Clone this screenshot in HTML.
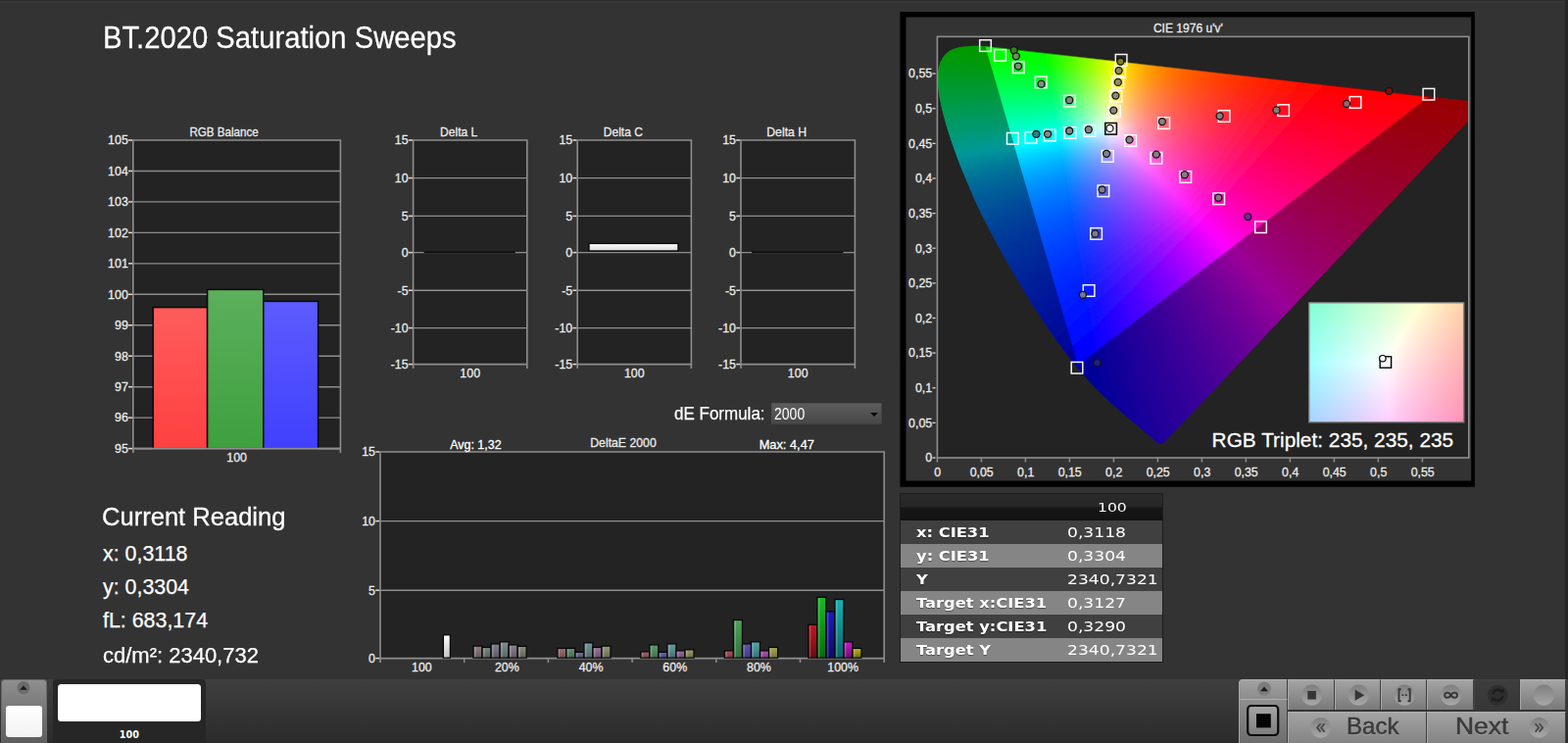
<!DOCTYPE html>
<html lang="en">
<head>
<meta charset="utf-8">
<title>BT.2020 Saturation Sweeps</title>
<style>
html,body{margin:0;padding:0}
body{width:1600px;height:758px;overflow:hidden;position:relative;background:#333333;color:#fff;
  font-family:"Liberation Sans",sans-serif;}
.abs{position:absolute;white-space:nowrap;line-height:1;transform-origin:0 0}
#topstrip{left:0;top:0;width:1600px;height:3px;background:linear-gradient(#2e2e2e 0,#2e2e2e 33%,#383838 40%,#383838 100%)}
#rightstrip{left:1597px;top:0;width:3px;height:694px;background:#262626}
#charts{position:absolute;left:0;top:0}
h1{margin:0;font-weight:normal;-webkit-text-stroke:.3px #fff;font-size:31.6px;left:104.8px;top:23px;transform:scaleX(.925);color:#fff;text-shadow:0 0 1px rgba(0,0,0,.5)}
#reading{left:105px;top:0}
#reading h2{-webkit-text-stroke:.28px #fff;margin:0;font-weight:normal;font-size:25px;position:absolute;left:-0.6px;top:514.6px;white-space:nowrap;transform:scaleX(1.022);transform-origin:0 0}
#reading p{-webkit-text-stroke:.25px #fff;margin:0;font-size:21.4px;position:absolute;left:0;white-space:nowrap}
#deform{-webkit-text-stroke:.25px #fff;left:687.6px;top:412.6px;font-size:18.4px;transform:scaleX(.924)}
#desel{left:787px;top:411.4px;width:112.6px;height:21.2px;box-sizing:border-box;
  background:linear-gradient(#5d5d5d,#474747);border:1px solid #505050;border-bottom-color:#3e3e3e;border-right-color:#444}
#desel span{position:absolute;left:1.8px;top:2.6px;font-size:15.6px;color:#fff;transform:scaleX(.9);transform-origin:0 0}
#desel i{position:absolute;left:100.2px;top:8.4px;width:0;height:0;border-left:4.2px solid transparent;border-right:4.2px solid transparent;border-top:4px solid #0a0a0a}
table#data{position:absolute;left:919.4px;top:503.8px;width:267px;border-collapse:collapse;table-layout:fixed;
  font-family:"DejaVu Sans","Liberation Sans",sans-serif;font-size:14.6px;color:#fff;box-shadow:0 0 0 1px #1c1c1c}
table#data td,table#data th{padding:0;height:24px;white-space:nowrap;overflow:visible;line-height:24px;text-align:left}
table#data tr.hd th{height:26.4px;line-height:26.4px;background:linear-gradient(#2a2a2a 0,#262626 48%,#161616 52%,#121212 100%);font-weight:normal}
table#data tr.d td{background:#404040}
table#data tr.l td{background:#858585}
table#data td.k{width:170.6px;font-weight:bold}
table#data td.k span{display:inline-block;transform-origin:0 50%;transform:scaleX(1.117);margin-left:15.2px;text-shadow:0 1px 1px rgba(0,0,0,.45)}
table#data td.v span{display:inline-block;margin-left:-1px;transform-origin:0 50%;transform:scaleX(1.175)}
table#data th span{display:inline-block;transform-origin:0 50%;transform:scaleX(1.24);font-size:12.6px}
#toolbar{left:0;top:693px;width:1600px;height:65px;background:linear-gradient(#3f3f3f,#2b2b2b)}
.tb{position:absolute;box-sizing:border-box}
#lbtn{left:1px;top:0;width:47px;height:66px;border-radius:4px 4px 0 0;background:linear-gradient(#8f8f8f,#5c5c5c);border:1px solid #6a6a6a;border-bottom:0}
#lbtn .sw{position:absolute;left:4px;top:26.4px;width:37px;height:31.4px;border-radius:3px;background:linear-gradient(#fff,#f2f2f2)}
#sel{left:54px;top:0;width:155.6px;height:66px;border-radius:4px 4px 0 0;background:#262626}
#sel .sw{position:absolute;left:5.4px;top:5.4px;width:146px;height:37.6px;border-radius:3.5px;background:#fff}
#sel b{position:absolute;left:0;width:100%;text-align:center;top:51.6px;font:bold 9.6px/1 "DejaVu Sans",sans-serif;color:#fff}
.gbtn{background:linear-gradient(#a4a4a4,#797979);border-left:1px solid #a8a8a8;border-top:1px solid #b0b0b0;border-right:1px solid #3e3e3e}
.gbtn svg{position:absolute;left:0;top:0}
#nav span{position:absolute;transform-origin:0 0;-webkit-text-stroke:.45px #3a3a3a;color:#3a3a3a;font-size:23.6px;line-height:1;white-space:nowrap;text-shadow:0 1px 0 rgba(255,255,255,.25)}
</style>
</head>
<body>
<div id="topstrip" class="abs"></div>
<div id="rightstrip" class="abs"></div>
<h1 class="abs">BT.2020 Saturation Sweeps</h1>

<svg id="charts" width="1600" height="758" viewBox="0 0 1600 758" font-family="Liberation Sans, sans-serif">
<defs>
<linearGradient id="gr" x1="0" y1="0" x2="0" y2="1"><stop offset="0" stop-color="#ff5c5c"/><stop offset="1" stop-color="#ff4040"/></linearGradient>
<linearGradient id="gg" x1="0" y1="0" x2="0" y2="1"><stop offset="0" stop-color="#5cb05c"/><stop offset="1" stop-color="#3ea03e"/></linearGradient>
<linearGradient id="gb" x1="0" y1="0" x2="0" y2="1"><stop offset="0" stop-color="#5c5cff"/><stop offset="1" stop-color="#4040ff"/></linearGradient>
<linearGradient id="gw" x1="0" y1="0" x2="0" y2="1"><stop offset="0" stop-color="#ffffff"/><stop offset="1" stop-color="#d8d8d8"/></linearGradient>
</defs>
<g id="rgb-balance">
<rect x="135.8" y="143" width="211.6" height="314.6" fill="#232323"/>
<path d="M131 143H135.2" stroke="#dcdcdc" stroke-width="1.5"/>
<text x="130.8" y="147.3" font-size="12.4" text-anchor="end" fill="#ececec" stroke="#ececec" stroke-width=".28">105</text>
<path d="M135.8 174.46H347.4" stroke="#8e8e8e" stroke-width="1.4"/>
<path d="M131 174.46H135.2" stroke="#dcdcdc" stroke-width="1.5"/>
<text x="130.8" y="178.76" font-size="12.4" text-anchor="end" fill="#ececec" stroke="#ececec" stroke-width=".28">104</text>
<path d="M135.8 205.92H347.4" stroke="#8e8e8e" stroke-width="1.4"/>
<path d="M131 205.92H135.2" stroke="#dcdcdc" stroke-width="1.5"/>
<text x="130.8" y="210.22" font-size="12.4" text-anchor="end" fill="#ececec" stroke="#ececec" stroke-width=".28">103</text>
<path d="M135.8 237.38H347.4" stroke="#8e8e8e" stroke-width="1.4"/>
<path d="M131 237.38H135.2" stroke="#dcdcdc" stroke-width="1.5"/>
<text x="130.8" y="241.68" font-size="12.4" text-anchor="end" fill="#ececec" stroke="#ececec" stroke-width=".28">102</text>
<path d="M135.8 268.84H347.4" stroke="#8e8e8e" stroke-width="1.4"/>
<path d="M131 268.84H135.2" stroke="#dcdcdc" stroke-width="1.5"/>
<text x="130.8" y="273.14" font-size="12.4" text-anchor="end" fill="#ececec" stroke="#ececec" stroke-width=".28">101</text>
<path d="M135.8 300.3H347.4" stroke="#8e8e8e" stroke-width="1.4"/>
<path d="M131 300.3H135.2" stroke="#dcdcdc" stroke-width="1.5"/>
<text x="130.8" y="304.6" font-size="12.4" text-anchor="end" fill="#ececec" stroke="#ececec" stroke-width=".28">100</text>
<path d="M135.8 331.76H347.4" stroke="#8e8e8e" stroke-width="1.4"/>
<path d="M131 331.76H135.2" stroke="#dcdcdc" stroke-width="1.5"/>
<text x="130.8" y="336.06" font-size="12.4" text-anchor="end" fill="#ececec" stroke="#ececec" stroke-width=".28">99</text>
<path d="M135.8 363.22H347.4" stroke="#8e8e8e" stroke-width="1.4"/>
<path d="M131 363.22H135.2" stroke="#dcdcdc" stroke-width="1.5"/>
<text x="130.8" y="367.52" font-size="12.4" text-anchor="end" fill="#ececec" stroke="#ececec" stroke-width=".28">98</text>
<path d="M135.8 394.68H347.4" stroke="#8e8e8e" stroke-width="1.4"/>
<path d="M131 394.68H135.2" stroke="#dcdcdc" stroke-width="1.5"/>
<text x="130.8" y="398.98" font-size="12.4" text-anchor="end" fill="#ececec" stroke="#ececec" stroke-width=".28">97</text>
<path d="M135.8 426.14H347.4" stroke="#8e8e8e" stroke-width="1.4"/>
<path d="M131 426.14H135.2" stroke="#dcdcdc" stroke-width="1.5"/>
<text x="130.8" y="430.44" font-size="12.4" text-anchor="end" fill="#ececec" stroke="#ececec" stroke-width=".28">96</text>
<path d="M131 457.6H135.2" stroke="#dcdcdc" stroke-width="1.5"/>
<text x="130.8" y="461.9" font-size="12.4" text-anchor="end" fill="#ececec" stroke="#ececec" stroke-width=".28">95</text>
<path d="M135.8 462.1V143H347.4V462.1" fill="none" stroke="#8e8e8e" stroke-width="1.6"/>
<path d="M135.8 457.6H347.4" stroke="#8e8e8e" stroke-width="1.6"/>
<text x="228.6" y="138.5" font-size="12.6" text-anchor="middle" textLength="70.4" lengthAdjust="spacingAndGlyphs" fill="#ececec" stroke="#ececec" stroke-width=".28">RGB Balance</text>
<text x="241.6" y="471.4" font-size="12.4" text-anchor="middle" fill="#ececec" stroke="#ececec" stroke-width=".28">100</text>
<rect x="156.2" y="313.6" width="55.4" height="144" fill="url(#gr)" stroke="#0a0a0a" stroke-width="1.5"/>
<rect x="211.6" y="295.4" width="57.2" height="162.2" fill="url(#gg)" stroke="#0a0a0a" stroke-width="1.5"/>
<rect x="268.8" y="307.4" width="55.8" height="150.2" fill="url(#gb)" stroke="#0a0a0a" stroke-width="1.5"/>
<path d="M135.8 457.6H347.4" stroke="#8e8e8e" stroke-width="1.6"/>
</g>
<g id="delta-l">
<rect x="421.6" y="143" width="116.2" height="228.6" fill="#232323"/>
<path d="M416.8 143H421" stroke="#dcdcdc" stroke-width="1.5"/>
<text x="416.6" y="147.3" font-size="12.4" text-anchor="end" fill="#ececec" stroke="#ececec" stroke-width=".28">15</text>
<path d="M421.6 181.6H537.8" stroke="#8e8e8e" stroke-width="1.4"/>
<path d="M416.8 181.6H421" stroke="#dcdcdc" stroke-width="1.5"/>
<text x="416.6" y="185.9" font-size="12.4" text-anchor="end" fill="#ececec" stroke="#ececec" stroke-width=".28">10</text>
<path d="M421.6 220.4H537.8" stroke="#8e8e8e" stroke-width="1.4"/>
<path d="M416.8 220.4H421" stroke="#dcdcdc" stroke-width="1.5"/>
<text x="416.6" y="224.7" font-size="12.4" text-anchor="end" fill="#ececec" stroke="#ececec" stroke-width=".28">5</text>
<path d="M421.6 257.6H537.8" stroke="#8e8e8e" stroke-width="1.4"/>
<path d="M416.8 257.6H421" stroke="#dcdcdc" stroke-width="1.5"/>
<text x="416.6" y="261.9" font-size="12.4" text-anchor="end" fill="#ececec" stroke="#ececec" stroke-width=".28">0</text>
<path d="M421.6 296.2H537.8" stroke="#8e8e8e" stroke-width="1.4"/>
<path d="M416.8 296.2H421" stroke="#dcdcdc" stroke-width="1.5"/>
<text x="416.6" y="300.5" font-size="12.4" text-anchor="end" fill="#ececec" stroke="#ececec" stroke-width=".28">-5</text>
<path d="M421.6 334.6H537.8" stroke="#8e8e8e" stroke-width="1.4"/>
<path d="M416.8 334.6H421" stroke="#dcdcdc" stroke-width="1.5"/>
<text x="416.6" y="338.9" font-size="12.4" text-anchor="end" fill="#ececec" stroke="#ececec" stroke-width=".28">-10</text>
<path d="M416.8 371.6H421" stroke="#dcdcdc" stroke-width="1.5"/>
<text x="416.6" y="375.9" font-size="12.4" text-anchor="end" fill="#ececec" stroke="#ececec" stroke-width=".28">-15</text>
<path d="M421.6 376.1V143H537.8V376.1" fill="none" stroke="#8e8e8e" stroke-width="1.6"/>
<path d="M421.6 371.6H537.8" stroke="#8e8e8e" stroke-width="1.6"/>
<text x="468.2" y="138.5" font-size="12.6" text-anchor="middle" textLength="38.2" lengthAdjust="spacingAndGlyphs" fill="#ececec" stroke="#ececec" stroke-width=".28">Delta L</text>
<text x="479.7" y="385.4" font-size="12.4" text-anchor="middle" fill="#ececec" stroke="#ececec" stroke-width=".28">100</text>
<path d="M432.6 257.4H525.8" stroke="#0c0c0c" stroke-width="1.7"/>
</g>
<g id="delta-c">
<rect x="589.2" y="143" width="116.2" height="228.6" fill="#232323"/>
<path d="M584.4 143H588.6" stroke="#dcdcdc" stroke-width="1.5"/>
<text x="584.2" y="147.3" font-size="12.4" text-anchor="end" fill="#ececec" stroke="#ececec" stroke-width=".28">15</text>
<path d="M589.2 181.6H705.4" stroke="#8e8e8e" stroke-width="1.4"/>
<path d="M584.4 181.6H588.6" stroke="#dcdcdc" stroke-width="1.5"/>
<text x="584.2" y="185.9" font-size="12.4" text-anchor="end" fill="#ececec" stroke="#ececec" stroke-width=".28">10</text>
<path d="M589.2 220.4H705.4" stroke="#8e8e8e" stroke-width="1.4"/>
<path d="M584.4 220.4H588.6" stroke="#dcdcdc" stroke-width="1.5"/>
<text x="584.2" y="224.7" font-size="12.4" text-anchor="end" fill="#ececec" stroke="#ececec" stroke-width=".28">5</text>
<path d="M589.2 257.6H705.4" stroke="#8e8e8e" stroke-width="1.4"/>
<path d="M584.4 257.6H588.6" stroke="#dcdcdc" stroke-width="1.5"/>
<text x="584.2" y="261.9" font-size="12.4" text-anchor="end" fill="#ececec" stroke="#ececec" stroke-width=".28">0</text>
<path d="M589.2 296.2H705.4" stroke="#8e8e8e" stroke-width="1.4"/>
<path d="M584.4 296.2H588.6" stroke="#dcdcdc" stroke-width="1.5"/>
<text x="584.2" y="300.5" font-size="12.4" text-anchor="end" fill="#ececec" stroke="#ececec" stroke-width=".28">-5</text>
<path d="M589.2 334.6H705.4" stroke="#8e8e8e" stroke-width="1.4"/>
<path d="M584.4 334.6H588.6" stroke="#dcdcdc" stroke-width="1.5"/>
<text x="584.2" y="338.9" font-size="12.4" text-anchor="end" fill="#ececec" stroke="#ececec" stroke-width=".28">-10</text>
<path d="M584.4 371.6H588.6" stroke="#dcdcdc" stroke-width="1.5"/>
<text x="584.2" y="375.9" font-size="12.4" text-anchor="end" fill="#ececec" stroke="#ececec" stroke-width=".28">-15</text>
<path d="M589.2 376.1V143H705.4V376.1" fill="none" stroke="#8e8e8e" stroke-width="1.6"/>
<path d="M589.2 371.6H705.4" stroke="#8e8e8e" stroke-width="1.6"/>
<text x="635.8" y="138.5" font-size="12.6" text-anchor="middle" textLength="40" lengthAdjust="spacingAndGlyphs" fill="#ececec" stroke="#ececec" stroke-width=".28">Delta C</text>
<text x="647.3" y="385.4" font-size="12.4" text-anchor="middle" fill="#ececec" stroke="#ececec" stroke-width=".28">100</text>
<rect x="601" y="248.4" width="91" height="7.6" fill="url(#gw)" stroke="#0a0a0a" stroke-width="1.4"/>
</g>
<g id="delta-h">
<rect x="756" y="143" width="116.4" height="228.6" fill="#232323"/>
<path d="M751.2 143H755.4" stroke="#dcdcdc" stroke-width="1.5"/>
<text x="751" y="147.3" font-size="12.4" text-anchor="end" fill="#ececec" stroke="#ececec" stroke-width=".28">15</text>
<path d="M756 181.6H872.4" stroke="#8e8e8e" stroke-width="1.4"/>
<path d="M751.2 181.6H755.4" stroke="#dcdcdc" stroke-width="1.5"/>
<text x="751" y="185.9" font-size="12.4" text-anchor="end" fill="#ececec" stroke="#ececec" stroke-width=".28">10</text>
<path d="M756 220.4H872.4" stroke="#8e8e8e" stroke-width="1.4"/>
<path d="M751.2 220.4H755.4" stroke="#dcdcdc" stroke-width="1.5"/>
<text x="751" y="224.7" font-size="12.4" text-anchor="end" fill="#ececec" stroke="#ececec" stroke-width=".28">5</text>
<path d="M756 257.6H872.4" stroke="#8e8e8e" stroke-width="1.4"/>
<path d="M751.2 257.6H755.4" stroke="#dcdcdc" stroke-width="1.5"/>
<text x="751" y="261.9" font-size="12.4" text-anchor="end" fill="#ececec" stroke="#ececec" stroke-width=".28">0</text>
<path d="M756 296.2H872.4" stroke="#8e8e8e" stroke-width="1.4"/>
<path d="M751.2 296.2H755.4" stroke="#dcdcdc" stroke-width="1.5"/>
<text x="751" y="300.5" font-size="12.4" text-anchor="end" fill="#ececec" stroke="#ececec" stroke-width=".28">-5</text>
<path d="M756 334.6H872.4" stroke="#8e8e8e" stroke-width="1.4"/>
<path d="M751.2 334.6H755.4" stroke="#dcdcdc" stroke-width="1.5"/>
<text x="751" y="338.9" font-size="12.4" text-anchor="end" fill="#ececec" stroke="#ececec" stroke-width=".28">-10</text>
<path d="M751.2 371.6H755.4" stroke="#dcdcdc" stroke-width="1.5"/>
<text x="751" y="375.9" font-size="12.4" text-anchor="end" fill="#ececec" stroke="#ececec" stroke-width=".28">-15</text>
<path d="M756 376.1V143H872.4V376.1" fill="none" stroke="#8e8e8e" stroke-width="1.6"/>
<path d="M756 371.6H872.4" stroke="#8e8e8e" stroke-width="1.6"/>
<text x="802.7" y="138.5" font-size="12.6" text-anchor="middle" textLength="40.9" lengthAdjust="spacingAndGlyphs" fill="#ececec" stroke="#ececec" stroke-width=".28">Delta H</text>
<text x="814.2" y="385.4" font-size="12.4" text-anchor="middle" fill="#ececec" stroke="#ececec" stroke-width=".28">100</text>
<path d="M767 257.4H860.4" stroke="#0c0c0c" stroke-width="1.7"/>
</g>
<g id="deltae">
<rect x="388" y="461" width="514.2" height="210.6" fill="#232323"/>
<path d="M383.2 461H387.4" stroke="#dcdcdc" stroke-width="1.5"/>
<text x="383" y="465.3" font-size="12.4" text-anchor="end" fill="#ececec" stroke="#ececec" stroke-width=".28">15</text>
<path d="M388 531.6H902.2" stroke="#8e8e8e" stroke-width="1.4"/>
<path d="M383.2 531.6H387.4" stroke="#dcdcdc" stroke-width="1.5"/>
<text x="383" y="535.9" font-size="12.4" text-anchor="end" fill="#ececec" stroke="#ececec" stroke-width=".28">10</text>
<path d="M388 602.2H902.2" stroke="#8e8e8e" stroke-width="1.4"/>
<path d="M383.2 602.2H387.4" stroke="#dcdcdc" stroke-width="1.5"/>
<text x="383" y="606.5" font-size="12.4" text-anchor="end" fill="#ececec" stroke="#ececec" stroke-width=".28">5</text>
<path d="M383.2 671.6H387.4" stroke="#dcdcdc" stroke-width="1.5"/>
<text x="383" y="675.9" font-size="12.4" text-anchor="end" fill="#ececec" stroke="#ececec" stroke-width=".28">0</text>
<path d="M388 676.1V461H902.2V676.1" fill="none" stroke="#8e8e8e" stroke-width="1.6"/>
<path d="M388 671.6H902.2" stroke="#8e8e8e" stroke-width="1.6"/>
<text x="645.1" y="456.5" font-size="12.6" text-anchor="middle" fill="#ececec" stroke="#ececec" stroke-width=".28"></text>
<path d="M473.7 671.6V676.1" stroke="#8e8e8e" stroke-width="1.5"/>
<path d="M559.4 671.6V676.1" stroke="#8e8e8e" stroke-width="1.5"/>
<path d="M645.1 671.6V676.1" stroke="#8e8e8e" stroke-width="1.5"/>
<path d="M730.8 671.6V676.1" stroke="#8e8e8e" stroke-width="1.5"/>
<path d="M816.5 671.6V676.1" stroke="#8e8e8e" stroke-width="1.5"/>
<text x="430.35" y="685" font-size="12.4" text-anchor="middle" fill="#ececec" stroke="#ececec" stroke-width=".28">100</text>
<text x="517.35" y="685" font-size="12.4" text-anchor="middle" fill="#ececec" stroke="#ececec" stroke-width=".28">20%</text>
<text x="603.05" y="685" font-size="12.4" text-anchor="middle" fill="#ececec" stroke="#ececec" stroke-width=".28">40%</text>
<text x="688.75" y="685" font-size="12.4" text-anchor="middle" fill="#ececec" stroke="#ececec" stroke-width=".28">60%</text>
<text x="774.45" y="685" font-size="12.4" text-anchor="middle" fill="#ececec" stroke="#ececec" stroke-width=".28">80%</text>
<text x="860.15" y="685" font-size="12.4" text-anchor="middle" fill="#ececec" stroke="#ececec" stroke-width=".28">100%</text>
<text x="485.4" y="458.4" font-size="12.8" text-anchor="middle" textLength="52.5" lengthAdjust="spacingAndGlyphs" fill="#ffffff" stroke="#ffffff" stroke-width=".28">Avg: 1,32</text>
<text x="636" y="456.2" font-size="12.6" text-anchor="middle" textLength="67.5" lengthAdjust="spacingAndGlyphs" fill="#ececec" stroke="#ececec" stroke-width=".28">DeltaE 2000</text>
<text x="802.8" y="458.4" font-size="12.8" text-anchor="middle" textLength="56.2" lengthAdjust="spacingAndGlyphs" fill="#ffffff" stroke="#ffffff" stroke-width=".28">Max: 4,47</text>
<linearGradient id="b1" x1="0" y1="0" x2="0" y2="1"><stop offset="0" stop-color="#ffffff"/><stop offset="1" stop-color="#c0c0c0"/></linearGradient><rect x="452.4" y="647.8" width="7" height="23.3" fill="url(#b1)" stroke="#080808" stroke-width="1.3"/><rect x="453.4" y="648.8" width="1.6" height="21.8" fill="#ffffff" opacity=".22"/>
<linearGradient id="b2" x1="0" y1="0" x2="0" y2="1"><stop offset="0" stop-color="#8f7e81"/><stop offset="1" stop-color="#655a5c"/></linearGradient><rect x="483" y="659.1" width="9.03" height="12" fill="url(#b2)" stroke="#080808" stroke-width="1.3"/><rect x="484" y="660.1" width="1.6" height="10.5" fill="#ffffff" opacity=".22"/>
<linearGradient id="b3" x1="0" y1="0" x2="0" y2="1"><stop offset="0" stop-color="#7b8a7e"/><stop offset="1" stop-color="#566159"/></linearGradient><rect x="492.03" y="660.4" width="9.03" height="10.7" fill="url(#b3)" stroke="#080808" stroke-width="1.3"/><rect x="493.03" y="661.4" width="1.6" height="9.2" fill="#ffffff" opacity=".22"/>
<linearGradient id="b4" x1="0" y1="0" x2="0" y2="1"><stop offset="0" stop-color="#817f92"/><stop offset="1" stop-color="#5a5967"/></linearGradient><rect x="501.07" y="656.9" width="9.03" height="14.2" fill="url(#b4)" stroke="#080808" stroke-width="1.3"/><rect x="502.07" y="657.9" width="1.6" height="12.7" fill="#ffffff" opacity=".22"/>
<linearGradient id="b5" x1="0" y1="0" x2="0" y2="1"><stop offset="0" stop-color="#7f9090"/><stop offset="1" stop-color="#576565"/></linearGradient><rect x="510.1" y="654.8" width="9.03" height="16.3" fill="url(#b5)" stroke="#080808" stroke-width="1.3"/><rect x="511.1" y="655.8" width="1.6" height="14.8" fill="#ffffff" opacity=".22"/>
<linearGradient id="b6" x1="0" y1="0" x2="0" y2="1"><stop offset="0" stop-color="#8f8290"/><stop offset="1" stop-color="#635a65"/></linearGradient><rect x="519.13" y="657.9" width="9.03" height="13.2" fill="url(#b6)" stroke="#080808" stroke-width="1.3"/><rect x="520.13" y="658.9" width="1.6" height="11.7" fill="#ffffff" opacity=".22"/>
<linearGradient id="b7" x1="0" y1="0" x2="0" y2="1"><stop offset="0" stop-color="#8c8e80"/><stop offset="1" stop-color="#616358"/></linearGradient><rect x="528.17" y="659.3" width="9.03" height="11.8" fill="url(#b7)" stroke="#080808" stroke-width="1.3"/><rect x="529.17" y="660.3" width="1.6" height="10.3" fill="#ffffff" opacity=".22"/>
<linearGradient id="b8" x1="0" y1="0" x2="0" y2="1"><stop offset="0" stop-color="#9c6f75"/><stop offset="1" stop-color="#704d52"/></linearGradient><rect x="568.8" y="661.4" width="9.03" height="9.7" fill="url(#b8)" stroke="#080808" stroke-width="1.3"/><rect x="569.8" y="662.4" width="1.6" height="8.2" fill="#ffffff" opacity=".22"/>
<linearGradient id="b9" x1="0" y1="0" x2="0" y2="1"><stop offset="0" stop-color="#6b9373"/><stop offset="1" stop-color="#47674e"/></linearGradient><rect x="577.83" y="661.4" width="9.03" height="9.7" fill="url(#b9)" stroke="#080808" stroke-width="1.3"/><rect x="578.83" y="662.4" width="1.6" height="8.2" fill="#ffffff" opacity=".22"/>
<linearGradient id="b10" x1="0" y1="0" x2="0" y2="1"><stop offset="0" stop-color="#7a72a1"/><stop offset="1" stop-color="#524e70"/></linearGradient><rect x="586.87" y="665.3" width="9.03" height="5.8" fill="url(#b10)" stroke="#080808" stroke-width="1.3"/><rect x="587.87" y="666.3" width="1.6" height="4.3" fill="#ffffff" opacity=".22"/>
<linearGradient id="b11" x1="0" y1="0" x2="0" y2="1"><stop offset="0" stop-color="#75989a"/><stop offset="1" stop-color="#4f696b"/></linearGradient><rect x="595.9" y="655.8" width="9.03" height="15.3" fill="url(#b11)" stroke="#080808" stroke-width="1.3"/><rect x="596.9" y="656.8" width="1.6" height="13.8" fill="#ffffff" opacity=".22"/>
<linearGradient id="b12" x1="0" y1="0" x2="0" y2="1"><stop offset="0" stop-color="#9a779c"/><stop offset="1" stop-color="#6a506e"/></linearGradient><rect x="604.93" y="660.4" width="9.03" height="10.7" fill="url(#b12)" stroke="#080808" stroke-width="1.3"/><rect x="605.93" y="661.4" width="1.6" height="9.2" fill="#ffffff" opacity=".22"/>
<linearGradient id="b13" x1="0" y1="0" x2="0" y2="1"><stop offset="0" stop-color="#959975"/><stop offset="1" stop-color="#676a50"/></linearGradient><rect x="613.97" y="659.1" width="9.03" height="12" fill="url(#b13)" stroke="#080808" stroke-width="1.3"/><rect x="614.97" y="660.1" width="1.6" height="10.5" fill="#ffffff" opacity=".22"/>
<linearGradient id="b14" x1="0" y1="0" x2="0" y2="1"><stop offset="0" stop-color="#a86269"/><stop offset="1" stop-color="#794449"/></linearGradient><rect x="653.8" y="664.9" width="9.03" height="6.2" fill="url(#b14)" stroke="#080808" stroke-width="1.3"/><rect x="654.8" y="665.9" width="1.6" height="4.7" fill="#ffffff" opacity=".22"/>
<linearGradient id="b15" x1="0" y1="0" x2="0" y2="1"><stop offset="0" stop-color="#5f9a69"/><stop offset="1" stop-color="#3e7047"/></linearGradient><rect x="662.83" y="657.9" width="9.03" height="13.2" fill="url(#b15)" stroke="#080808" stroke-width="1.3"/><rect x="663.83" y="658.9" width="1.6" height="11.7" fill="#ffffff" opacity=".22"/>
<linearGradient id="b16" x1="0" y1="0" x2="0" y2="1"><stop offset="0" stop-color="#6f66a8"/><stop offset="1" stop-color="#4b4479"/></linearGradient><rect x="671.87" y="665.3" width="9.03" height="5.8" fill="url(#b16)" stroke="#080808" stroke-width="1.3"/><rect x="672.87" y="666.3" width="1.6" height="4.3" fill="#ffffff" opacity=".22"/>
<linearGradient id="b17" x1="0" y1="0" x2="0" y2="1"><stop offset="0" stop-color="#6b9ea0"/><stop offset="1" stop-color="#456e70"/></linearGradient><rect x="680.9" y="656.9" width="9.03" height="14.2" fill="url(#b17)" stroke="#080808" stroke-width="1.3"/><rect x="681.9" y="657.9" width="1.6" height="12.7" fill="#ffffff" opacity=".22"/>
<linearGradient id="b18" x1="0" y1="0" x2="0" y2="1"><stop offset="0" stop-color="#a56da8"/><stop offset="1" stop-color="#724975"/></linearGradient><rect x="689.93" y="663.9" width="9.03" height="7.2" fill="url(#b18)" stroke="#080808" stroke-width="1.3"/><rect x="690.93" y="664.9" width="1.6" height="5.7" fill="#ffffff" opacity=".22"/>
<linearGradient id="b19" x1="0" y1="0" x2="0" y2="1"><stop offset="0" stop-color="#9e9e69"/><stop offset="1" stop-color="#6e6e45"/></linearGradient><rect x="698.97" y="662.8" width="9.03" height="8.3" fill="url(#b19)" stroke="#080808" stroke-width="1.3"/><rect x="699.97" y="663.8" width="1.6" height="6.8" fill="#ffffff" opacity=".22"/>
<linearGradient id="b20" x1="0" y1="0" x2="0" y2="1"><stop offset="0" stop-color="#b3505b"/><stop offset="1" stop-color="#80353e"/></linearGradient><rect x="739.4" y="663.9" width="9.03" height="7.2" fill="url(#b20)" stroke="#080808" stroke-width="1.3"/><rect x="740.4" y="664.9" width="1.6" height="5.7" fill="#ffffff" opacity=".22"/>
<linearGradient id="b21" x1="0" y1="0" x2="0" y2="1"><stop offset="0" stop-color="#50a15b"/><stop offset="1" stop-color="#33723c"/></linearGradient><rect x="748.43" y="632.5" width="9.03" height="38.6" fill="url(#b21)" stroke="#080808" stroke-width="1.3"/><rect x="749.43" y="633.5" width="1.6" height="37.1" fill="#ffffff" opacity=".22"/>
<linearGradient id="b22" x1="0" y1="0" x2="0" y2="1"><stop offset="0" stop-color="#5f56b3"/><stop offset="1" stop-color="#3e3780"/></linearGradient><rect x="757.47" y="656.9" width="9.03" height="14.2" fill="url(#b22)" stroke="#080808" stroke-width="1.3"/><rect x="758.47" y="657.9" width="1.6" height="12.7" fill="#ffffff" opacity=".22"/>
<linearGradient id="b23" x1="0" y1="0" x2="0" y2="1"><stop offset="0" stop-color="#56a5a8"/><stop offset="1" stop-color="#357275"/></linearGradient><rect x="766.5" y="654.8" width="9.03" height="16.3" fill="url(#b23)" stroke="#080808" stroke-width="1.3"/><rect x="767.5" y="655.8" width="1.6" height="14.8" fill="#ffffff" opacity=".22"/>
<linearGradient id="b24" x1="0" y1="0" x2="0" y2="1"><stop offset="0" stop-color="#b05bb3"/><stop offset="1" stop-color="#7d3c80"/></linearGradient><rect x="775.53" y="663.9" width="9.03" height="7.2" fill="url(#b24)" stroke="#080808" stroke-width="1.3"/><rect x="776.53" y="664.9" width="1.6" height="5.7" fill="#ffffff" opacity=".22"/>
<linearGradient id="b25" x1="0" y1="0" x2="0" y2="1"><stop offset="0" stop-color="#a8a858"/><stop offset="1" stop-color="#757539"/></linearGradient><rect x="784.57" y="660.4" width="9.03" height="10.7" fill="url(#b25)" stroke="#080808" stroke-width="1.3"/><rect x="785.57" y="661.4" width="1.6" height="9.2" fill="#ffffff" opacity=".22"/>
<linearGradient id="b26" x1="0" y1="0" x2="0" y2="1"><stop offset="0" stop-color="#c01822"/><stop offset="1" stop-color="#6a0a10"/></linearGradient><rect x="824.8" y="637.3" width="9.03" height="33.8" fill="url(#b26)" stroke="#080808" stroke-width="1.3"/><rect x="825.8" y="638.3" width="1.6" height="32.3" fill="#ffffff" opacity=".22"/>
<linearGradient id="b27" x1="0" y1="0" x2="0" y2="1"><stop offset="0" stop-color="#18bc24"/><stop offset="1" stop-color="#0a6a10"/></linearGradient><rect x="833.83" y="609.3" width="9.03" height="61.8" fill="url(#b27)" stroke="#080808" stroke-width="1.3"/><rect x="834.83" y="610.3" width="1.6" height="60.3" fill="#ffffff" opacity=".22"/>
<linearGradient id="b28" x1="0" y1="0" x2="0" y2="1"><stop offset="0" stop-color="#2018c0"/><stop offset="1" stop-color="#0e0a6a"/></linearGradient><rect x="842.87" y="623.8" width="9.03" height="47.3" fill="url(#b28)" stroke="#080808" stroke-width="1.3"/><rect x="843.87" y="624.8" width="1.6" height="45.8" fill="#ffffff" opacity=".22"/>
<linearGradient id="b29" x1="0" y1="0" x2="0" y2="1"><stop offset="0" stop-color="#18b0b4"/><stop offset="1" stop-color="#0a6468"/></linearGradient><rect x="851.9" y="611.5" width="9.03" height="59.6" fill="url(#b29)" stroke="#080808" stroke-width="1.3"/><rect x="852.9" y="612.5" width="1.6" height="58.1" fill="#ffffff" opacity=".22"/>
<linearGradient id="b30" x1="0" y1="0" x2="0" y2="1"><stop offset="0" stop-color="#c818c8"/><stop offset="1" stop-color="#700a70"/></linearGradient><rect x="860.93" y="654.8" width="9.03" height="16.3" fill="url(#b30)" stroke="#080808" stroke-width="1.3"/><rect x="861.93" y="655.8" width="1.6" height="14.8" fill="#ffffff" opacity=".22"/>
<linearGradient id="b31" x1="0" y1="0" x2="0" y2="1"><stop offset="0" stop-color="#c0b818"/><stop offset="1" stop-color="#6c680a"/></linearGradient><rect x="869.97" y="661.4" width="9.03" height="9.7" fill="url(#b31)" stroke="#080808" stroke-width="1.3"/><rect x="870.97" y="662.4" width="1.6" height="8.2" fill="#ffffff" opacity=".22"/>
</g>
<g id="cie">
<path d="M918.4 12H1504.8V496.8H918.4Z M924.5 17.6V490.6H1501.2V17.6Z" fill="#000" fill-rule="evenodd"/>
<rect x="956.4" y="37.4" width="542.4" height="429.6" fill="#232323"/>
<defs><clipPath id="hs"><path d="M1186.7,452.7 L1186.6,452.8 L1186.4,453 L1186.2,453.1 L1185.7,453.2 L1185.1,453.1 L1184.4,453.1 L1183.6,452.9 L1182.6,452.5 L1181.5,451.8 L1180.3,450.9 L1178.9,449.8 L1177.1,448.4 L1175,446.6 L1172.7,444.6 L1170,442.3 L1166.8,439.6 L1163,436.3 L1158.5,432.5 L1154,428.7 L1150.1,425.4 L1146.9,422.7 L1144.2,420.4 L1141.5,418.1 L1138.6,415.5 L1135.3,412.6 L1131.9,409.5 L1128.3,406.1 L1124.5,402.5 L1120.7,398.6 L1116.6,394.6 L1112.3,390 L1107.7,384.8 L1102.6,378.8 L1097.1,372.2 L1091.3,364.9 L1085.3,357 L1079,348.4 L1072.4,339.2 L1065.7,329.4 L1058.8,319 L1051.8,307.9 L1044.6,296.1 L1037.3,284 L1030.1,271.7 L1023,259.1 L1015.9,246.2 L1009,233.2 L1002.5,220.5 L996.5,207.9 L990.9,195.3 L985.7,183.1 L980.9,171.4 L976.6,160.2 L972.7,149.5 L969.3,139.4 L966.3,130 L963.8,121.3 L961.7,113.3 L960.1,106 L958.7,99.2 L957.8,93 L957.2,87.5 L956.9,82.4 L956.9,77.8 L957.2,73.5 L957.8,69.7 L958.7,66.2 L959.8,63 L961.2,60.2 L962.8,57.7 L964.6,55.6 L966.7,53.7 L968.8,52.1 L971.2,50.8 L973.8,49.8 L976.4,48.9 L979.2,48.2 L982,47.8 L985,47.4 L988,47.2 L991.1,47 L994.3,46.8 L997.5,46.8 L1000.7,46.7 L1003.8,46.7 L1007,46.7 L1010.2,46.8 L1013.5,46.9 L1016.4,47 L1019.1,47.1 L1022.4,47.2 L1026.9,47.5 L1033.1,48 L1040.5,48.6 L1048.7,49.3 L1057,50.1 L1065.5,50.9 L1074.3,51.9 L1083.6,52.9 L1093.4,54 L1103.7,55.1 L1114.6,56.4 L1126,57.7 L1137.9,59.1 L1150.5,60.6 L1163.7,62.2 L1177.5,63.8 L1191.7,65.5 L1206.6,67.2 L1222.2,69.1 L1238,70.9 L1254,72.8 L1270.1,74.7 L1286.5,76.7 L1302.9,78.6 L1318.7,80.5 L1334.2,82.3 L1349.5,84.1 L1364.1,85.8 L1377.9,87.5 L1390.6,89 L1402.5,90.4 L1413.6,91.7 L1423.8,92.9 L1433.1,94 L1441.5,95 L1449.2,95.9 L1456.5,96.8 L1463.2,97.6 L1469.4,98.3 L1475.1,99 L1480.3,99.6 L1485,100.1 L1489.1,100.6 L1492.8,101 L1496,101.4 L1498.9,101.8 L1501.2,102 L1503.3,102.3 L1505.4,102.5 L1507.6,102.8 L1509.8,103.1 L1511.9,103.3 L1513.5,103.5 L1514.7,103.6 L1515.6,103.8 L1516.2,103.8 L1516.7,103.9Z"/></clipPath>
<clipPath id="plotc"><rect x="957" y="38" width="541.5" height="428.5"/></clipPath>
<clipPath id="belowgr"><path d="M806.9,24.4 L1656.1,121.3 L1700,600 L800,600 Z"/></clipPath>
<filter id="soft" x="-5%" y="-5%" width="110%" height="110%"><feGaussianBlur stdDeviation="2.2"/></filter>
<linearGradient id="w1" gradientUnits="userSpaceOnUse" x1="1133.6" y1="131.1" x2="1080" y2="139.5"><stop offset="0%" stop-color="#ffffff"/><stop offset="15%" stop-color="#caffcc"/><stop offset="30%" stop-color="#9dff9f"/><stop offset="45%" stop-color="#76ff79"/><stop offset="60%" stop-color="#53ff57"/><stop offset="80%" stop-color="#29ff2f"/><stop offset="100%" stop-color="#00ff09"/></linearGradient>
<linearGradient id="w2" gradientUnits="userSpaceOnUse" x1="1133.6" y1="131.1" x2="1080" y2="139.5"><stop offset="0%" stop-color="#ffffff"/><stop offset="15%" stop-color="#cbffcf"/><stop offset="30%" stop-color="#9effa5"/><stop offset="45%" stop-color="#77ff81"/><stop offset="60%" stop-color="#54ff61"/><stop offset="80%" stop-color="#29ff3b"/><stop offset="100%" stop-color="#00ff18"/></linearGradient>
<linearGradient id="w3" gradientUnits="userSpaceOnUse" x1="1133.6" y1="131.1" x2="1080" y2="139.5"><stop offset="0%" stop-color="#ffffff"/><stop offset="15%" stop-color="#ccffd2"/><stop offset="30%" stop-color="#9fffab"/><stop offset="45%" stop-color="#78ff89"/><stop offset="60%" stop-color="#55ff6b"/><stop offset="80%" stop-color="#2aff47"/><stop offset="100%" stop-color="#00ff27"/></linearGradient>
<linearGradient id="w4" gradientUnits="userSpaceOnUse" x1="1133.6" y1="131.1" x2="1080" y2="139.5"><stop offset="0%" stop-color="#ffffff"/><stop offset="15%" stop-color="#ccffd6"/><stop offset="30%" stop-color="#a0ffb1"/><stop offset="45%" stop-color="#79ff92"/><stop offset="60%" stop-color="#56ff75"/><stop offset="80%" stop-color="#2bff54"/><stop offset="100%" stop-color="#00ff36"/></linearGradient>
<linearGradient id="w5" gradientUnits="userSpaceOnUse" x1="1133.6" y1="131.1" x2="1080" y2="139.5"><stop offset="0%" stop-color="#ffffff"/><stop offset="15%" stop-color="#cdffd9"/><stop offset="30%" stop-color="#a1ffb8"/><stop offset="45%" stop-color="#7aff9a"/><stop offset="60%" stop-color="#57ff80"/><stop offset="80%" stop-color="#2bff61"/><stop offset="100%" stop-color="#00ff45"/></linearGradient>
<linearGradient id="w6" gradientUnits="userSpaceOnUse" x1="1133.6" y1="131.1" x2="1080" y2="139.5"><stop offset="0%" stop-color="#ffffff"/><stop offset="15%" stop-color="#ceffdc"/><stop offset="30%" stop-color="#a2ffbe"/><stop offset="45%" stop-color="#7bffa3"/><stop offset="60%" stop-color="#58ff8a"/><stop offset="80%" stop-color="#2cff6e"/><stop offset="100%" stop-color="#00ff54"/></linearGradient>
<linearGradient id="w7" gradientUnits="userSpaceOnUse" x1="1133.6" y1="131.1" x2="1080" y2="139.5"><stop offset="0%" stop-color="#ffffff"/><stop offset="15%" stop-color="#cfffe0"/><stop offset="30%" stop-color="#a3ffc4"/><stop offset="45%" stop-color="#7cffab"/><stop offset="60%" stop-color="#59ff95"/><stop offset="80%" stop-color="#2cff7b"/><stop offset="100%" stop-color="#00ff63"/></linearGradient>
<linearGradient id="w8" gradientUnits="userSpaceOnUse" x1="1133.6" y1="131.1" x2="1080" y2="139.5"><stop offset="0%" stop-color="#ffffff"/><stop offset="15%" stop-color="#cfffe3"/><stop offset="30%" stop-color="#a5ffca"/><stop offset="45%" stop-color="#7effb4"/><stop offset="60%" stop-color="#5affa0"/><stop offset="80%" stop-color="#2dff88"/><stop offset="100%" stop-color="#00ff73"/></linearGradient>
<linearGradient id="w9" gradientUnits="userSpaceOnUse" x1="1133.6" y1="131.1" x2="1080" y2="139.5"><stop offset="0%" stop-color="#ffffff"/><stop offset="15%" stop-color="#d0ffe7"/><stop offset="30%" stop-color="#a6ffd1"/><stop offset="45%" stop-color="#7fffbd"/><stop offset="60%" stop-color="#5bffab"/><stop offset="80%" stop-color="#2eff96"/><stop offset="100%" stop-color="#00ff83"/></linearGradient>
<linearGradient id="w10" gradientUnits="userSpaceOnUse" x1="1133.6" y1="131.1" x2="1080" y2="139.5"><stop offset="0%" stop-color="#ffffff"/><stop offset="15%" stop-color="#d1ffea"/><stop offset="30%" stop-color="#a7ffd7"/><stop offset="45%" stop-color="#80ffc6"/><stop offset="60%" stop-color="#5cffb7"/><stop offset="80%" stop-color="#2fffa4"/><stop offset="100%" stop-color="#00ff94"/></linearGradient>
<linearGradient id="w11" gradientUnits="userSpaceOnUse" x1="1133.6" y1="131.1" x2="1080" y2="139.5"><stop offset="0%" stop-color="#ffffff"/><stop offset="15%" stop-color="#d2ffee"/><stop offset="30%" stop-color="#a8ffde"/><stop offset="45%" stop-color="#81ffd0"/><stop offset="60%" stop-color="#5dffc3"/><stop offset="80%" stop-color="#2fffb3"/><stop offset="100%" stop-color="#00ffa5"/></linearGradient>
<linearGradient id="w12" gradientUnits="userSpaceOnUse" x1="1133.6" y1="131.1" x2="1080" y2="139.5"><stop offset="0%" stop-color="#ffffff"/><stop offset="15%" stop-color="#d2fff1"/><stop offset="30%" stop-color="#a9ffe5"/><stop offset="45%" stop-color="#83ffd9"/><stop offset="60%" stop-color="#5effcf"/><stop offset="80%" stop-color="#30ffc2"/><stop offset="100%" stop-color="#00ffb6"/></linearGradient>
<linearGradient id="w13" gradientUnits="userSpaceOnUse" x1="1133.6" y1="131.1" x2="1080" y2="139.5"><stop offset="0%" stop-color="#ffffff"/><stop offset="15%" stop-color="#d3fff5"/><stop offset="30%" stop-color="#aaffeb"/><stop offset="45%" stop-color="#84ffe3"/><stop offset="60%" stop-color="#60ffdb"/><stop offset="80%" stop-color="#31ffd1"/><stop offset="100%" stop-color="#00ffc8"/></linearGradient>
<linearGradient id="w14" gradientUnits="userSpaceOnUse" x1="1133.6" y1="131.1" x2="1080" y2="139.5"><stop offset="0%" stop-color="#ffffff"/><stop offset="15%" stop-color="#d4fff8"/><stop offset="30%" stop-color="#acfff2"/><stop offset="45%" stop-color="#85ffed"/><stop offset="60%" stop-color="#61ffe7"/><stop offset="80%" stop-color="#32ffe1"/><stop offset="100%" stop-color="#00ffdb"/></linearGradient>
<linearGradient id="w15" gradientUnits="userSpaceOnUse" x1="1133.6" y1="131.1" x2="1080" y2="139.5"><stop offset="0%" stop-color="#ffffff"/><stop offset="15%" stop-color="#d5fffc"/><stop offset="30%" stop-color="#adfff9"/><stop offset="45%" stop-color="#87fff6"/><stop offset="60%" stop-color="#62fff4"/><stop offset="80%" stop-color="#33fff1"/><stop offset="100%" stop-color="#00ffee"/></linearGradient>
<linearGradient id="w16" gradientUnits="userSpaceOnUse" x1="1133.6" y1="131.1" x2="1080" y2="139.5"><stop offset="0%" stop-color="#ffffff"/><stop offset="15%" stop-color="#d5feff"/><stop offset="30%" stop-color="#adfeff"/><stop offset="45%" stop-color="#87fdff"/><stop offset="60%" stop-color="#63fdff"/><stop offset="80%" stop-color="#33fcff"/><stop offset="100%" stop-color="#00fcff"/></linearGradient>
<linearGradient id="w17" gradientUnits="userSpaceOnUse" x1="1133.6" y1="131.1" x2="1080" y2="139.5"><stop offset="0%" stop-color="#ffffff"/><stop offset="15%" stop-color="#d3fbff"/><stop offset="30%" stop-color="#aaf7ff"/><stop offset="45%" stop-color="#84f4ff"/><stop offset="60%" stop-color="#5ff0ff"/><stop offset="80%" stop-color="#31ecff"/><stop offset="100%" stop-color="#00e9ff"/></linearGradient>
<linearGradient id="w18" gradientUnits="userSpaceOnUse" x1="1133.6" y1="131.1" x2="1080" y2="139.5"><stop offset="0%" stop-color="#ffffff"/><stop offset="15%" stop-color="#d1f7ff"/><stop offset="30%" stop-color="#a7f0ff"/><stop offset="45%" stop-color="#80eaff"/><stop offset="60%" stop-color="#5ce5ff"/><stop offset="80%" stop-color="#2edeff"/><stop offset="100%" stop-color="#00d8ff"/></linearGradient>
<linearGradient id="w19" gradientUnits="userSpaceOnUse" x1="1133.6" y1="131.1" x2="1080" y2="139.5"><stop offset="0%" stop-color="#ffffff"/><stop offset="15%" stop-color="#cff4ff"/><stop offset="30%" stop-color="#a4eaff"/><stop offset="45%" stop-color="#7ce2ff"/><stop offset="60%" stop-color="#59daff"/><stop offset="80%" stop-color="#2cd1ff"/><stop offset="100%" stop-color="#00c9ff"/></linearGradient>
<linearGradient id="w20" gradientUnits="userSpaceOnUse" x1="1133.6" y1="131.1" x2="1080" y2="139.5"><stop offset="0%" stop-color="#ffffff"/><stop offset="15%" stop-color="#cdf1ff"/><stop offset="30%" stop-color="#a0e4ff"/><stop offset="45%" stop-color="#79d9ff"/><stop offset="60%" stop-color="#56d0ff"/><stop offset="80%" stop-color="#2bc5ff"/><stop offset="100%" stop-color="#00bbff"/></linearGradient>
<linearGradient id="w21" gradientUnits="userSpaceOnUse" x1="1133.6" y1="131.1" x2="1080" y2="139.5"><stop offset="0%" stop-color="#ffffff"/><stop offset="15%" stop-color="#cbedff"/><stop offset="30%" stop-color="#9edeff"/><stop offset="45%" stop-color="#76d1ff"/><stop offset="60%" stop-color="#53c6ff"/><stop offset="80%" stop-color="#29baff"/><stop offset="100%" stop-color="#00afff"/></linearGradient>
<linearGradient id="w22" gradientUnits="userSpaceOnUse" x1="1133.6" y1="131.1" x2="1080" y2="139.5"><stop offset="0%" stop-color="#ffffff"/><stop offset="15%" stop-color="#c9eaff"/><stop offset="30%" stop-color="#9bd9ff"/><stop offset="45%" stop-color="#73caff"/><stop offset="60%" stop-color="#51bdff"/><stop offset="80%" stop-color="#28afff"/><stop offset="100%" stop-color="#00a4ff"/></linearGradient>
<linearGradient id="w23" gradientUnits="userSpaceOnUse" x1="1133.6" y1="131.1" x2="1080" y2="139.5"><stop offset="0%" stop-color="#ffffff"/><stop offset="15%" stop-color="#c7e7ff"/><stop offset="30%" stop-color="#98d3ff"/><stop offset="45%" stop-color="#71c3ff"/><stop offset="60%" stop-color="#4eb5ff"/><stop offset="80%" stop-color="#26a6ff"/><stop offset="100%" stop-color="#0099ff"/></linearGradient>
<linearGradient id="w24" gradientUnits="userSpaceOnUse" x1="1133.6" y1="131.1" x2="1080" y2="139.5"><stop offset="0%" stop-color="#ffffff"/><stop offset="15%" stop-color="#c5e4ff"/><stop offset="30%" stop-color="#95ceff"/><stop offset="45%" stop-color="#6ebcff"/><stop offset="60%" stop-color="#4cadff"/><stop offset="80%" stop-color="#259dff"/><stop offset="100%" stop-color="#0090ff"/></linearGradient>
<linearGradient id="w25" gradientUnits="userSpaceOnUse" x1="1133.6" y1="131.1" x2="1080" y2="139.5"><stop offset="0%" stop-color="#ffffff"/><stop offset="15%" stop-color="#c3e1ff"/><stop offset="30%" stop-color="#93c9ff"/><stop offset="45%" stop-color="#6bb6ff"/><stop offset="60%" stop-color="#4aa6ff"/><stop offset="80%" stop-color="#2495ff"/><stop offset="100%" stop-color="#0087ff"/></linearGradient>
<linearGradient id="w26" gradientUnits="userSpaceOnUse" x1="1133.6" y1="131.1" x2="1080" y2="139.5"><stop offset="0%" stop-color="#ffffff"/><stop offset="15%" stop-color="#c1deff"/><stop offset="30%" stop-color="#90c4ff"/><stop offset="45%" stop-color="#69b0ff"/><stop offset="60%" stop-color="#489fff"/><stop offset="80%" stop-color="#238dff"/><stop offset="100%" stop-color="#007eff"/></linearGradient>
<linearGradient id="w27" gradientUnits="userSpaceOnUse" x1="1133.6" y1="131.1" x2="1080" y2="139.5"><stop offset="0%" stop-color="#ffffff"/><stop offset="15%" stop-color="#bfdbff"/><stop offset="30%" stop-color="#8ebfff"/><stop offset="45%" stop-color="#67aaff"/><stop offset="60%" stop-color="#4698ff"/><stop offset="80%" stop-color="#2286ff"/><stop offset="100%" stop-color="#0077ff"/></linearGradient>
<linearGradient id="w28" gradientUnits="userSpaceOnUse" x1="1133.6" y1="131.1" x2="1080" y2="139.5"><stop offset="0%" stop-color="#ffffff"/><stop offset="15%" stop-color="#bed8ff"/><stop offset="30%" stop-color="#8cbbff"/><stop offset="45%" stop-color="#65a4ff"/><stop offset="60%" stop-color="#4492ff"/><stop offset="80%" stop-color="#217fff"/><stop offset="100%" stop-color="#006fff"/></linearGradient>
<linearGradient id="w29" gradientUnits="userSpaceOnUse" x1="1133.6" y1="131.1" x2="1080" y2="139.5"><stop offset="0%" stop-color="#ffffff"/><stop offset="15%" stop-color="#bcd5ff"/><stop offset="30%" stop-color="#8ab6ff"/><stop offset="45%" stop-color="#629fff"/><stop offset="60%" stop-color="#438cff"/><stop offset="80%" stop-color="#2078ff"/><stop offset="100%" stop-color="#0069ff"/></linearGradient>
<linearGradient id="w30" gradientUnits="userSpaceOnUse" x1="1133.6" y1="131.1" x2="1080" y2="139.5"><stop offset="0%" stop-color="#ffffff"/><stop offset="15%" stop-color="#bad2ff"/><stop offset="30%" stop-color="#88b2ff"/><stop offset="45%" stop-color="#619aff"/><stop offset="60%" stop-color="#4186ff"/><stop offset="80%" stop-color="#1f72ff"/><stop offset="100%" stop-color="#0062ff"/></linearGradient>
<linearGradient id="w31" gradientUnits="userSpaceOnUse" x1="1133.6" y1="131.1" x2="1080" y2="139.5"><stop offset="0%" stop-color="#ffffff"/><stop offset="15%" stop-color="#b8d0ff"/><stop offset="30%" stop-color="#86aeff"/><stop offset="45%" stop-color="#5f95ff"/><stop offset="60%" stop-color="#4081ff"/><stop offset="80%" stop-color="#1e6cff"/><stop offset="100%" stop-color="#005dff"/></linearGradient>
<linearGradient id="w32" gradientUnits="userSpaceOnUse" x1="1133.6" y1="131.1" x2="1080" y2="139.5"><stop offset="0%" stop-color="#ffffff"/><stop offset="15%" stop-color="#b7cdff"/><stop offset="30%" stop-color="#84aaff"/><stop offset="45%" stop-color="#5d90ff"/><stop offset="60%" stop-color="#3e7cff"/><stop offset="80%" stop-color="#1d67ff"/><stop offset="100%" stop-color="#0057ff"/></linearGradient>
<linearGradient id="w33" gradientUnits="userSpaceOnUse" x1="1133.6" y1="131.1" x2="1080" y2="139.5"><stop offset="0%" stop-color="#ffffff"/><stop offset="15%" stop-color="#b5caff"/><stop offset="30%" stop-color="#82a6ff"/><stop offset="45%" stop-color="#5b8bff"/><stop offset="60%" stop-color="#3d77ff"/><stop offset="80%" stop-color="#1c62ff"/><stop offset="100%" stop-color="#0052ff"/></linearGradient>
<linearGradient id="w34" gradientUnits="userSpaceOnUse" x1="1133.6" y1="131.1" x2="1080" y2="139.5"><stop offset="0%" stop-color="#ffffff"/><stop offset="15%" stop-color="#b4c8ff"/><stop offset="30%" stop-color="#80a2ff"/><stop offset="45%" stop-color="#5987ff"/><stop offset="60%" stop-color="#3b72ff"/><stop offset="80%" stop-color="#1c5dff"/><stop offset="100%" stop-color="#004dff"/></linearGradient>
<linearGradient id="w35" gradientUnits="userSpaceOnUse" x1="1133.6" y1="131.1" x2="1080" y2="139.5"><stop offset="0%" stop-color="#ffffff"/><stop offset="15%" stop-color="#b2c5ff"/><stop offset="30%" stop-color="#7e9fff"/><stop offset="45%" stop-color="#5883ff"/><stop offset="60%" stop-color="#3a6eff"/><stop offset="80%" stop-color="#1b58ff"/><stop offset="100%" stop-color="#0048ff"/></linearGradient>
<linearGradient id="w36" gradientUnits="userSpaceOnUse" x1="1133.6" y1="131.1" x2="1080" y2="139.5"><stop offset="0%" stop-color="#ffffff"/><stop offset="15%" stop-color="#b1c3ff"/><stop offset="30%" stop-color="#7c9bff"/><stop offset="45%" stop-color="#567fff"/><stop offset="60%" stop-color="#3969ff"/><stop offset="80%" stop-color="#1a54ff"/><stop offset="100%" stop-color="#0043ff"/></linearGradient>
<linearGradient id="w37" gradientUnits="userSpaceOnUse" x1="1133.6" y1="131.1" x2="1080" y2="139.5"><stop offset="0%" stop-color="#ffffff"/><stop offset="15%" stop-color="#afc0ff"/><stop offset="30%" stop-color="#7a97ff"/><stop offset="45%" stop-color="#557bff"/><stop offset="60%" stop-color="#3865ff"/><stop offset="80%" stop-color="#1a4fff"/><stop offset="100%" stop-color="#003fff"/></linearGradient>
<linearGradient id="w38" gradientUnits="userSpaceOnUse" x1="1133.6" y1="131.1" x2="1080" y2="139.5"><stop offset="0%" stop-color="#ffffff"/><stop offset="15%" stop-color="#aebeff"/><stop offset="30%" stop-color="#7994ff"/><stop offset="45%" stop-color="#5377ff"/><stop offset="60%" stop-color="#3761ff"/><stop offset="80%" stop-color="#194bff"/><stop offset="100%" stop-color="#003bff"/></linearGradient>
<linearGradient id="w39" gradientUnits="userSpaceOnUse" x1="1133.6" y1="131.1" x2="1080" y2="139.5"><stop offset="0%" stop-color="#ffffff"/><stop offset="15%" stop-color="#acbcff"/><stop offset="30%" stop-color="#7791ff"/><stop offset="45%" stop-color="#5273ff"/><stop offset="60%" stop-color="#365dff"/><stop offset="80%" stop-color="#1947ff"/><stop offset="100%" stop-color="#0037ff"/></linearGradient>
<linearGradient id="w40" gradientUnits="userSpaceOnUse" x1="1133.6" y1="131.1" x2="1080" y2="139.5"><stop offset="0%" stop-color="#ffffff"/><stop offset="15%" stop-color="#abb9ff"/><stop offset="30%" stop-color="#768eff"/><stop offset="45%" stop-color="#5070ff"/><stop offset="60%" stop-color="#355aff"/><stop offset="80%" stop-color="#1844ff"/><stop offset="100%" stop-color="#0033ff"/></linearGradient>
<linearGradient id="w41" gradientUnits="userSpaceOnUse" x1="1133.6" y1="131.1" x2="1080" y2="139.5"><stop offset="0%" stop-color="#ffffff"/><stop offset="15%" stop-color="#a9b7ff"/><stop offset="30%" stop-color="#748bff"/><stop offset="45%" stop-color="#4f6cff"/><stop offset="60%" stop-color="#3456ff"/><stop offset="80%" stop-color="#1840ff"/><stop offset="100%" stop-color="#0030ff"/></linearGradient>
<linearGradient id="w42" gradientUnits="userSpaceOnUse" x1="1133.6" y1="131.1" x2="1080" y2="139.5"><stop offset="0%" stop-color="#ffffff"/><stop offset="15%" stop-color="#a8b5ff"/><stop offset="30%" stop-color="#7388ff"/><stop offset="45%" stop-color="#4e69ff"/><stop offset="60%" stop-color="#3353ff"/><stop offset="80%" stop-color="#173dff"/><stop offset="100%" stop-color="#002cff"/></linearGradient>
<linearGradient id="w43" gradientUnits="userSpaceOnUse" x1="1133.6" y1="131.1" x2="1080" y2="139.5"><stop offset="0%" stop-color="#ffffff"/><stop offset="15%" stop-color="#a7b3ff"/><stop offset="30%" stop-color="#7185ff"/><stop offset="45%" stop-color="#4d66ff"/><stop offset="60%" stop-color="#324fff"/><stop offset="80%" stop-color="#1739ff"/><stop offset="100%" stop-color="#0029ff"/></linearGradient>
<linearGradient id="w44" gradientUnits="userSpaceOnUse" x1="1133.6" y1="131.1" x2="1080" y2="139.5"><stop offset="0%" stop-color="#ffffff"/><stop offset="15%" stop-color="#a5b0ff"/><stop offset="30%" stop-color="#7082ff"/><stop offset="45%" stop-color="#4c63ff"/><stop offset="60%" stop-color="#314cff"/><stop offset="80%" stop-color="#1636ff"/><stop offset="100%" stop-color="#0026ff"/></linearGradient>
<linearGradient id="w45" gradientUnits="userSpaceOnUse" x1="1133.6" y1="131.1" x2="1080" y2="139.5"><stop offset="0%" stop-color="#ffffff"/><stop offset="15%" stop-color="#a4aeff"/><stop offset="30%" stop-color="#6e7fff"/><stop offset="45%" stop-color="#4a5fff"/><stop offset="60%" stop-color="#3049ff"/><stop offset="80%" stop-color="#1633ff"/><stop offset="100%" stop-color="#0023ff"/></linearGradient>
<linearGradient id="w46" gradientUnits="userSpaceOnUse" x1="1133.6" y1="131.1" x2="1080" y2="139.5"><stop offset="0%" stop-color="#ffffff"/><stop offset="15%" stop-color="#a3acff"/><stop offset="30%" stop-color="#6d7cff"/><stop offset="45%" stop-color="#495dff"/><stop offset="60%" stop-color="#2f46ff"/><stop offset="80%" stop-color="#1530ff"/><stop offset="100%" stop-color="#0020ff"/></linearGradient>
<linearGradient id="w47" gradientUnits="userSpaceOnUse" x1="1133.6" y1="131.1" x2="1080" y2="139.5"><stop offset="0%" stop-color="#ffffff"/><stop offset="15%" stop-color="#a2aaff"/><stop offset="30%" stop-color="#6c79ff"/><stop offset="45%" stop-color="#485aff"/><stop offset="60%" stop-color="#2f43ff"/><stop offset="80%" stop-color="#152dff"/><stop offset="100%" stop-color="#001dff"/></linearGradient>
<linearGradient id="w48" gradientUnits="userSpaceOnUse" x1="1133.6" y1="131.1" x2="1080" y2="139.5"><stop offset="0%" stop-color="#ffffff"/><stop offset="15%" stop-color="#a0a8ff"/><stop offset="30%" stop-color="#6a77ff"/><stop offset="45%" stop-color="#4757ff"/><stop offset="60%" stop-color="#2e40ff"/><stop offset="80%" stop-color="#152aff"/><stop offset="100%" stop-color="#001aff"/></linearGradient>
<linearGradient id="w49" gradientUnits="userSpaceOnUse" x1="1133.6" y1="131.1" x2="1080" y2="139.5"><stop offset="0%" stop-color="#ffffff"/><stop offset="15%" stop-color="#9fa6ff"/><stop offset="30%" stop-color="#6974ff"/><stop offset="45%" stop-color="#4654ff"/><stop offset="60%" stop-color="#2d3eff"/><stop offset="80%" stop-color="#1428ff"/><stop offset="100%" stop-color="#0017ff"/></linearGradient>
<linearGradient id="w50" gradientUnits="userSpaceOnUse" x1="1133.6" y1="131.1" x2="1080" y2="139.5"><stop offset="0%" stop-color="#ffffff"/><stop offset="15%" stop-color="#9ea4ff"/><stop offset="30%" stop-color="#6872ff"/><stop offset="45%" stop-color="#4552ff"/><stop offset="60%" stop-color="#2c3bff"/><stop offset="80%" stop-color="#1425ff"/><stop offset="100%" stop-color="#0015ff"/></linearGradient>
<linearGradient id="w51" gradientUnits="userSpaceOnUse" x1="1133.6" y1="131.1" x2="1080" y2="139.5"><stop offset="0%" stop-color="#ffffff"/><stop offset="15%" stop-color="#9da2ff"/><stop offset="30%" stop-color="#676fff"/><stop offset="45%" stop-color="#444fff"/><stop offset="60%" stop-color="#2c38ff"/><stop offset="80%" stop-color="#1422ff"/><stop offset="100%" stop-color="#0012ff"/></linearGradient>
<linearGradient id="w52" gradientUnits="userSpaceOnUse" x1="1133.6" y1="131.1" x2="1080" y2="139.5"><stop offset="0%" stop-color="#ffffff"/><stop offset="15%" stop-color="#9ca0ff"/><stop offset="30%" stop-color="#666dff"/><stop offset="45%" stop-color="#434dff"/><stop offset="60%" stop-color="#2b36ff"/><stop offset="80%" stop-color="#1320ff"/><stop offset="100%" stop-color="#0010ff"/></linearGradient>
<linearGradient id="w53" gradientUnits="userSpaceOnUse" x1="1133.6" y1="131.1" x2="1080" y2="139.5"><stop offset="0%" stop-color="#ffffff"/><stop offset="15%" stop-color="#9a9eff"/><stop offset="30%" stop-color="#656bff"/><stop offset="45%" stop-color="#424aff"/><stop offset="60%" stop-color="#2a33ff"/><stop offset="80%" stop-color="#131eff"/><stop offset="100%" stop-color="#000dff"/></linearGradient>
<linearGradient id="w54" gradientUnits="userSpaceOnUse" x1="1133.6" y1="131.1" x2="1080" y2="139.5"><stop offset="0%" stop-color="#ffffff"/><stop offset="15%" stop-color="#999cff"/><stop offset="30%" stop-color="#6368ff"/><stop offset="45%" stop-color="#4248ff"/><stop offset="60%" stop-color="#2a31ff"/><stop offset="80%" stop-color="#131bff"/><stop offset="100%" stop-color="#000bff"/></linearGradient>
<linearGradient id="w55" gradientUnits="userSpaceOnUse" x1="1133.6" y1="131.1" x2="1080" y2="139.5"><stop offset="0%" stop-color="#ffffff"/><stop offset="15%" stop-color="#989bff"/><stop offset="30%" stop-color="#6266ff"/><stop offset="45%" stop-color="#4146ff"/><stop offset="60%" stop-color="#292fff"/><stop offset="80%" stop-color="#1219ff"/><stop offset="100%" stop-color="#0009ff"/></linearGradient>
<linearGradient id="w56" gradientUnits="userSpaceOnUse" x1="1133.6" y1="131.1" x2="1080" y2="139.5"><stop offset="0%" stop-color="#ffffff"/><stop offset="15%" stop-color="#9799ff"/><stop offset="30%" stop-color="#6164ff"/><stop offset="45%" stop-color="#4043ff"/><stop offset="60%" stop-color="#292dff"/><stop offset="80%" stop-color="#1217ff"/><stop offset="100%" stop-color="#0006ff"/></linearGradient>
<linearGradient id="w57" gradientUnits="userSpaceOnUse" x1="1133.6" y1="131.1" x2="1080" y2="139.5"><stop offset="0%" stop-color="#ffffff"/><stop offset="15%" stop-color="#9697ff"/><stop offset="30%" stop-color="#6062ff"/><stop offset="45%" stop-color="#3f41ff"/><stop offset="60%" stop-color="#282aff"/><stop offset="80%" stop-color="#1215ff"/><stop offset="100%" stop-color="#0004ff"/></linearGradient>
<linearGradient id="w58" gradientUnits="userSpaceOnUse" x1="1133.6" y1="131.1" x2="1080" y2="139.5"><stop offset="0%" stop-color="#ffffff"/><stop offset="15%" stop-color="#9595ff"/><stop offset="30%" stop-color="#5f60ff"/><stop offset="45%" stop-color="#3e3fff"/><stop offset="60%" stop-color="#2728ff"/><stop offset="80%" stop-color="#1212ff"/><stop offset="100%" stop-color="#0001ff"/></linearGradient>
<linearGradient id="w59" gradientUnits="userSpaceOnUse" x1="1133.6" y1="131.1" x2="1233.5" y2="226.2"><stop offset="0%" stop-color="#ffffff"/><stop offset="15%" stop-color="#9695ff"/><stop offset="30%" stop-color="#615fff"/><stop offset="45%" stop-color="#403eff"/><stop offset="60%" stop-color="#2927ff"/><stop offset="80%" stop-color="#1412ff"/><stop offset="100%" stop-color="#0300ff"/></linearGradient>
<linearGradient id="w60" gradientUnits="userSpaceOnUse" x1="1133.6" y1="131.1" x2="1233.5" y2="226.2"><stop offset="0%" stop-color="#ffffff"/><stop offset="15%" stop-color="#9896ff"/><stop offset="30%" stop-color="#6460ff"/><stop offset="45%" stop-color="#443fff"/><stop offset="60%" stop-color="#2e28ff"/><stop offset="80%" stop-color="#1912ff"/><stop offset="100%" stop-color="#0900ff"/></linearGradient>
<linearGradient id="w61" gradientUnits="userSpaceOnUse" x1="1133.6" y1="131.1" x2="1233.5" y2="226.2"><stop offset="0%" stop-color="#ffffff"/><stop offset="15%" stop-color="#9b97ff"/><stop offset="30%" stop-color="#6861ff"/><stop offset="45%" stop-color="#483fff"/><stop offset="60%" stop-color="#3228ff"/><stop offset="80%" stop-color="#1d12ff"/><stop offset="100%" stop-color="#0e00ff"/></linearGradient>
<linearGradient id="w62" gradientUnits="userSpaceOnUse" x1="1133.6" y1="131.1" x2="1233.5" y2="226.2"><stop offset="0%" stop-color="#ffffff"/><stop offset="15%" stop-color="#9e97ff"/><stop offset="30%" stop-color="#6b62ff"/><stop offset="45%" stop-color="#4c40ff"/><stop offset="60%" stop-color="#3729ff"/><stop offset="80%" stop-color="#2212ff"/><stop offset="100%" stop-color="#1300ff"/></linearGradient>
<linearGradient id="w63" gradientUnits="userSpaceOnUse" x1="1133.6" y1="131.1" x2="1233.5" y2="226.2"><stop offset="0%" stop-color="#ffffff"/><stop offset="15%" stop-color="#a098ff"/><stop offset="30%" stop-color="#6f63ff"/><stop offset="45%" stop-color="#5041ff"/><stop offset="60%" stop-color="#3b29ff"/><stop offset="80%" stop-color="#2712ff"/><stop offset="100%" stop-color="#1900ff"/></linearGradient>
<linearGradient id="w64" gradientUnits="userSpaceOnUse" x1="1133.6" y1="131.1" x2="1233.5" y2="226.2"><stop offset="0%" stop-color="#ffffff"/><stop offset="15%" stop-color="#a399ff"/><stop offset="30%" stop-color="#7363ff"/><stop offset="45%" stop-color="#5541ff"/><stop offset="60%" stop-color="#402aff"/><stop offset="80%" stop-color="#2c13ff"/><stop offset="100%" stop-color="#1e00ff"/></linearGradient>
<linearGradient id="w65" gradientUnits="userSpaceOnUse" x1="1133.6" y1="131.1" x2="1233.5" y2="226.2"><stop offset="0%" stop-color="#ffffff"/><stop offset="15%" stop-color="#a69aff"/><stop offset="30%" stop-color="#7664ff"/><stop offset="45%" stop-color="#5942ff"/><stop offset="60%" stop-color="#442aff"/><stop offset="80%" stop-color="#3113ff"/><stop offset="100%" stop-color="#2300ff"/></linearGradient>
<linearGradient id="w66" gradientUnits="userSpaceOnUse" x1="1133.6" y1="131.1" x2="1233.5" y2="226.2"><stop offset="0%" stop-color="#ffffff"/><stop offset="15%" stop-color="#a89bff"/><stop offset="30%" stop-color="#7a65ff"/><stop offset="45%" stop-color="#5d43ff"/><stop offset="60%" stop-color="#492bff"/><stop offset="80%" stop-color="#3613ff"/><stop offset="100%" stop-color="#2900ff"/></linearGradient>
<linearGradient id="w67" gradientUnits="userSpaceOnUse" x1="1133.6" y1="131.1" x2="1233.5" y2="226.2"><stop offset="0%" stop-color="#ffffff"/><stop offset="15%" stop-color="#ab9cff"/><stop offset="30%" stop-color="#7e66ff"/><stop offset="45%" stop-color="#6244ff"/><stop offset="60%" stop-color="#4e2bff"/><stop offset="80%" stop-color="#3c13ff"/><stop offset="100%" stop-color="#2e00ff"/></linearGradient>
<linearGradient id="w68" gradientUnits="userSpaceOnUse" x1="1133.6" y1="131.1" x2="1233.5" y2="226.2"><stop offset="0%" stop-color="#ffffff"/><stop offset="15%" stop-color="#ae9dff"/><stop offset="30%" stop-color="#8267ff"/><stop offset="45%" stop-color="#6644ff"/><stop offset="60%" stop-color="#532cff"/><stop offset="80%" stop-color="#4114ff"/><stop offset="100%" stop-color="#3400ff"/></linearGradient>
<linearGradient id="w69" gradientUnits="userSpaceOnUse" x1="1133.6" y1="131.1" x2="1233.5" y2="226.2"><stop offset="0%" stop-color="#ffffff"/><stop offset="15%" stop-color="#b19eff"/><stop offset="30%" stop-color="#8668ff"/><stop offset="45%" stop-color="#6b45ff"/><stop offset="60%" stop-color="#582cff"/><stop offset="80%" stop-color="#4614ff"/><stop offset="100%" stop-color="#3a00ff"/></linearGradient>
<linearGradient id="w70" gradientUnits="userSpaceOnUse" x1="1133.6" y1="131.1" x2="1233.5" y2="226.2"><stop offset="0%" stop-color="#ffffff"/><stop offset="15%" stop-color="#b49fff"/><stop offset="30%" stop-color="#8a69ff"/><stop offset="45%" stop-color="#7046ff"/><stop offset="60%" stop-color="#5d2dff"/><stop offset="80%" stop-color="#4c14ff"/><stop offset="100%" stop-color="#4000ff"/></linearGradient>
<linearGradient id="w71" gradientUnits="userSpaceOnUse" x1="1133.6" y1="131.1" x2="1233.5" y2="226.2"><stop offset="0%" stop-color="#ffffff"/><stop offset="15%" stop-color="#b7a0ff"/><stop offset="30%" stop-color="#8f6aff"/><stop offset="45%" stop-color="#7547ff"/><stop offset="60%" stop-color="#632dff"/><stop offset="80%" stop-color="#5215ff"/><stop offset="100%" stop-color="#4600ff"/></linearGradient>
<linearGradient id="w72" gradientUnits="userSpaceOnUse" x1="1133.6" y1="131.1" x2="1233.5" y2="226.2"><stop offset="0%" stop-color="#ffffff"/><stop offset="15%" stop-color="#baa1ff"/><stop offset="30%" stop-color="#936bff"/><stop offset="45%" stop-color="#7a48ff"/><stop offset="60%" stop-color="#682eff"/><stop offset="80%" stop-color="#5815ff"/><stop offset="100%" stop-color="#4c00ff"/></linearGradient>
<linearGradient id="w73" gradientUnits="userSpaceOnUse" x1="1133.6" y1="131.1" x2="1233.5" y2="226.2"><stop offset="0%" stop-color="#ffffff"/><stop offset="15%" stop-color="#bda2ff"/><stop offset="30%" stop-color="#976cff"/><stop offset="45%" stop-color="#7f48ff"/><stop offset="60%" stop-color="#6e2fff"/><stop offset="80%" stop-color="#5e15ff"/><stop offset="100%" stop-color="#5200ff"/></linearGradient>
<linearGradient id="w74" gradientUnits="userSpaceOnUse" x1="1133.6" y1="131.1" x2="1233.5" y2="226.2"><stop offset="0%" stop-color="#ffffff"/><stop offset="15%" stop-color="#c0a3ff"/><stop offset="30%" stop-color="#9c6dff"/><stop offset="45%" stop-color="#8449ff"/><stop offset="60%" stop-color="#742fff"/><stop offset="80%" stop-color="#6415ff"/><stop offset="100%" stop-color="#5800ff"/></linearGradient>
<linearGradient id="w75" gradientUnits="userSpaceOnUse" x1="1133.6" y1="131.1" x2="1233.5" y2="226.2"><stop offset="0%" stop-color="#ffffff"/><stop offset="15%" stop-color="#c3a4ff"/><stop offset="30%" stop-color="#a06eff"/><stop offset="45%" stop-color="#894aff"/><stop offset="60%" stop-color="#7930ff"/><stop offset="80%" stop-color="#6a16ff"/><stop offset="100%" stop-color="#5f00ff"/></linearGradient>
<linearGradient id="w76" gradientUnits="userSpaceOnUse" x1="1133.6" y1="131.1" x2="1233.5" y2="226.2"><stop offset="0%" stop-color="#ffffff"/><stop offset="15%" stop-color="#c6a5ff"/><stop offset="30%" stop-color="#a56fff"/><stop offset="45%" stop-color="#8f4bff"/><stop offset="60%" stop-color="#7f31ff"/><stop offset="80%" stop-color="#7116ff"/><stop offset="100%" stop-color="#6600ff"/></linearGradient>
<linearGradient id="w77" gradientUnits="userSpaceOnUse" x1="1133.6" y1="131.1" x2="1233.5" y2="226.2"><stop offset="0%" stop-color="#ffffff"/><stop offset="15%" stop-color="#c9a6ff"/><stop offset="30%" stop-color="#a970ff"/><stop offset="45%" stop-color="#944cff"/><stop offset="60%" stop-color="#8631ff"/><stop offset="80%" stop-color="#7716ff"/><stop offset="100%" stop-color="#6d00ff"/></linearGradient>
<linearGradient id="w78" gradientUnits="userSpaceOnUse" x1="1133.6" y1="131.1" x2="1233.5" y2="226.2"><stop offset="0%" stop-color="#ffffff"/><stop offset="15%" stop-color="#cca7ff"/><stop offset="30%" stop-color="#ae71ff"/><stop offset="45%" stop-color="#9a4dff"/><stop offset="60%" stop-color="#8c32ff"/><stop offset="80%" stop-color="#7e17ff"/><stop offset="100%" stop-color="#7400ff"/></linearGradient>
<linearGradient id="w79" gradientUnits="userSpaceOnUse" x1="1133.6" y1="131.1" x2="1233.5" y2="226.2"><stop offset="0%" stop-color="#ffffff"/><stop offset="15%" stop-color="#cfa8ff"/><stop offset="30%" stop-color="#b373ff"/><stop offset="45%" stop-color="#a04eff"/><stop offset="60%" stop-color="#9233ff"/><stop offset="80%" stop-color="#8517ff"/><stop offset="100%" stop-color="#7c00ff"/></linearGradient>
<linearGradient id="w80" gradientUnits="userSpaceOnUse" x1="1133.6" y1="131.1" x2="1233.5" y2="226.2"><stop offset="0%" stop-color="#ffffff"/><stop offset="15%" stop-color="#d3a9ff"/><stop offset="30%" stop-color="#b874ff"/><stop offset="45%" stop-color="#a64fff"/><stop offset="60%" stop-color="#9934ff"/><stop offset="80%" stop-color="#8c18ff"/><stop offset="100%" stop-color="#8300ff"/></linearGradient>
<linearGradient id="w81" gradientUnits="userSpaceOnUse" x1="1133.6" y1="131.1" x2="1233.5" y2="226.2"><stop offset="0%" stop-color="#ffffff"/><stop offset="15%" stop-color="#d6aaff"/><stop offset="30%" stop-color="#bd75ff"/><stop offset="45%" stop-color="#ac50ff"/><stop offset="60%" stop-color="#a034ff"/><stop offset="80%" stop-color="#9418ff"/><stop offset="100%" stop-color="#8b00ff"/></linearGradient>
<linearGradient id="w82" gradientUnits="userSpaceOnUse" x1="1133.6" y1="131.1" x2="1233.5" y2="226.2"><stop offset="0%" stop-color="#ffffff"/><stop offset="15%" stop-color="#d9abff"/><stop offset="30%" stop-color="#c276ff"/><stop offset="45%" stop-color="#b251ff"/><stop offset="60%" stop-color="#a735ff"/><stop offset="80%" stop-color="#9c18ff"/><stop offset="100%" stop-color="#9400ff"/></linearGradient>
<linearGradient id="w83" gradientUnits="userSpaceOnUse" x1="1133.6" y1="131.1" x2="1233.5" y2="226.2"><stop offset="0%" stop-color="#ffffff"/><stop offset="15%" stop-color="#ddadff"/><stop offset="30%" stop-color="#c778ff"/><stop offset="45%" stop-color="#b952ff"/><stop offset="60%" stop-color="#ae36ff"/><stop offset="80%" stop-color="#a419ff"/><stop offset="100%" stop-color="#9c00ff"/></linearGradient>
<linearGradient id="w84" gradientUnits="userSpaceOnUse" x1="1133.6" y1="131.1" x2="1233.5" y2="226.2"><stop offset="0%" stop-color="#ffffff"/><stop offset="15%" stop-color="#e0aeff"/><stop offset="30%" stop-color="#cd79ff"/><stop offset="45%" stop-color="#bf53ff"/><stop offset="60%" stop-color="#b637ff"/><stop offset="80%" stop-color="#ac19ff"/><stop offset="100%" stop-color="#a500ff"/></linearGradient>
<linearGradient id="w85" gradientUnits="userSpaceOnUse" x1="1133.6" y1="131.1" x2="1233.5" y2="226.2"><stop offset="0%" stop-color="#ffffff"/><stop offset="15%" stop-color="#e4afff"/><stop offset="30%" stop-color="#d27aff"/><stop offset="45%" stop-color="#c654ff"/><stop offset="60%" stop-color="#bd38ff"/><stop offset="80%" stop-color="#b51aff"/><stop offset="100%" stop-color="#ae00ff"/></linearGradient>
<linearGradient id="w86" gradientUnits="userSpaceOnUse" x1="1133.6" y1="131.1" x2="1233.5" y2="226.2"><stop offset="0%" stop-color="#ffffff"/><stop offset="15%" stop-color="#e7b0ff"/><stop offset="30%" stop-color="#d87cff"/><stop offset="45%" stop-color="#cd56ff"/><stop offset="60%" stop-color="#c539ff"/><stop offset="80%" stop-color="#be1aff"/><stop offset="100%" stop-color="#b800ff"/></linearGradient>
<linearGradient id="w87" gradientUnits="userSpaceOnUse" x1="1133.6" y1="131.1" x2="1233.5" y2="226.2"><stop offset="0%" stop-color="#ffffff"/><stop offset="15%" stop-color="#ebb1ff"/><stop offset="30%" stop-color="#de7dff"/><stop offset="45%" stop-color="#d457ff"/><stop offset="60%" stop-color="#ce3aff"/><stop offset="80%" stop-color="#c71bff"/><stop offset="100%" stop-color="#c200ff"/></linearGradient>
<linearGradient id="w88" gradientUnits="userSpaceOnUse" x1="1133.6" y1="131.1" x2="1233.5" y2="226.2"><stop offset="0%" stop-color="#ffffff"/><stop offset="15%" stop-color="#eeb2ff"/><stop offset="30%" stop-color="#e47eff"/><stop offset="45%" stop-color="#dc58ff"/><stop offset="60%" stop-color="#d63aff"/><stop offset="80%" stop-color="#d01bff"/><stop offset="100%" stop-color="#cc00ff"/></linearGradient>
<linearGradient id="w89" gradientUnits="userSpaceOnUse" x1="1133.6" y1="131.1" x2="1233.5" y2="226.2"><stop offset="0%" stop-color="#ffffff"/><stop offset="15%" stop-color="#f2b4ff"/><stop offset="30%" stop-color="#ea80ff"/><stop offset="45%" stop-color="#e359ff"/><stop offset="60%" stop-color="#df3cff"/><stop offset="80%" stop-color="#da1cff"/><stop offset="100%" stop-color="#d700ff"/></linearGradient>
<linearGradient id="w90" gradientUnits="userSpaceOnUse" x1="1133.6" y1="131.1" x2="1233.5" y2="226.2"><stop offset="0%" stop-color="#ffffff"/><stop offset="15%" stop-color="#f6b5ff"/><stop offset="30%" stop-color="#f081ff"/><stop offset="45%" stop-color="#eb5bff"/><stop offset="60%" stop-color="#e83dff"/><stop offset="80%" stop-color="#e51cff"/><stop offset="100%" stop-color="#e200ff"/></linearGradient>
<linearGradient id="w91" gradientUnits="userSpaceOnUse" x1="1133.6" y1="131.1" x2="1233.5" y2="226.2"><stop offset="0%" stop-color="#ffffff"/><stop offset="15%" stop-color="#fab6ff"/><stop offset="30%" stop-color="#f683ff"/><stop offset="45%" stop-color="#f35cff"/><stop offset="60%" stop-color="#f13eff"/><stop offset="80%" stop-color="#ef1dff"/><stop offset="100%" stop-color="#ee00ff"/></linearGradient>
<linearGradient id="w92" gradientUnits="userSpaceOnUse" x1="1133.6" y1="131.1" x2="1233.5" y2="226.2"><stop offset="0%" stop-color="#ffffff"/><stop offset="15%" stop-color="#fdb8ff"/><stop offset="30%" stop-color="#fc84ff"/><stop offset="45%" stop-color="#fc5eff"/><stop offset="60%" stop-color="#fb3fff"/><stop offset="80%" stop-color="#fa1dff"/><stop offset="100%" stop-color="#fa00ff"/></linearGradient>
<linearGradient id="w93" gradientUnits="userSpaceOnUse" x1="1133.6" y1="131.1" x2="1233.5" y2="226.2"><stop offset="0%" stop-color="#ffffff"/><stop offset="15%" stop-color="#ffb7fd"/><stop offset="30%" stop-color="#ff84fb"/><stop offset="45%" stop-color="#ff5dfa"/><stop offset="60%" stop-color="#ff3ef9"/><stop offset="80%" stop-color="#ff1df8"/><stop offset="100%" stop-color="#ff00f7"/></linearGradient>
<linearGradient id="w94" gradientUnits="userSpaceOnUse" x1="1133.6" y1="131.1" x2="1233.5" y2="226.2"><stop offset="0%" stop-color="#ffffff"/><stop offset="15%" stop-color="#ffb6f9"/><stop offset="30%" stop-color="#ff82f5"/><stop offset="45%" stop-color="#ff5cf2"/><stop offset="60%" stop-color="#ff3def"/><stop offset="80%" stop-color="#ff1ded"/><stop offset="100%" stop-color="#ff00eb"/></linearGradient>
<linearGradient id="w95" gradientUnits="userSpaceOnUse" x1="1133.6" y1="131.1" x2="1233.5" y2="226.2"><stop offset="0%" stop-color="#ffffff"/><stop offset="15%" stop-color="#ffb4f5"/><stop offset="30%" stop-color="#ff81ee"/><stop offset="45%" stop-color="#ff5aea"/><stop offset="60%" stop-color="#ff3ce6"/><stop offset="80%" stop-color="#ff1ce3"/><stop offset="100%" stop-color="#ff00e0"/></linearGradient>
<linearGradient id="w96" gradientUnits="userSpaceOnUse" x1="1133.6" y1="131.1" x2="1233.5" y2="226.2"><stop offset="0%" stop-color="#ffffff"/><stop offset="15%" stop-color="#ffb3f1"/><stop offset="30%" stop-color="#ff7fe8"/><stop offset="45%" stop-color="#ff59e2"/><stop offset="60%" stop-color="#ff3bdd"/><stop offset="80%" stop-color="#ff1bd8"/><stop offset="100%" stop-color="#ff00d5"/></linearGradient>
<linearGradient id="w97" gradientUnits="userSpaceOnUse" x1="1133.6" y1="131.1" x2="1233.5" y2="226.2"><stop offset="0%" stop-color="#ffffff"/><stop offset="15%" stop-color="#ffb2ee"/><stop offset="30%" stop-color="#ff7de2"/><stop offset="45%" stop-color="#ff57db"/><stop offset="60%" stop-color="#ff3ad5"/><stop offset="80%" stop-color="#ff1bcf"/><stop offset="100%" stop-color="#ff00ca"/></linearGradient>
<linearGradient id="w98" gradientUnits="userSpaceOnUse" x1="1133.6" y1="131.1" x2="1233.5" y2="226.2"><stop offset="0%" stop-color="#ffffff"/><stop offset="15%" stop-color="#ffb0ea"/><stop offset="30%" stop-color="#ff7cdd"/><stop offset="45%" stop-color="#ff56d3"/><stop offset="60%" stop-color="#ff39cc"/><stop offset="80%" stop-color="#ff1ac6"/><stop offset="100%" stop-color="#ff00c1"/></linearGradient>
<linearGradient id="w99" gradientUnits="userSpaceOnUse" x1="1133.6" y1="131.1" x2="1233.5" y2="226.2"><stop offset="0%" stop-color="#ffffff"/><stop offset="15%" stop-color="#ffafe7"/><stop offset="30%" stop-color="#ff7ad7"/><stop offset="45%" stop-color="#ff54cc"/><stop offset="60%" stop-color="#ff38c4"/><stop offset="80%" stop-color="#ff1abd"/><stop offset="100%" stop-color="#ff00b7"/></linearGradient>
<linearGradient id="w100" gradientUnits="userSpaceOnUse" x1="1133.6" y1="131.1" x2="1233.5" y2="226.2"><stop offset="0%" stop-color="#ffffff"/><stop offset="15%" stop-color="#ffade3"/><stop offset="30%" stop-color="#ff79d2"/><stop offset="45%" stop-color="#ff53c6"/><stop offset="60%" stop-color="#ff37bd"/><stop offset="80%" stop-color="#ff19b4"/><stop offset="100%" stop-color="#ff00ae"/></linearGradient>
<linearGradient id="w101" gradientUnits="userSpaceOnUse" x1="1133.6" y1="131.1" x2="1233.5" y2="226.2"><stop offset="0%" stop-color="#ffffff"/><stop offset="15%" stop-color="#fface0"/><stop offset="30%" stop-color="#ff77cc"/><stop offset="45%" stop-color="#ff52bf"/><stop offset="60%" stop-color="#ff36b5"/><stop offset="80%" stop-color="#ff19ac"/><stop offset="100%" stop-color="#ff00a5"/></linearGradient>
<linearGradient id="w102" gradientUnits="userSpaceOnUse" x1="1133.6" y1="131.1" x2="1233.5" y2="226.2"><stop offset="0%" stop-color="#ffffff"/><stop offset="15%" stop-color="#ffabdc"/><stop offset="30%" stop-color="#ff76c7"/><stop offset="45%" stop-color="#ff51b9"/><stop offset="60%" stop-color="#ff35ae"/><stop offset="80%" stop-color="#ff18a4"/><stop offset="100%" stop-color="#ff009d"/></linearGradient>
<linearGradient id="w103" gradientUnits="userSpaceOnUse" x1="1133.6" y1="131.1" x2="1233.5" y2="226.2"><stop offset="0%" stop-color="#ffffff"/><stop offset="15%" stop-color="#ffaad9"/><stop offset="30%" stop-color="#ff74c2"/><stop offset="45%" stop-color="#ff4fb3"/><stop offset="60%" stop-color="#ff34a7"/><stop offset="80%" stop-color="#ff189d"/><stop offset="100%" stop-color="#ff0095"/></linearGradient>
<linearGradient id="w104" gradientUnits="userSpaceOnUse" x1="1133.6" y1="131.1" x2="1233.5" y2="226.2"><stop offset="0%" stop-color="#ffffff"/><stop offset="15%" stop-color="#ffa8d6"/><stop offset="30%" stop-color="#ff73bd"/><stop offset="45%" stop-color="#ff4ead"/><stop offset="60%" stop-color="#ff33a1"/><stop offset="80%" stop-color="#ff1795"/><stop offset="100%" stop-color="#ff008d"/></linearGradient>
<linearGradient id="w105" gradientUnits="userSpaceOnUse" x1="1133.6" y1="131.1" x2="1233.5" y2="226.2"><stop offset="0%" stop-color="#ffffff"/><stop offset="15%" stop-color="#ffa7d3"/><stop offset="30%" stop-color="#ff72b8"/><stop offset="45%" stop-color="#ff4da7"/><stop offset="60%" stop-color="#ff329a"/><stop offset="80%" stop-color="#ff178e"/><stop offset="100%" stop-color="#ff0086"/></linearGradient>
<linearGradient id="w106" gradientUnits="userSpaceOnUse" x1="1133.6" y1="131.1" x2="1233.5" y2="226.2"><stop offset="0%" stop-color="#ffffff"/><stop offset="15%" stop-color="#ffa6cf"/><stop offset="30%" stop-color="#ff70b3"/><stop offset="45%" stop-color="#ff4ca1"/><stop offset="60%" stop-color="#ff3194"/><stop offset="80%" stop-color="#ff1687"/><stop offset="100%" stop-color="#ff007e"/></linearGradient>
<linearGradient id="w107" gradientUnits="userSpaceOnUse" x1="1133.6" y1="131.1" x2="1233.5" y2="226.2"><stop offset="0%" stop-color="#ffffff"/><stop offset="15%" stop-color="#ffa5cc"/><stop offset="30%" stop-color="#ff6faf"/><stop offset="45%" stop-color="#ff4b9b"/><stop offset="60%" stop-color="#ff318e"/><stop offset="80%" stop-color="#ff1681"/><stop offset="100%" stop-color="#ff0078"/></linearGradient>
<linearGradient id="w108" gradientUnits="userSpaceOnUse" x1="1133.6" y1="131.1" x2="1233.5" y2="226.2"><stop offset="0%" stop-color="#ffffff"/><stop offset="15%" stop-color="#ffa4c9"/><stop offset="30%" stop-color="#ff6eaa"/><stop offset="45%" stop-color="#ff4a96"/><stop offset="60%" stop-color="#ff3088"/><stop offset="80%" stop-color="#ff167b"/><stop offset="100%" stop-color="#ff0071"/></linearGradient>
<linearGradient id="w109" gradientUnits="userSpaceOnUse" x1="1133.6" y1="131.1" x2="1233.5" y2="226.2"><stop offset="0%" stop-color="#ffffff"/><stop offset="15%" stop-color="#ffa2c6"/><stop offset="30%" stop-color="#ff6da6"/><stop offset="45%" stop-color="#ff4991"/><stop offset="60%" stop-color="#ff2f82"/><stop offset="80%" stop-color="#ff1574"/><stop offset="100%" stop-color="#ff006a"/></linearGradient>
<linearGradient id="w110" gradientUnits="userSpaceOnUse" x1="1133.6" y1="131.1" x2="1233.5" y2="226.2"><stop offset="0%" stop-color="#ffffff"/><stop offset="15%" stop-color="#ffa1c3"/><stop offset="30%" stop-color="#ff6ca1"/><stop offset="45%" stop-color="#ff488c"/><stop offset="60%" stop-color="#ff2e7d"/><stop offset="80%" stop-color="#ff156e"/><stop offset="100%" stop-color="#ff0064"/></linearGradient>
<linearGradient id="w111" gradientUnits="userSpaceOnUse" x1="1133.6" y1="131.1" x2="1233.5" y2="226.2"><stop offset="0%" stop-color="#ffffff"/><stop offset="15%" stop-color="#ffa0c0"/><stop offset="30%" stop-color="#ff6a9d"/><stop offset="45%" stop-color="#ff4787"/><stop offset="60%" stop-color="#ff2e77"/><stop offset="80%" stop-color="#ff1569"/><stop offset="100%" stop-color="#ff005e"/></linearGradient>
<linearGradient id="w112" gradientUnits="userSpaceOnUse" x1="1133.6" y1="131.1" x2="1233.5" y2="226.2"><stop offset="0%" stop-color="#ffffff"/><stop offset="15%" stop-color="#ff9fbd"/><stop offset="30%" stop-color="#ff6999"/><stop offset="45%" stop-color="#ff4682"/><stop offset="60%" stop-color="#ff2d72"/><stop offset="80%" stop-color="#ff1463"/><stop offset="100%" stop-color="#ff0058"/></linearGradient>
<linearGradient id="w113" gradientUnits="userSpaceOnUse" x1="1133.6" y1="131.1" x2="1233.5" y2="226.2"><stop offset="0%" stop-color="#ffffff"/><stop offset="15%" stop-color="#ff9eba"/><stop offset="30%" stop-color="#ff6895"/><stop offset="45%" stop-color="#ff457d"/><stop offset="60%" stop-color="#ff2c6d"/><stop offset="80%" stop-color="#ff145d"/><stop offset="100%" stop-color="#ff0053"/></linearGradient>
<linearGradient id="w114" gradientUnits="userSpaceOnUse" x1="1133.6" y1="131.1" x2="1233.5" y2="226.2"><stop offset="0%" stop-color="#ffffff"/><stop offset="15%" stop-color="#ff9db7"/><stop offset="30%" stop-color="#ff6791"/><stop offset="45%" stop-color="#ff4479"/><stop offset="60%" stop-color="#ff2c68"/><stop offset="80%" stop-color="#ff1458"/><stop offset="100%" stop-color="#ff004d"/></linearGradient>
<linearGradient id="w115" gradientUnits="userSpaceOnUse" x1="1133.6" y1="131.1" x2="1233.5" y2="226.2"><stop offset="0%" stop-color="#ffffff"/><stop offset="15%" stop-color="#ff9cb5"/><stop offset="30%" stop-color="#ff668d"/><stop offset="45%" stop-color="#ff4474"/><stop offset="60%" stop-color="#ff2b63"/><stop offset="80%" stop-color="#ff1353"/><stop offset="100%" stop-color="#ff0048"/></linearGradient>
<linearGradient id="w116" gradientUnits="userSpaceOnUse" x1="1133.6" y1="131.1" x2="1233.5" y2="226.2"><stop offset="0%" stop-color="#ffffff"/><stop offset="15%" stop-color="#ff9bb2"/><stop offset="30%" stop-color="#ff6589"/><stop offset="45%" stop-color="#ff4370"/><stop offset="60%" stop-color="#ff2b5e"/><stop offset="80%" stop-color="#ff134e"/><stop offset="100%" stop-color="#ff0042"/></linearGradient>
<linearGradient id="w117" gradientUnits="userSpaceOnUse" x1="1133.6" y1="131.1" x2="1233.5" y2="226.2"><stop offset="0%" stop-color="#ffffff"/><stop offset="15%" stop-color="#ff9aaf"/><stop offset="30%" stop-color="#ff6485"/><stop offset="45%" stop-color="#ff426b"/><stop offset="60%" stop-color="#ff2a5a"/><stop offset="80%" stop-color="#ff1349"/><stop offset="100%" stop-color="#ff003d"/></linearGradient>
<linearGradient id="w118" gradientUnits="userSpaceOnUse" x1="1133.6" y1="131.1" x2="1233.5" y2="226.2"><stop offset="0%" stop-color="#ffffff"/><stop offset="15%" stop-color="#ff99ac"/><stop offset="30%" stop-color="#ff6382"/><stop offset="45%" stop-color="#ff4167"/><stop offset="60%" stop-color="#ff2a55"/><stop offset="80%" stop-color="#ff1344"/><stop offset="100%" stop-color="#ff0038"/></linearGradient>
<linearGradient id="w119" gradientUnits="userSpaceOnUse" x1="1133.6" y1="131.1" x2="1233.5" y2="226.2"><stop offset="0%" stop-color="#ffffff"/><stop offset="15%" stop-color="#ff98aa"/><stop offset="30%" stop-color="#ff627e"/><stop offset="45%" stop-color="#ff4063"/><stop offset="60%" stop-color="#ff2951"/><stop offset="80%" stop-color="#ff1240"/><stop offset="100%" stop-color="#ff0033"/></linearGradient>
<linearGradient id="w120" gradientUnits="userSpaceOnUse" x1="1133.6" y1="131.1" x2="1233.5" y2="226.2"><stop offset="0%" stop-color="#ffffff"/><stop offset="15%" stop-color="#ff97a7"/><stop offset="30%" stop-color="#ff617a"/><stop offset="45%" stop-color="#ff405f"/><stop offset="60%" stop-color="#ff284c"/><stop offset="80%" stop-color="#ff123b"/><stop offset="100%" stop-color="#ff002f"/></linearGradient>
<linearGradient id="w121" gradientUnits="userSpaceOnUse" x1="1133.6" y1="131.1" x2="1233.5" y2="226.2"><stop offset="0%" stop-color="#ffffff"/><stop offset="15%" stop-color="#ff96a5"/><stop offset="30%" stop-color="#ff6077"/><stop offset="45%" stop-color="#ff3f5b"/><stop offset="60%" stop-color="#ff2848"/><stop offset="80%" stop-color="#ff1237"/><stop offset="100%" stop-color="#ff002a"/></linearGradient>
<linearGradient id="w122" gradientUnits="userSpaceOnUse" x1="1133.6" y1="131.1" x2="1233.5" y2="226.2"><stop offset="0%" stop-color="#ffffff"/><stop offset="15%" stop-color="#ff95a2"/><stop offset="30%" stop-color="#ff5f73"/><stop offset="45%" stop-color="#ff3e57"/><stop offset="60%" stop-color="#ff2744"/><stop offset="80%" stop-color="#ff1232"/><stop offset="100%" stop-color="#ff0026"/></linearGradient>
<linearGradient id="w123" gradientUnits="userSpaceOnUse" x1="1133.6" y1="131.1" x2="1233.5" y2="226.2"><stop offset="0%" stop-color="#ffffff"/><stop offset="15%" stop-color="#ff949f"/><stop offset="30%" stop-color="#ff5e70"/><stop offset="45%" stop-color="#ff3e53"/><stop offset="60%" stop-color="#ff2740"/><stop offset="80%" stop-color="#ff112e"/><stop offset="100%" stop-color="#ff0021"/></linearGradient>
<linearGradient id="w124" gradientUnits="userSpaceOnUse" x1="1133.6" y1="131.1" x2="1233.5" y2="226.2"><stop offset="0%" stop-color="#ffffff"/><stop offset="15%" stop-color="#ff939d"/><stop offset="30%" stop-color="#ff5e6d"/><stop offset="45%" stop-color="#ff3d50"/><stop offset="60%" stop-color="#ff273c"/><stop offset="80%" stop-color="#ff112a"/><stop offset="100%" stop-color="#ff001d"/></linearGradient>
<linearGradient id="w125" gradientUnits="userSpaceOnUse" x1="1133.6" y1="131.1" x2="1233.5" y2="226.2"><stop offset="0%" stop-color="#ffffff"/><stop offset="15%" stop-color="#ff929a"/><stop offset="30%" stop-color="#ff5d69"/><stop offset="45%" stop-color="#ff3c4c"/><stop offset="60%" stop-color="#ff2638"/><stop offset="80%" stop-color="#ff1126"/><stop offset="100%" stop-color="#ff0018"/></linearGradient>
<linearGradient id="w126" gradientUnits="userSpaceOnUse" x1="1133.6" y1="131.1" x2="1233.5" y2="226.2"><stop offset="0%" stop-color="#ffffff"/><stop offset="15%" stop-color="#ff9198"/><stop offset="30%" stop-color="#ff5c66"/><stop offset="45%" stop-color="#ff3c48"/><stop offset="60%" stop-color="#ff2634"/><stop offset="80%" stop-color="#ff1121"/><stop offset="100%" stop-color="#ff0014"/></linearGradient>
<linearGradient id="w127" gradientUnits="userSpaceOnUse" x1="1133.6" y1="131.1" x2="1233.5" y2="226.2"><stop offset="0%" stop-color="#ffffff"/><stop offset="15%" stop-color="#ff9096"/><stop offset="30%" stop-color="#ff5b63"/><stop offset="45%" stop-color="#ff3b45"/><stop offset="60%" stop-color="#ff2530"/><stop offset="80%" stop-color="#ff101d"/><stop offset="100%" stop-color="#ff0010"/></linearGradient>
<linearGradient id="w128" gradientUnits="userSpaceOnUse" x1="1133.6" y1="131.1" x2="1233.5" y2="226.2"><stop offset="0%" stop-color="#ffffff"/><stop offset="15%" stop-color="#ff8f93"/><stop offset="30%" stop-color="#ff5a60"/><stop offset="45%" stop-color="#ff3a41"/><stop offset="60%" stop-color="#ff252d"/><stop offset="80%" stop-color="#ff101a"/><stop offset="100%" stop-color="#ff000c"/></linearGradient>
<linearGradient id="w129" gradientUnits="userSpaceOnUse" x1="1133.6" y1="131.1" x2="1233.5" y2="226.2"><stop offset="0%" stop-color="#ffffff"/><stop offset="15%" stop-color="#ff8f91"/><stop offset="30%" stop-color="#ff595d"/><stop offset="45%" stop-color="#ff3a3e"/><stop offset="60%" stop-color="#ff2429"/><stop offset="80%" stop-color="#ff1016"/><stop offset="100%" stop-color="#ff0007"/></linearGradient>
<linearGradient id="w130" gradientUnits="userSpaceOnUse" x1="1133.6" y1="131.1" x2="1233.5" y2="226.2"><stop offset="0%" stop-color="#ffffff"/><stop offset="15%" stop-color="#ff8e8e"/><stop offset="30%" stop-color="#ff595a"/><stop offset="45%" stop-color="#ff393b"/><stop offset="60%" stop-color="#ff2426"/><stop offset="80%" stop-color="#ff1012"/><stop offset="100%" stop-color="#ff0003"/></linearGradient>
<linearGradient id="w131" gradientUnits="userSpaceOnUse" x1="1133.6" y1="131.1" x2="1139.4" y2="70.9"><stop offset="0%" stop-color="#ffffff"/><stop offset="15%" stop-color="#ff8e8e"/><stop offset="30%" stop-color="#ff5959"/><stop offset="45%" stop-color="#ff3a39"/><stop offset="60%" stop-color="#ff2524"/><stop offset="80%" stop-color="#ff1110"/><stop offset="100%" stop-color="#ff0100"/></linearGradient>
<linearGradient id="w132" gradientUnits="userSpaceOnUse" x1="1133.6" y1="131.1" x2="1139.4" y2="70.9"><stop offset="0%" stop-color="#ffffff"/><stop offset="15%" stop-color="#ff908f"/><stop offset="30%" stop-color="#ff5b5a"/><stop offset="45%" stop-color="#ff3c3a"/><stop offset="60%" stop-color="#ff2724"/><stop offset="80%" stop-color="#ff1310"/><stop offset="100%" stop-color="#ff0300"/></linearGradient>
<linearGradient id="w133" gradientUnits="userSpaceOnUse" x1="1133.6" y1="131.1" x2="1139.4" y2="70.9"><stop offset="0%" stop-color="#ffffff"/><stop offset="15%" stop-color="#ff9290"/><stop offset="30%" stop-color="#ff5d5b"/><stop offset="45%" stop-color="#ff3e3b"/><stop offset="60%" stop-color="#ff2925"/><stop offset="80%" stop-color="#ff1510"/><stop offset="100%" stop-color="#ff0600"/></linearGradient>
<linearGradient id="w134" gradientUnits="userSpaceOnUse" x1="1133.6" y1="131.1" x2="1139.4" y2="70.9"><stop offset="0%" stop-color="#ffffff"/><stop offset="15%" stop-color="#ff9391"/><stop offset="30%" stop-color="#ff5f5c"/><stop offset="45%" stop-color="#ff403b"/><stop offset="60%" stop-color="#ff2b26"/><stop offset="80%" stop-color="#ff1711"/><stop offset="100%" stop-color="#ff0800"/></linearGradient>
<linearGradient id="w135" gradientUnits="userSpaceOnUse" x1="1133.6" y1="131.1" x2="1139.4" y2="70.9"><stop offset="0%" stop-color="#ffffff"/><stop offset="15%" stop-color="#ff9592"/><stop offset="30%" stop-color="#ff615d"/><stop offset="45%" stop-color="#ff423c"/><stop offset="60%" stop-color="#ff2d26"/><stop offset="80%" stop-color="#ff1911"/><stop offset="100%" stop-color="#ff0a00"/></linearGradient>
<linearGradient id="w136" gradientUnits="userSpaceOnUse" x1="1133.6" y1="131.1" x2="1139.4" y2="70.9"><stop offset="0%" stop-color="#ffffff"/><stop offset="15%" stop-color="#ff9793"/><stop offset="30%" stop-color="#ff635e"/><stop offset="45%" stop-color="#ff443d"/><stop offset="60%" stop-color="#ff2f27"/><stop offset="80%" stop-color="#ff1b11"/><stop offset="100%" stop-color="#ff0c00"/></linearGradient>
<linearGradient id="w137" gradientUnits="userSpaceOnUse" x1="1133.6" y1="131.1" x2="1139.4" y2="70.9"><stop offset="0%" stop-color="#ffffff"/><stop offset="15%" stop-color="#ff9994"/><stop offset="30%" stop-color="#ff665f"/><stop offset="45%" stop-color="#ff463e"/><stop offset="60%" stop-color="#ff3127"/><stop offset="80%" stop-color="#ff1d11"/><stop offset="100%" stop-color="#ff0e00"/></linearGradient>
<linearGradient id="w138" gradientUnits="userSpaceOnUse" x1="1133.6" y1="131.1" x2="1139.4" y2="70.9"><stop offset="0%" stop-color="#ffffff"/><stop offset="15%" stop-color="#ff9b96"/><stop offset="30%" stop-color="#ff6860"/><stop offset="45%" stop-color="#ff493f"/><stop offset="60%" stop-color="#ff3328"/><stop offset="80%" stop-color="#ff1f12"/><stop offset="100%" stop-color="#ff1000"/></linearGradient>
<linearGradient id="w139" gradientUnits="userSpaceOnUse" x1="1133.6" y1="131.1" x2="1139.4" y2="70.9"><stop offset="0%" stop-color="#ffffff"/><stop offset="15%" stop-color="#ff9d97"/><stop offset="30%" stop-color="#ff6a61"/><stop offset="45%" stop-color="#ff4b40"/><stop offset="60%" stop-color="#ff3528"/><stop offset="80%" stop-color="#ff2112"/><stop offset="100%" stop-color="#ff1200"/></linearGradient>
<linearGradient id="w140" gradientUnits="userSpaceOnUse" x1="1133.6" y1="131.1" x2="1139.4" y2="70.9"><stop offset="0%" stop-color="#ffffff"/><stop offset="15%" stop-color="#ff9e98"/><stop offset="30%" stop-color="#ff6c62"/><stop offset="45%" stop-color="#ff4d41"/><stop offset="60%" stop-color="#ff3829"/><stop offset="80%" stop-color="#ff2312"/><stop offset="100%" stop-color="#ff1500"/></linearGradient>
<linearGradient id="w141" gradientUnits="userSpaceOnUse" x1="1133.6" y1="131.1" x2="1139.4" y2="70.9"><stop offset="0%" stop-color="#ffffff"/><stop offset="15%" stop-color="#ffa099"/><stop offset="30%" stop-color="#ff6f63"/><stop offset="45%" stop-color="#ff5041"/><stop offset="60%" stop-color="#ff3a2a"/><stop offset="80%" stop-color="#ff2613"/><stop offset="100%" stop-color="#ff1700"/></linearGradient>
<linearGradient id="w142" gradientUnits="userSpaceOnUse" x1="1133.6" y1="131.1" x2="1139.4" y2="70.9"><stop offset="0%" stop-color="#ffffff"/><stop offset="15%" stop-color="#ffa29a"/><stop offset="30%" stop-color="#ff7165"/><stop offset="45%" stop-color="#ff5242"/><stop offset="60%" stop-color="#ff3d2a"/><stop offset="80%" stop-color="#ff2813"/><stop offset="100%" stop-color="#ff1a00"/></linearGradient>
<linearGradient id="w143" gradientUnits="userSpaceOnUse" x1="1133.6" y1="131.1" x2="1139.4" y2="70.9"><stop offset="0%" stop-color="#ffffff"/><stop offset="15%" stop-color="#ffa49c"/><stop offset="30%" stop-color="#ff7466"/><stop offset="45%" stop-color="#ff5543"/><stop offset="60%" stop-color="#ff3f2b"/><stop offset="80%" stop-color="#ff2b13"/><stop offset="100%" stop-color="#ff1c00"/></linearGradient>
<linearGradient id="w144" gradientUnits="userSpaceOnUse" x1="1133.6" y1="131.1" x2="1139.4" y2="70.9"><stop offset="0%" stop-color="#ffffff"/><stop offset="15%" stop-color="#ffa79d"/><stop offset="30%" stop-color="#ff7667"/><stop offset="45%" stop-color="#ff5844"/><stop offset="60%" stop-color="#ff422c"/><stop offset="80%" stop-color="#ff2e14"/><stop offset="100%" stop-color="#ff1f00"/></linearGradient>
<linearGradient id="w145" gradientUnits="userSpaceOnUse" x1="1133.6" y1="131.1" x2="1139.4" y2="70.9"><stop offset="0%" stop-color="#ffffff"/><stop offset="15%" stop-color="#ffa99e"/><stop offset="30%" stop-color="#ff7968"/><stop offset="45%" stop-color="#ff5a45"/><stop offset="60%" stop-color="#ff452d"/><stop offset="80%" stop-color="#ff3014"/><stop offset="100%" stop-color="#ff2100"/></linearGradient>
<linearGradient id="w146" gradientUnits="userSpaceOnUse" x1="1133.6" y1="131.1" x2="1139.4" y2="70.9"><stop offset="0%" stop-color="#ffffff"/><stop offset="15%" stop-color="#ffaba0"/><stop offset="30%" stop-color="#ff7c6a"/><stop offset="45%" stop-color="#ff5d47"/><stop offset="60%" stop-color="#ff482d"/><stop offset="80%" stop-color="#ff3314"/><stop offset="100%" stop-color="#ff2400"/></linearGradient>
<linearGradient id="w147" gradientUnits="userSpaceOnUse" x1="1133.6" y1="131.1" x2="1139.4" y2="70.9"><stop offset="0%" stop-color="#ffffff"/><stop offset="15%" stop-color="#ffada1"/><stop offset="30%" stop-color="#ff7e6b"/><stop offset="45%" stop-color="#ff6048"/><stop offset="60%" stop-color="#ff4b2e"/><stop offset="80%" stop-color="#ff3615"/><stop offset="100%" stop-color="#ff2700"/></linearGradient>
<linearGradient id="w148" gradientUnits="userSpaceOnUse" x1="1133.6" y1="131.1" x2="1139.4" y2="70.9"><stop offset="0%" stop-color="#ffffff"/><stop offset="15%" stop-color="#ffafa2"/><stop offset="30%" stop-color="#ff816d"/><stop offset="45%" stop-color="#ff6349"/><stop offset="60%" stop-color="#ff4e2f"/><stop offset="80%" stop-color="#ff3915"/><stop offset="100%" stop-color="#ff2a00"/></linearGradient>
<linearGradient id="w149" gradientUnits="userSpaceOnUse" x1="1133.6" y1="131.1" x2="1139.4" y2="70.9"><stop offset="0%" stop-color="#ffffff"/><stop offset="15%" stop-color="#ffb1a4"/><stop offset="30%" stop-color="#ff846e"/><stop offset="45%" stop-color="#ff664a"/><stop offset="60%" stop-color="#ff5130"/><stop offset="80%" stop-color="#ff3c16"/><stop offset="100%" stop-color="#ff2d00"/></linearGradient>
<linearGradient id="w150" gradientUnits="userSpaceOnUse" x1="1133.6" y1="131.1" x2="1139.4" y2="70.9"><stop offset="0%" stop-color="#ffffff"/><stop offset="15%" stop-color="#ffb4a5"/><stop offset="30%" stop-color="#ff8770"/><stop offset="45%" stop-color="#ff6a4b"/><stop offset="60%" stop-color="#ff5431"/><stop offset="80%" stop-color="#ff4016"/><stop offset="100%" stop-color="#ff3000"/></linearGradient>
<linearGradient id="w151" gradientUnits="userSpaceOnUse" x1="1133.6" y1="131.1" x2="1139.4" y2="70.9"><stop offset="0%" stop-color="#ffffff"/><stop offset="15%" stop-color="#ffb6a7"/><stop offset="30%" stop-color="#ff8a71"/><stop offset="45%" stop-color="#ff6d4d"/><stop offset="60%" stop-color="#ff5832"/><stop offset="80%" stop-color="#ff4317"/><stop offset="100%" stop-color="#ff3400"/></linearGradient>
<linearGradient id="w152" gradientUnits="userSpaceOnUse" x1="1133.6" y1="131.1" x2="1139.4" y2="70.9"><stop offset="0%" stop-color="#ffffff"/><stop offset="15%" stop-color="#ffb8a8"/><stop offset="30%" stop-color="#ff8d73"/><stop offset="45%" stop-color="#ff704e"/><stop offset="60%" stop-color="#ff5b33"/><stop offset="80%" stop-color="#ff4717"/><stop offset="100%" stop-color="#ff3700"/></linearGradient>
<linearGradient id="w153" gradientUnits="userSpaceOnUse" x1="1133.6" y1="131.1" x2="1139.4" y2="70.9"><stop offset="0%" stop-color="#ffffff"/><stop offset="15%" stop-color="#ffbbaa"/><stop offset="30%" stop-color="#ff9174"/><stop offset="45%" stop-color="#ff744f"/><stop offset="60%" stop-color="#ff5f34"/><stop offset="80%" stop-color="#ff4a18"/><stop offset="100%" stop-color="#ff3b00"/></linearGradient>
<linearGradient id="w154" gradientUnits="userSpaceOnUse" x1="1133.6" y1="131.1" x2="1139.4" y2="70.9"><stop offset="0%" stop-color="#ffffff"/><stop offset="15%" stop-color="#ffbdab"/><stop offset="30%" stop-color="#ff9476"/><stop offset="45%" stop-color="#ff7851"/><stop offset="60%" stop-color="#ff6335"/><stop offset="80%" stop-color="#ff4e18"/><stop offset="100%" stop-color="#ff3f00"/></linearGradient>
<linearGradient id="w155" gradientUnits="userSpaceOnUse" x1="1133.6" y1="131.1" x2="1139.4" y2="70.9"><stop offset="0%" stop-color="#ffffff"/><stop offset="15%" stop-color="#ffc0ad"/><stop offset="30%" stop-color="#ff9878"/><stop offset="45%" stop-color="#ff7c52"/><stop offset="60%" stop-color="#ff6736"/><stop offset="80%" stop-color="#ff5219"/><stop offset="100%" stop-color="#ff4300"/></linearGradient>
<linearGradient id="w156" gradientUnits="userSpaceOnUse" x1="1133.6" y1="131.1" x2="1139.4" y2="70.9"><stop offset="0%" stop-color="#ffffff"/><stop offset="15%" stop-color="#ffc2ae"/><stop offset="30%" stop-color="#ff9b7a"/><stop offset="45%" stop-color="#ff8054"/><stop offset="60%" stop-color="#ff6b37"/><stop offset="80%" stop-color="#ff5719"/><stop offset="100%" stop-color="#ff4800"/></linearGradient>
<linearGradient id="w157" gradientUnits="userSpaceOnUse" x1="1133.6" y1="131.1" x2="1139.4" y2="70.9"><stop offset="0%" stop-color="#ffffff"/><stop offset="15%" stop-color="#ffc5b0"/><stop offset="30%" stop-color="#ff9f7b"/><stop offset="45%" stop-color="#ff8456"/><stop offset="60%" stop-color="#ff7038"/><stop offset="80%" stop-color="#ff5b1a"/><stop offset="100%" stop-color="#ff4c00"/></linearGradient>
<linearGradient id="w158" gradientUnits="userSpaceOnUse" x1="1133.6" y1="131.1" x2="1139.4" y2="70.9"><stop offset="0%" stop-color="#ffffff"/><stop offset="15%" stop-color="#ffc8b2"/><stop offset="30%" stop-color="#ffa37d"/><stop offset="45%" stop-color="#ff8857"/><stop offset="60%" stop-color="#ff743a"/><stop offset="80%" stop-color="#ff601b"/><stop offset="100%" stop-color="#ff5100"/></linearGradient>
<linearGradient id="w159" gradientUnits="userSpaceOnUse" x1="1133.6" y1="131.1" x2="1139.4" y2="70.9"><stop offset="0%" stop-color="#ffffff"/><stop offset="15%" stop-color="#ffcab3"/><stop offset="30%" stop-color="#ffa77f"/><stop offset="45%" stop-color="#ff8d59"/><stop offset="60%" stop-color="#ff793b"/><stop offset="80%" stop-color="#ff651c"/><stop offset="100%" stop-color="#ff5600"/></linearGradient>
<linearGradient id="w160" gradientUnits="userSpaceOnUse" x1="1133.6" y1="131.1" x2="1139.4" y2="70.9"><stop offset="0%" stop-color="#ffffff"/><stop offset="15%" stop-color="#ffcdb5"/><stop offset="30%" stop-color="#ffab81"/><stop offset="45%" stop-color="#ff915b"/><stop offset="60%" stop-color="#ff7e3d"/><stop offset="80%" stop-color="#ff6a1c"/><stop offset="100%" stop-color="#ff5b00"/></linearGradient>
<linearGradient id="w161" gradientUnits="userSpaceOnUse" x1="1133.6" y1="131.1" x2="1139.4" y2="70.9"><stop offset="0%" stop-color="#ffffff"/><stop offset="15%" stop-color="#ffd0b7"/><stop offset="30%" stop-color="#ffaf84"/><stop offset="45%" stop-color="#ff965d"/><stop offset="60%" stop-color="#ff843e"/><stop offset="80%" stop-color="#ff701d"/><stop offset="100%" stop-color="#ff6100"/></linearGradient>
<linearGradient id="w162" gradientUnits="userSpaceOnUse" x1="1133.6" y1="131.1" x2="1139.4" y2="70.9"><stop offset="0%" stop-color="#ffffff"/><stop offset="15%" stop-color="#ffd3b9"/><stop offset="30%" stop-color="#ffb386"/><stop offset="45%" stop-color="#ff9c5f"/><stop offset="60%" stop-color="#ff8940"/><stop offset="80%" stop-color="#ff761e"/><stop offset="100%" stop-color="#ff6700"/></linearGradient>
<linearGradient id="w163" gradientUnits="userSpaceOnUse" x1="1133.6" y1="131.1" x2="1139.4" y2="70.9"><stop offset="0%" stop-color="#ffffff"/><stop offset="15%" stop-color="#ffd6ba"/><stop offset="30%" stop-color="#ffb888"/><stop offset="45%" stop-color="#ffa161"/><stop offset="60%" stop-color="#ff8f41"/><stop offset="80%" stop-color="#ff7c1f"/><stop offset="100%" stop-color="#ff6e00"/></linearGradient>
<linearGradient id="w164" gradientUnits="userSpaceOnUse" x1="1133.6" y1="131.1" x2="1139.4" y2="70.9"><stop offset="0%" stop-color="#ffffff"/><stop offset="15%" stop-color="#ffd9bc"/><stop offset="30%" stop-color="#ffbc8a"/><stop offset="45%" stop-color="#ffa763"/><stop offset="60%" stop-color="#ff9543"/><stop offset="80%" stop-color="#ff8320"/><stop offset="100%" stop-color="#ff7500"/></linearGradient>
<linearGradient id="w165" gradientUnits="userSpaceOnUse" x1="1133.6" y1="131.1" x2="1139.4" y2="70.9"><stop offset="0%" stop-color="#ffffff"/><stop offset="15%" stop-color="#ffdcbe"/><stop offset="30%" stop-color="#ffc18d"/><stop offset="45%" stop-color="#ffad65"/><stop offset="60%" stop-color="#ff9c45"/><stop offset="80%" stop-color="#ff8a21"/><stop offset="100%" stop-color="#ff7c00"/></linearGradient>
<linearGradient id="w166" gradientUnits="userSpaceOnUse" x1="1133.6" y1="131.1" x2="1139.4" y2="70.9"><stop offset="0%" stop-color="#ffffff"/><stop offset="15%" stop-color="#ffdfc0"/><stop offset="30%" stop-color="#ffc68f"/><stop offset="45%" stop-color="#ffb368"/><stop offset="60%" stop-color="#ffa347"/><stop offset="80%" stop-color="#ff9222"/><stop offset="100%" stop-color="#ff8500"/></linearGradient>
<linearGradient id="w167" gradientUnits="userSpaceOnUse" x1="1133.6" y1="131.1" x2="1139.4" y2="70.9"><stop offset="0%" stop-color="#ffffff"/><stop offset="15%" stop-color="#ffe2c2"/><stop offset="30%" stop-color="#ffcb92"/><stop offset="45%" stop-color="#ffb96a"/><stop offset="60%" stop-color="#ffaa49"/><stop offset="80%" stop-color="#ff9a23"/><stop offset="100%" stop-color="#ff8d00"/></linearGradient>
<linearGradient id="w168" gradientUnits="userSpaceOnUse" x1="1133.6" y1="131.1" x2="1139.4" y2="70.9"><stop offset="0%" stop-color="#ffffff"/><stop offset="15%" stop-color="#ffe5c4"/><stop offset="30%" stop-color="#ffd195"/><stop offset="45%" stop-color="#ffc06d"/><stop offset="60%" stop-color="#ffb24b"/><stop offset="80%" stop-color="#ffa325"/><stop offset="100%" stop-color="#ff9700"/></linearGradient>
<linearGradient id="w169" gradientUnits="userSpaceOnUse" x1="1133.6" y1="131.1" x2="1139.4" y2="70.9"><stop offset="0%" stop-color="#ffffff"/><stop offset="15%" stop-color="#ffe9c6"/><stop offset="30%" stop-color="#ffd698"/><stop offset="45%" stop-color="#ffc770"/><stop offset="60%" stop-color="#ffbb4e"/><stop offset="80%" stop-color="#ffad26"/><stop offset="100%" stop-color="#ffa100"/></linearGradient>
<linearGradient id="w170" gradientUnits="userSpaceOnUse" x1="1133.6" y1="131.1" x2="1139.4" y2="70.9"><stop offset="0%" stop-color="#ffffff"/><stop offset="15%" stop-color="#ffecc9"/><stop offset="30%" stop-color="#ffdc9b"/><stop offset="45%" stop-color="#ffcf73"/><stop offset="60%" stop-color="#ffc450"/><stop offset="80%" stop-color="#ffb728"/><stop offset="100%" stop-color="#ffad00"/></linearGradient>
<linearGradient id="w171" gradientUnits="userSpaceOnUse" x1="1133.6" y1="131.1" x2="1139.4" y2="70.9"><stop offset="0%" stop-color="#ffffff"/><stop offset="15%" stop-color="#ffefcb"/><stop offset="30%" stop-color="#ffe29e"/><stop offset="45%" stop-color="#ffd776"/><stop offset="60%" stop-color="#ffcd53"/><stop offset="80%" stop-color="#ffc229"/><stop offset="100%" stop-color="#ffb900"/></linearGradient>
<linearGradient id="w172" gradientUnits="userSpaceOnUse" x1="1133.6" y1="131.1" x2="1139.4" y2="70.9"><stop offset="0%" stop-color="#ffffff"/><stop offset="15%" stop-color="#fff3cd"/><stop offset="30%" stop-color="#ffe9a1"/><stop offset="45%" stop-color="#ffe07a"/><stop offset="60%" stop-color="#ffd856"/><stop offset="80%" stop-color="#ffcf2b"/><stop offset="100%" stop-color="#ffc700"/></linearGradient>
<linearGradient id="w173" gradientUnits="userSpaceOnUse" x1="1133.6" y1="131.1" x2="1139.4" y2="70.9"><stop offset="0%" stop-color="#ffffff"/><stop offset="15%" stop-color="#fff7cf"/><stop offset="30%" stop-color="#ffefa4"/><stop offset="45%" stop-color="#ffe97d"/><stop offset="60%" stop-color="#ffe359"/><stop offset="80%" stop-color="#ffdc2d"/><stop offset="100%" stop-color="#ffd600"/></linearGradient>
<linearGradient id="w174" gradientUnits="userSpaceOnUse" x1="1133.6" y1="131.1" x2="1139.4" y2="70.9"><stop offset="0%" stop-color="#ffffff"/><stop offset="15%" stop-color="#fffad2"/><stop offset="30%" stop-color="#fff6a8"/><stop offset="45%" stop-color="#fff381"/><stop offset="60%" stop-color="#ffef5d"/><stop offset="80%" stop-color="#ffeb2f"/><stop offset="100%" stop-color="#ffe700"/></linearGradient>
<linearGradient id="w175" gradientUnits="userSpaceOnUse" x1="1133.6" y1="131.1" x2="1139.4" y2="70.9"><stop offset="0%" stop-color="#ffffff"/><stop offset="15%" stop-color="#fffed4"/><stop offset="30%" stop-color="#fffdac"/><stop offset="45%" stop-color="#fffd85"/><stop offset="60%" stop-color="#fffc61"/><stop offset="80%" stop-color="#fffb32"/><stop offset="100%" stop-color="#fffb00"/></linearGradient>
<linearGradient id="w176" gradientUnits="userSpaceOnUse" x1="1133.6" y1="131.1" x2="1139.4" y2="70.9"><stop offset="0%" stop-color="#ffffff"/><stop offset="15%" stop-color="#fcffd4"/><stop offset="30%" stop-color="#f9ffab"/><stop offset="45%" stop-color="#f6ff85"/><stop offset="60%" stop-color="#f4ff61"/><stop offset="80%" stop-color="#f1ff31"/><stop offset="100%" stop-color="#eeff00"/></linearGradient>
<linearGradient id="w177" gradientUnits="userSpaceOnUse" x1="1133.6" y1="131.1" x2="1139.4" y2="70.9"><stop offset="0%" stop-color="#ffffff"/><stop offset="15%" stop-color="#f8ffd3"/><stop offset="30%" stop-color="#f2ffaa"/><stop offset="45%" stop-color="#ecff84"/><stop offset="60%" stop-color="#e7ff5f"/><stop offset="80%" stop-color="#e0ff31"/><stop offset="100%" stop-color="#daff00"/></linearGradient>
<linearGradient id="w178" gradientUnits="userSpaceOnUse" x1="1133.6" y1="131.1" x2="1139.4" y2="70.9"><stop offset="0%" stop-color="#ffffff"/><stop offset="15%" stop-color="#f4ffd2"/><stop offset="30%" stop-color="#eaffa9"/><stop offset="45%" stop-color="#e2ff82"/><stop offset="60%" stop-color="#d9ff5e"/><stop offset="80%" stop-color="#cfff30"/><stop offset="100%" stop-color="#c6ff00"/></linearGradient>
<linearGradient id="w179" gradientUnits="userSpaceOnUse" x1="1133.6" y1="131.1" x2="1139.4" y2="70.9"><stop offset="0%" stop-color="#ffffff"/><stop offset="15%" stop-color="#f0ffd2"/><stop offset="30%" stop-color="#e3ffa8"/><stop offset="45%" stop-color="#d7ff81"/><stop offset="60%" stop-color="#ccff5d"/><stop offset="80%" stop-color="#bfff2f"/><stop offset="100%" stop-color="#b3ff00"/></linearGradient>
<linearGradient id="w180" gradientUnits="userSpaceOnUse" x1="1133.6" y1="131.1" x2="1139.4" y2="70.9"><stop offset="0%" stop-color="#ffffff"/><stop offset="15%" stop-color="#edffd1"/><stop offset="30%" stop-color="#dcffa7"/><stop offset="45%" stop-color="#cdff80"/><stop offset="60%" stop-color="#c0ff5c"/><stop offset="80%" stop-color="#b0ff2e"/><stop offset="100%" stop-color="#a1ff00"/></linearGradient>
<linearGradient id="w181" gradientUnits="userSpaceOnUse" x1="1133.6" y1="131.1" x2="1139.4" y2="70.9"><stop offset="0%" stop-color="#ffffff"/><stop offset="15%" stop-color="#e9ffd0"/><stop offset="30%" stop-color="#d5ffa6"/><stop offset="45%" stop-color="#c3ff7f"/><stop offset="60%" stop-color="#b3ff5b"/><stop offset="80%" stop-color="#a0ff2e"/><stop offset="100%" stop-color="#8fff00"/></linearGradient>
<linearGradient id="w182" gradientUnits="userSpaceOnUse" x1="1133.6" y1="131.1" x2="1139.4" y2="70.9"><stop offset="0%" stop-color="#ffffff"/><stop offset="15%" stop-color="#e5ffcf"/><stop offset="30%" stop-color="#ceffa4"/><stop offset="45%" stop-color="#baff7d"/><stop offset="60%" stop-color="#a7ff5a"/><stop offset="80%" stop-color="#91ff2d"/><stop offset="100%" stop-color="#7eff00"/></linearGradient>
<linearGradient id="w183" gradientUnits="userSpaceOnUse" x1="1133.6" y1="131.1" x2="1139.4" y2="70.9"><stop offset="0%" stop-color="#ffffff"/><stop offset="15%" stop-color="#e1ffcf"/><stop offset="30%" stop-color="#c7ffa3"/><stop offset="45%" stop-color="#b0ff7c"/><stop offset="60%" stop-color="#9bff58"/><stop offset="80%" stop-color="#82ff2c"/><stop offset="100%" stop-color="#6dff00"/></linearGradient>
<linearGradient id="w184" gradientUnits="userSpaceOnUse" x1="1133.6" y1="131.1" x2="1139.4" y2="70.9"><stop offset="0%" stop-color="#ffffff"/><stop offset="15%" stop-color="#deffce"/><stop offset="30%" stop-color="#c1ffa2"/><stop offset="45%" stop-color="#a7ff7b"/><stop offset="60%" stop-color="#90ff57"/><stop offset="80%" stop-color="#74ff2c"/><stop offset="100%" stop-color="#5cff00"/></linearGradient>
<linearGradient id="w185" gradientUnits="userSpaceOnUse" x1="1133.6" y1="131.1" x2="1139.4" y2="70.9"><stop offset="0%" stop-color="#ffffff"/><stop offset="15%" stop-color="#daffcd"/><stop offset="30%" stop-color="#baffa1"/><stop offset="45%" stop-color="#9dff7a"/><stop offset="60%" stop-color="#84ff56"/><stop offset="80%" stop-color="#66ff2b"/><stop offset="100%" stop-color="#4bff00"/></linearGradient>
<linearGradient id="w186" gradientUnits="userSpaceOnUse" x1="1133.6" y1="131.1" x2="1139.4" y2="70.9"><stop offset="0%" stop-color="#ffffff"/><stop offset="15%" stop-color="#d6ffcc"/><stop offset="30%" stop-color="#b3ffa0"/><stop offset="45%" stop-color="#94ff79"/><stop offset="60%" stop-color="#79ff55"/><stop offset="80%" stop-color="#58ff2b"/><stop offset="100%" stop-color="#3bff00"/></linearGradient>
<linearGradient id="w187" gradientUnits="userSpaceOnUse" x1="1133.6" y1="131.1" x2="1139.4" y2="70.9"><stop offset="0%" stop-color="#ffffff"/><stop offset="15%" stop-color="#d3ffcc"/><stop offset="30%" stop-color="#adff9f"/><stop offset="45%" stop-color="#8bff78"/><stop offset="60%" stop-color="#6dff54"/><stop offset="80%" stop-color="#4aff2a"/><stop offset="100%" stop-color="#2bff00"/></linearGradient>
<linearGradient id="w188" gradientUnits="userSpaceOnUse" x1="1133.6" y1="131.1" x2="1139.4" y2="70.9"><stop offset="0%" stop-color="#ffffff"/><stop offset="15%" stop-color="#cfffcb"/><stop offset="30%" stop-color="#a6ff9e"/><stop offset="45%" stop-color="#82ff77"/><stop offset="60%" stop-color="#62ff54"/><stop offset="80%" stop-color="#3dff29"/><stop offset="100%" stop-color="#1bff00"/></linearGradient>
<linearGradient id="w189" gradientUnits="userSpaceOnUse" x1="1133.6" y1="131.1" x2="1139.4" y2="70.9"><stop offset="0%" stop-color="#ffffff"/><stop offset="15%" stop-color="#ccffca"/><stop offset="30%" stop-color="#a0ff9d"/><stop offset="45%" stop-color="#79ff76"/><stop offset="60%" stop-color="#58ff53"/><stop offset="80%" stop-color="#2fff29"/><stop offset="100%" stop-color="#0aff00"/></linearGradient></defs>
<g clip-path="url(#plotc)"><g clip-path="url(#hs)"><g clip-path="url(#belowgr)">
<g id="ciebase" shape-rendering="crispEdges" filter="url(#soft)"><path d="M1361.2,92.2 L2533.8,205 L2352.2,-947.3 Z" fill="#ff0000"/>
<path d="M1068.1,64 L-104.4,-48.8 L886.5,-1088.3 Z" fill="#00ff00"/>
<path d="M1113.5,352.1 L122.5,1391.6 L1295.1,1504.4 Z" fill="#0000ff"/>
<path d="M1068.1,64 L1069.1,70.5 L-99.3,-16.5 L-104.4,-48.8 Z" fill="#00ff09"/>
<path d="M1068.9,69 L1069.9,75.4 L-95.4,8.3 L-100.5,-24 Z" fill="#00ff18"/>
<path d="M1069.7,73.9 L1070.7,80.4 L-91.5,33.1 L-96.6,0.9 Z" fill="#00ff27"/>
<path d="M1070.4,78.9 L1071.5,85.4 L-87.6,58 L-92.7,25.7 Z" fill="#00ff36"/>
<path d="M1071.2,83.9 L1072.2,90.3 L-83.7,82.8 L-88.8,50.5 Z" fill="#00ff45"/>
<path d="M1072,88.8 L1073,95.3 L-79.8,107.6 L-84.9,75.4 Z" fill="#00ff54"/>
<path d="M1072.8,93.8 L1073.8,100.3 L-75.9,132.5 L-81,100.2 Z" fill="#00ff63"/>
<path d="M1073.6,98.8 L1074.6,105.2 L-72,157.3 L-77,125 Z" fill="#00ff73"/>
<path d="M1074.4,103.7 L1075.4,110.2 L-68,182.1 L-73.1,149.9 Z" fill="#00ff83"/>
<path d="M1075.1,108.7 L1076.2,115.2 L-64.1,207 L-69.2,174.7 Z" fill="#00ff94"/>
<path d="M1075.9,113.7 L1076.9,120.1 L-60.2,231.8 L-65.3,199.5 Z" fill="#00ffa5"/>
<path d="M1076.7,118.6 L1077.7,125.1 L-56.3,256.6 L-61.4,224.4 Z" fill="#00ffb6"/>
<path d="M1077.5,123.6 L1078.5,130.1 L-52.4,281.5 L-57.5,249.2 Z" fill="#00ffc8"/>
<path d="M1078.3,128.6 L1079.3,135 L-48.5,306.3 L-53.6,274 Z" fill="#00ffdb"/>
<path d="M1079.1,133.5 L1080.1,140 L-44.6,331.1 L-49.6,298.9 Z" fill="#00ffee"/>
<path d="M1079.8,138.5 L1080.9,145 L-40.6,356 L-45.7,323.7 Z" fill="#00fcff"/>
<path d="M1080.6,143.5 L1081.6,149.9 L-36.7,380.8 L-41.8,348.5 Z" fill="#00e9ff"/>
<path d="M1081.4,148.4 L1082.4,154.9 L-32.8,405.7 L-37.9,373.4 Z" fill="#00d8ff"/>
<path d="M1082.2,153.4 L1083.2,159.9 L-28.9,430.5 L-34,398.2 Z" fill="#00c9ff"/>
<path d="M1083,158.4 L1084,164.8 L-25,455.3 L-30.1,423 Z" fill="#00bbff"/>
<path d="M1083.8,163.3 L1084.8,169.8 L-21.1,480.2 L-26.2,447.9 Z" fill="#00afff"/>
<path d="M1084.5,168.3 L1085.6,174.8 L-17.2,505 L-22.3,472.7 Z" fill="#00a4ff"/>
<path d="M1085.3,173.3 L1086.3,179.7 L-13.3,529.8 L-18.3,497.5 Z" fill="#0099ff"/>
<path d="M1086.1,178.2 L1087.1,184.7 L-9.3,554.7 L-14.4,522.4 Z" fill="#0090ff"/>
<path d="M1086.9,183.2 L1087.9,189.7 L-5.4,579.5 L-10.5,547.2 Z" fill="#0087ff"/>
<path d="M1087.7,188.2 L1088.7,194.6 L-1.5,604.3 L-6.6,572 Z" fill="#007eff"/>
<path d="M1088.4,193.1 L1089.5,199.6 L2.4,629.2 L-2.7,596.9 Z" fill="#0077ff"/>
<path d="M1089.2,198.1 L1090.2,204.6 L6.3,654 L1.2,621.7 Z" fill="#006fff"/>
<path d="M1090,203.1 L1091,209.5 L10.2,678.8 L5.1,646.5 Z" fill="#0069ff"/>
<path d="M1090.8,208 L1091.8,214.5 L14.1,703.7 L9.1,671.4 Z" fill="#0062ff"/>
<path d="M1091.6,213 L1092.6,219.5 L18.1,728.5 L13,696.2 Z" fill="#005dff"/>
<path d="M1092.4,218 L1093.4,224.4 L22,753.3 L16.9,721 Z" fill="#0057ff"/>
<path d="M1093.1,222.9 L1094.2,229.4 L25.9,778.2 L20.8,745.9 Z" fill="#0052ff"/>
<path d="M1093.9,227.9 L1094.9,234.4 L29.8,803 L24.7,770.7 Z" fill="#004dff"/>
<path d="M1094.7,232.9 L1095.7,239.3 L33.7,827.8 L28.6,795.6 Z" fill="#0048ff"/>
<path d="M1095.5,237.8 L1096.5,244.3 L37.6,852.7 L32.5,820.4 Z" fill="#0043ff"/>
<path d="M1096.3,242.8 L1097.3,249.3 L41.5,877.5 L36.4,845.2 Z" fill="#003fff"/>
<path d="M1097.1,247.8 L1098.1,254.2 L45.4,902.3 L40.4,870.1 Z" fill="#003bff"/>
<path d="M1097.8,252.7 L1098.9,259.2 L49.4,927.2 L44.3,894.9 Z" fill="#0037ff"/>
<path d="M1098.6,257.7 L1099.6,264.2 L53.3,952 L48.2,919.7 Z" fill="#0033ff"/>
<path d="M1099.4,262.7 L1100.4,269.1 L57.2,976.8 L52.1,944.6 Z" fill="#0030ff"/>
<path d="M1100.2,267.6 L1101.2,274.1 L61.1,1001.7 L56,969.4 Z" fill="#002cff"/>
<path d="M1101,272.6 L1102,279.1 L65,1026.5 L59.9,994.2 Z" fill="#0029ff"/>
<path d="M1101.8,277.6 L1102.8,284 L68.9,1051.3 L63.8,1019.1 Z" fill="#0026ff"/>
<path d="M1102.5,282.5 L1103.6,289 L72.8,1076.2 L67.8,1043.9 Z" fill="#0023ff"/>
<path d="M1103.3,287.5 L1104.3,294 L76.8,1101 L71.7,1068.7 Z" fill="#0020ff"/>
<path d="M1104.1,292.5 L1105.1,298.9 L80.7,1125.8 L75.6,1093.6 Z" fill="#001dff"/>
<path d="M1104.9,297.4 L1105.9,303.9 L84.6,1150.7 L79.5,1118.4 Z" fill="#001aff"/>
<path d="M1105.7,302.4 L1106.7,308.9 L88.5,1175.5 L83.4,1143.2 Z" fill="#0017ff"/>
<path d="M1106.5,307.4 L1107.5,313.8 L92.4,1200.4 L87.3,1168.1 Z" fill="#0015ff"/>
<path d="M1107.2,312.3 L1108.3,318.8 L96.3,1225.2 L91.2,1192.9 Z" fill="#0012ff"/>
<path d="M1108,317.3 L1109,323.8 L100.2,1250 L95.1,1217.7 Z" fill="#0010ff"/>
<path d="M1108.8,322.3 L1109.8,328.7 L104.1,1274.9 L99.1,1242.6 Z" fill="#000dff"/>
<path d="M1109.6,327.2 L1110.6,333.7 L108.1,1299.7 L103,1267.4 Z" fill="#000bff"/>
<path d="M1110.4,332.2 L1111.4,338.7 L112,1324.5 L106.9,1292.2 Z" fill="#0009ff"/>
<path d="M1111.1,337.2 L1112.2,343.6 L115.9,1349.4 L110.8,1317.1 Z" fill="#0006ff"/>
<path d="M1111.9,342.1 L1112.9,348.6 L119.8,1374.2 L114.7,1341.9 Z" fill="#0004ff"/>
<path d="M1112.7,347.1 L1113.5,352.1 L122.5,1391.6 L118.6,1366.7 Z" fill="#0001ff"/>
<path d="M1113.5,352.1 L1118,347.4 L1317.4,1480.9 L1295.1,1504.4 Z" fill="#0300ff"/>
<path d="M1116.9,348.5 L1121.4,343.8 L1334.6,1462.9 L1312.3,1486.3 Z" fill="#0900ff"/>
<path d="M1120.4,344.9 L1124.8,340.2 L1351.8,1444.8 L1329.5,1468.3 Z" fill="#0e00ff"/>
<path d="M1123.8,341.3 L1128.3,336.6 L1369.1,1426.8 L1346.7,1450.3 Z" fill="#1300ff"/>
<path d="M1127.3,337.6 L1131.7,332.9 L1386.3,1408.7 L1363.9,1432.2 Z" fill="#1900ff"/>
<path d="M1130.7,334 L1135.2,329.3 L1403.5,1390.7 L1381.1,1414.2 Z" fill="#1e00ff"/>
<path d="M1134.1,330.4 L1138.6,325.7 L1420.7,1372.7 L1398.3,1396.1 Z" fill="#2300ff"/>
<path d="M1137.6,326.8 L1142.1,322.1 L1437.9,1354.6 L1415.5,1378.1 Z" fill="#2900ff"/>
<path d="M1141,323.2 L1145.5,318.5 L1455.1,1336.6 L1432.7,1360 Z" fill="#2e00ff"/>
<path d="M1144.5,319.6 L1148.9,314.9 L1472.3,1318.5 L1449.9,1342 Z" fill="#3400ff"/>
<path d="M1147.9,316 L1152.4,311.3 L1489.5,1300.5 L1467.1,1323.9 Z" fill="#3a00ff"/>
<path d="M1151.3,312.4 L1155.8,307.7 L1506.7,1282.4 L1484.3,1305.9 Z" fill="#4000ff"/>
<path d="M1154.8,308.8 L1159.3,304.1 L1523.9,1264.4 L1501.5,1287.8 Z" fill="#4600ff"/>
<path d="M1158.2,305.2 L1162.7,300.5 L1541.1,1246.3 L1518.7,1269.8 Z" fill="#4c00ff"/>
<path d="M1161.7,301.5 L1166.1,296.9 L1558.3,1228.3 L1535.9,1251.7 Z" fill="#5200ff"/>
<path d="M1165.1,297.9 L1169.6,293.2 L1575.5,1210.2 L1553.1,1233.7 Z" fill="#5800ff"/>
<path d="M1168.5,294.3 L1173,289.6 L1592.7,1192.2 L1570.3,1215.6 Z" fill="#5f00ff"/>
<path d="M1172,290.7 L1176.5,286 L1609.9,1174.1 L1587.5,1197.6 Z" fill="#6600ff"/>
<path d="M1175.4,287.1 L1179.9,282.4 L1627.1,1156.1 L1604.7,1179.6 Z" fill="#6d00ff"/>
<path d="M1178.9,283.5 L1183.3,278.8 L1644.3,1138 L1622,1161.5 Z" fill="#7400ff"/>
<path d="M1182.3,279.9 L1186.8,275.2 L1661.5,1120 L1639.2,1143.5 Z" fill="#7c00ff"/>
<path d="M1185.8,276.3 L1190.2,271.6 L1678.7,1101.9 L1656.4,1125.4 Z" fill="#8300ff"/>
<path d="M1189.2,272.7 L1193.7,268 L1695.9,1083.9 L1673.6,1107.4 Z" fill="#8b00ff"/>
<path d="M1192.6,269.1 L1197.1,264.4 L1713.1,1065.9 L1690.8,1089.3 Z" fill="#9400ff"/>
<path d="M1196.1,265.5 L1200.5,260.8 L1730.3,1047.8 L1708,1071.3 Z" fill="#9c00ff"/>
<path d="M1199.5,261.8 L1204,257.2 L1747.5,1029.8 L1725.2,1053.2 Z" fill="#a500ff"/>
<path d="M1203,258.2 L1207.4,253.5 L1764.7,1011.7 L1742.4,1035.2 Z" fill="#ae00ff"/>
<path d="M1206.4,254.6 L1210.9,249.9 L1781.9,993.7 L1759.6,1017.1 Z" fill="#b800ff"/>
<path d="M1209.8,251 L1214.3,246.3 L1799.2,975.6 L1776.8,999.1 Z" fill="#c200ff"/>
<path d="M1213.3,247.4 L1217.8,242.7 L1816.4,957.6 L1794,981 Z" fill="#cc00ff"/>
<path d="M1216.7,243.8 L1221.2,239.1 L1833.6,939.5 L1811.2,963 Z" fill="#d700ff"/>
<path d="M1220.2,240.2 L1224.6,235.5 L1850.8,921.5 L1828.4,944.9 Z" fill="#e200ff"/>
<path d="M1223.6,236.6 L1228.1,231.9 L1868,903.4 L1845.6,926.9 Z" fill="#ee00ff"/>
<path d="M1227,233 L1231.5,228.3 L1885.2,885.4 L1862.8,908.8 Z" fill="#fa00ff"/>
<path d="M1230.5,229.4 L1235,224.7 L1902.4,867.3 L1880,890.8 Z" fill="#ff00f7"/>
<path d="M1233.9,225.8 L1238.4,221.1 L1919.6,849.3 L1897.2,872.8 Z" fill="#ff00eb"/>
<path d="M1237.4,222.1 L1241.8,217.4 L1936.8,831.2 L1914.4,854.7 Z" fill="#ff00e0"/>
<path d="M1240.8,218.5 L1245.3,213.8 L1954,813.2 L1931.6,836.7 Z" fill="#ff00d5"/>
<path d="M1244.2,214.9 L1248.7,210.2 L1971.2,795.2 L1948.8,818.6 Z" fill="#ff00ca"/>
<path d="M1247.7,211.3 L1252.2,206.6 L1988.4,777.1 L1966,800.6 Z" fill="#ff00c1"/>
<path d="M1251.1,207.7 L1255.6,203 L2005.6,759.1 L1983.2,782.5 Z" fill="#ff00b7"/>
<path d="M1254.6,204.1 L1259,199.4 L2022.8,741 L2000.4,764.5 Z" fill="#ff00ae"/>
<path d="M1258,200.5 L1262.5,195.8 L2040,723 L2017.6,746.4 Z" fill="#ff00a5"/>
<path d="M1261.5,196.9 L1265.9,192.2 L2057.2,704.9 L2034.9,728.4 Z" fill="#ff009d"/>
<path d="M1264.9,193.3 L1269.4,188.6 L2074.4,686.9 L2052.1,710.3 Z" fill="#ff0095"/>
<path d="M1268.3,189.7 L1272.8,185 L2091.6,668.8 L2069.3,692.3 Z" fill="#ff008d"/>
<path d="M1271.8,186 L1276.2,181.4 L2108.8,650.8 L2086.5,674.2 Z" fill="#ff0086"/>
<path d="M1275.2,182.4 L1279.7,177.7 L2126,632.7 L2103.7,656.2 Z" fill="#ff007e"/>
<path d="M1278.7,178.8 L1283.1,174.1 L2143.2,614.7 L2120.9,638.1 Z" fill="#ff0078"/>
<path d="M1282.1,175.2 L1286.6,170.5 L2160.4,596.6 L2138.1,620.1 Z" fill="#ff0071"/>
<path d="M1285.5,171.6 L1290,166.9 L2177.6,578.6 L2155.3,602.1 Z" fill="#ff006a"/>
<path d="M1289,168 L1293.4,163.3 L2194.8,560.5 L2172.5,584 Z" fill="#ff0064"/>
<path d="M1292.4,164.4 L1296.9,159.7 L2212.1,542.5 L2189.7,566 Z" fill="#ff005e"/>
<path d="M1295.9,160.8 L1300.3,156.1 L2229.3,524.5 L2206.9,547.9 Z" fill="#ff0058"/>
<path d="M1299.3,157.2 L1303.8,152.5 L2246.5,506.4 L2224.1,529.9 Z" fill="#ff0053"/>
<path d="M1302.7,153.6 L1307.2,148.9 L2263.7,488.4 L2241.3,511.8 Z" fill="#ff004d"/>
<path d="M1306.2,150 L1310.7,145.3 L2280.9,470.3 L2258.5,493.8 Z" fill="#ff0048"/>
<path d="M1309.6,146.3 L1314.1,141.7 L2298.1,452.3 L2275.7,475.7 Z" fill="#ff0042"/>
<path d="M1313.1,142.7 L1317.5,138 L2315.3,434.2 L2292.9,457.7 Z" fill="#ff003d"/>
<path d="M1316.5,139.1 L1321,134.4 L2332.5,416.2 L2310.1,439.6 Z" fill="#ff0038"/>
<path d="M1319.9,135.5 L1324.4,130.8 L2349.7,398.1 L2327.3,421.6 Z" fill="#ff0033"/>
<path d="M1323.4,131.9 L1327.9,127.2 L2366.9,380.1 L2344.5,403.5 Z" fill="#ff002f"/>
<path d="M1326.8,128.3 L1331.3,123.6 L2384.1,362 L2361.7,385.5 Z" fill="#ff002a"/>
<path d="M1330.3,124.7 L1334.7,120 L2401.3,344 L2378.9,367.4 Z" fill="#ff0026"/>
<path d="M1333.7,121.1 L1338.2,116.4 L2418.5,325.9 L2396.1,349.4 Z" fill="#ff0021"/>
<path d="M1337.1,117.5 L1341.6,112.8 L2435.7,307.9 L2413.3,331.3 Z" fill="#ff001d"/>
<path d="M1340.6,113.9 L1345.1,109.2 L2452.9,289.8 L2430.5,313.3 Z" fill="#ff0018"/>
<path d="M1344,110.3 L1348.5,105.6 L2470.1,271.8 L2447.7,295.3 Z" fill="#ff0014"/>
<path d="M1347.5,106.6 L1351.9,101.9 L2487.3,253.7 L2465,277.2 Z" fill="#ff0010"/>
<path d="M1350.9,103 L1355.4,98.3 L2504.5,235.7 L2482.2,259.2 Z" fill="#ff000c"/>
<path d="M1354.4,99.4 L1358.8,94.7 L2521.7,217.7 L2499.4,241.1 Z" fill="#ff0007"/>
<path d="M1357.8,95.8 L1361.2,92.2 L2533.8,205 L2516.6,223.1 Z" fill="#ff0003"/>
<path d="M1361.2,92.2 L1354.8,91.6 L2319.9,-950.4 L2352.2,-947.3 Z" fill="#ff0100"/>
<path d="M1356.3,91.7 L1349.8,91.1 L2295.1,-952.8 L2327.3,-949.7 Z" fill="#ff0300"/>
<path d="M1351.3,91.2 L1344.8,90.6 L2270.2,-955.2 L2302.5,-952.1 Z" fill="#ff0600"/>
<path d="M1346.3,90.8 L1339.9,90.1 L2245.4,-957.6 L2277.7,-954.5 Z" fill="#ff0800"/>
<path d="M1341.4,90.3 L1334.9,89.7 L2220.5,-960 L2252.8,-956.9 Z" fill="#ff0a00"/>
<path d="M1336.4,89.8 L1329.9,89.2 L2195.7,-962.4 L2228,-959.2 Z" fill="#ff0c00"/>
<path d="M1331.4,89.3 L1325,88.7 L2170.8,-964.7 L2203.1,-961.6 Z" fill="#ff0e00"/>
<path d="M1326.5,88.9 L1320,88.2 L2146,-967.1 L2178.3,-964 Z" fill="#ff1000"/>
<path d="M1321.5,88.4 L1315,87.8 L2121.2,-969.5 L2153.5,-966.4 Z" fill="#ff1200"/>
<path d="M1316.5,87.9 L1310.1,87.3 L2096.3,-971.9 L2128.6,-968.8 Z" fill="#ff1500"/>
<path d="M1311.6,87.4 L1305.1,86.8 L2071.5,-974.3 L2103.8,-971.2 Z" fill="#ff1700"/>
<path d="M1306.6,86.9 L1300.1,86.3 L2046.6,-976.7 L2078.9,-973.6 Z" fill="#ff1a00"/>
<path d="M1301.6,86.5 L1295.2,85.8 L2021.8,-979.1 L2054.1,-976 Z" fill="#ff1c00"/>
<path d="M1296.6,86 L1290.2,85.4 L1997,-981.5 L2029.2,-978.4 Z" fill="#ff1f00"/>
<path d="M1291.7,85.5 L1285.2,84.9 L1972.1,-983.9 L2004.4,-980.8 Z" fill="#ff2100"/>
<path d="M1286.7,85 L1280.2,84.4 L1947.3,-986.3 L1979.6,-983.1 Z" fill="#ff2400"/>
<path d="M1281.7,84.6 L1275.3,83.9 L1922.4,-988.6 L1954.7,-985.5 Z" fill="#ff2700"/>
<path d="M1276.8,84.1 L1270.3,83.5 L1897.6,-991 L1929.9,-987.9 Z" fill="#ff2a00"/>
<path d="M1271.8,83.6 L1265.3,83 L1872.7,-993.4 L1905,-990.3 Z" fill="#ff2d00"/>
<path d="M1266.8,83.1 L1260.4,82.5 L1847.9,-995.8 L1880.2,-992.7 Z" fill="#ff3000"/>
<path d="M1261.9,82.6 L1255.4,82 L1823.1,-998.2 L1855.4,-995.1 Z" fill="#ff3400"/>
<path d="M1256.9,82.2 L1250.4,81.5 L1798.2,-1000.6 L1830.5,-997.5 Z" fill="#ff3700"/>
<path d="M1251.9,81.7 L1245.5,81.1 L1773.4,-1003 L1805.7,-999.9 Z" fill="#ff3b00"/>
<path d="M1247,81.2 L1240.5,80.6 L1748.5,-1005.4 L1780.8,-1002.3 Z" fill="#ff3f00"/>
<path d="M1242,80.7 L1235.5,80.1 L1723.7,-1007.8 L1756,-1004.7 Z" fill="#ff4300"/>
<path d="M1237,80.3 L1230.6,79.6 L1698.8,-1010.2 L1731.1,-1007 Z" fill="#ff4800"/>
<path d="M1232.1,79.8 L1225.6,79.2 L1674,-1012.5 L1706.3,-1009.4 Z" fill="#ff4c00"/>
<path d="M1227.1,79.3 L1220.6,78.7 L1649.2,-1014.9 L1681.5,-1011.8 Z" fill="#ff5100"/>
<path d="M1222.1,78.8 L1215.7,78.2 L1624.3,-1017.3 L1656.6,-1014.2 Z" fill="#ff5600"/>
<path d="M1217.2,78.3 L1210.7,77.7 L1599.5,-1019.7 L1631.8,-1016.6 Z" fill="#ff5b00"/>
<path d="M1212.2,77.9 L1205.7,77.2 L1574.6,-1022.1 L1606.9,-1019 Z" fill="#ff6100"/>
<path d="M1207.2,77.4 L1200.8,76.8 L1549.8,-1024.5 L1582.1,-1021.4 Z" fill="#ff6700"/>
<path d="M1202.2,76.9 L1195.8,76.3 L1525,-1026.9 L1557.3,-1023.8 Z" fill="#ff6e00"/>
<path d="M1197.3,76.4 L1190.8,75.8 L1500.1,-1029.3 L1532.4,-1026.2 Z" fill="#ff7500"/>
<path d="M1192.3,76 L1185.9,75.3 L1475.3,-1031.7 L1507.6,-1028.6 Z" fill="#ff7c00"/>
<path d="M1187.3,75.5 L1180.9,74.9 L1450.4,-1034.1 L1482.7,-1031 Z" fill="#ff8500"/>
<path d="M1182.4,75 L1175.9,74.4 L1425.6,-1036.4 L1457.9,-1033.3 Z" fill="#ff8d00"/>
<path d="M1177.4,74.5 L1170.9,73.9 L1400.7,-1038.8 L1433,-1035.7 Z" fill="#ff9700"/>
<path d="M1172.4,74 L1166,73.4 L1375.9,-1041.2 L1408.2,-1038.1 Z" fill="#ffa100"/>
<path d="M1167.5,73.6 L1161,72.9 L1351.1,-1043.6 L1383.4,-1040.5 Z" fill="#ffad00"/>
<path d="M1162.5,73.1 L1156,72.5 L1326.2,-1046 L1358.5,-1042.9 Z" fill="#ffb900"/>
<path d="M1157.5,72.6 L1151.1,72 L1301.4,-1048.4 L1333.7,-1045.3 Z" fill="#ffc700"/>
<path d="M1152.6,72.1 L1146.1,71.5 L1276.5,-1050.8 L1308.8,-1047.7 Z" fill="#ffd600"/>
<path d="M1147.6,71.6 L1141.1,71 L1251.7,-1053.2 L1284,-1050.1 Z" fill="#ffe700"/>
<path d="M1142.6,71.2 L1136.2,70.5 L1226.9,-1055.6 L1259.1,-1052.5 Z" fill="#fffb00"/>
<path d="M1137.7,70.7 L1131.2,70.1 L1202,-1058 L1234.3,-1054.9 Z" fill="#eeff00"/>
<path d="M1132.7,70.2 L1126.2,69.6 L1177.2,-1060.4 L1209.5,-1057.2 Z" fill="#daff00"/>
<path d="M1127.7,69.7 L1121.3,69.1 L1152.3,-1062.7 L1184.6,-1059.6 Z" fill="#c6ff00"/>
<path d="M1122.8,69.3 L1116.3,68.6 L1127.5,-1065.1 L1159.8,-1062 Z" fill="#b3ff00"/>
<path d="M1117.8,68.8 L1111.3,68.2 L1102.6,-1067.5 L1134.9,-1064.4 Z" fill="#a1ff00"/>
<path d="M1112.8,68.3 L1106.4,67.7 L1077.8,-1069.9 L1110.1,-1066.8 Z" fill="#8fff00"/>
<path d="M1107.8,67.8 L1101.4,67.2 L1053,-1072.3 L1085.3,-1069.2 Z" fill="#7eff00"/>
<path d="M1102.9,67.3 L1096.4,66.7 L1028.1,-1074.7 L1060.4,-1071.6 Z" fill="#6dff00"/>
<path d="M1097.9,66.9 L1091.5,66.2 L1003.3,-1077.1 L1035.6,-1074 Z" fill="#5cff00"/>
<path d="M1092.9,66.4 L1086.5,65.8 L978.4,-1079.5 L1010.7,-1076.4 Z" fill="#4bff00"/>
<path d="M1088,65.9 L1081.5,65.3 L953.6,-1081.9 L985.9,-1078.8 Z" fill="#3bff00"/>
<path d="M1083,65.4 L1076.5,64.8 L928.8,-1084.3 L961,-1081.1 Z" fill="#2bff00"/>
<path d="M1078,65 L1071.6,64.3 L903.9,-1086.6 L936.2,-1083.5 Z" fill="#1bff00"/>
<path d="M1073.1,64.5 L1068.1,64 L886.5,-1088.3 L911.4,-1085.9 Z" fill="#0aff00"/>
<path d="M1133.6,131.1 L1067.3,63.2 L1068.3,69.7 Z" fill="url(#w1)"/>
<path d="M1133.6,131.1 L1068.1,68.2 L1069.1,74.8 Z" fill="url(#w2)"/>
<path d="M1133.6,131.1 L1068.9,73.2 L1069.9,79.8 Z" fill="url(#w3)"/>
<path d="M1133.6,131.1 L1069.7,78.3 L1070.7,84.8 Z" fill="url(#w4)"/>
<path d="M1133.6,131.1 L1070.5,83.3 L1071.5,89.8 Z" fill="url(#w5)"/>
<path d="M1133.6,131.1 L1071.3,88.3 L1072.3,94.9 Z" fill="url(#w6)"/>
<path d="M1133.6,131.1 L1072.1,93.4 L1073.1,99.9 Z" fill="url(#w7)"/>
<path d="M1133.6,131.1 L1072.9,98.4 L1073.9,104.9 Z" fill="url(#w8)"/>
<path d="M1133.6,131.1 L1073.6,103.4 L1074.7,109.9 Z" fill="url(#w9)"/>
<path d="M1133.6,131.1 L1074.4,108.4 L1075.5,115 Z" fill="url(#w10)"/>
<path d="M1133.6,131.1 L1075.2,113.5 L1076.3,120 Z" fill="url(#w11)"/>
<path d="M1133.6,131.1 L1076,118.5 L1077.1,125 Z" fill="url(#w12)"/>
<path d="M1133.6,131.1 L1076.8,123.5 L1077.8,130 Z" fill="url(#w13)"/>
<path d="M1133.6,131.1 L1077.6,128.5 L1078.6,135.1 Z" fill="url(#w14)"/>
<path d="M1133.6,131.1 L1078.4,133.6 L1079.4,140.1 Z" fill="url(#w15)"/>
<path d="M1133.6,131.1 L1079.2,138.6 L1080.2,145.1 Z" fill="url(#w16)"/>
<path d="M1133.6,131.1 L1080,143.6 L1081,150.2 Z" fill="url(#w17)"/>
<path d="M1133.6,131.1 L1080.8,148.6 L1081.8,155.2 Z" fill="url(#w18)"/>
<path d="M1133.6,131.1 L1081.6,153.7 L1082.6,160.2 Z" fill="url(#w19)"/>
<path d="M1133.6,131.1 L1082.4,158.7 L1083.4,165.2 Z" fill="url(#w20)"/>
<path d="M1133.6,131.1 L1083.2,163.7 L1084.2,170.3 Z" fill="url(#w21)"/>
<path d="M1133.6,131.1 L1083.9,168.8 L1085,175.3 Z" fill="url(#w22)"/>
<path d="M1133.6,131.1 L1084.7,173.8 L1085.8,180.3 Z" fill="url(#w23)"/>
<path d="M1133.6,131.1 L1085.5,178.8 L1086.6,185.3 Z" fill="url(#w24)"/>
<path d="M1133.6,131.1 L1086.3,183.8 L1087.4,190.4 Z" fill="url(#w25)"/>
<path d="M1133.6,131.1 L1087.1,188.9 L1088.1,195.4 Z" fill="url(#w26)"/>
<path d="M1133.6,131.1 L1087.9,193.9 L1088.9,200.4 Z" fill="url(#w27)"/>
<path d="M1133.6,131.1 L1088.7,198.9 L1089.7,205.4 Z" fill="url(#w28)"/>
<path d="M1133.6,131.1 L1089.5,203.9 L1090.5,210.5 Z" fill="url(#w29)"/>
<path d="M1133.6,131.1 L1090.3,209 L1091.3,215.5 Z" fill="url(#w30)"/>
<path d="M1133.6,131.1 L1091.1,214 L1092.1,220.5 Z" fill="url(#w31)"/>
<path d="M1133.6,131.1 L1091.9,219 L1092.9,225.6 Z" fill="url(#w32)"/>
<path d="M1133.6,131.1 L1092.7,224 L1093.7,230.6 Z" fill="url(#w33)"/>
<path d="M1133.6,131.1 L1093.5,229.1 L1094.5,235.6 Z" fill="url(#w34)"/>
<path d="M1133.6,131.1 L1094.2,234.1 L1095.3,240.6 Z" fill="url(#w35)"/>
<path d="M1133.6,131.1 L1095,239.1 L1096.1,245.7 Z" fill="url(#w36)"/>
<path d="M1133.6,131.1 L1095.8,244.1 L1096.9,250.7 Z" fill="url(#w37)"/>
<path d="M1133.6,131.1 L1096.6,249.2 L1097.6,255.7 Z" fill="url(#w38)"/>
<path d="M1133.6,131.1 L1097.4,254.2 L1098.4,260.7 Z" fill="url(#w39)"/>
<path d="M1133.6,131.1 L1098.2,259.2 L1099.2,265.8 Z" fill="url(#w40)"/>
<path d="M1133.6,131.1 L1099,264.3 L1100,270.8 Z" fill="url(#w41)"/>
<path d="M1133.6,131.1 L1099.8,269.3 L1100.8,275.8 Z" fill="url(#w42)"/>
<path d="M1133.6,131.1 L1100.6,274.3 L1101.6,280.8 Z" fill="url(#w43)"/>
<path d="M1133.6,131.1 L1101.4,279.3 L1102.4,285.9 Z" fill="url(#w44)"/>
<path d="M1133.6,131.1 L1102.2,284.4 L1103.2,290.9 Z" fill="url(#w45)"/>
<path d="M1133.6,131.1 L1103,289.4 L1104,295.9 Z" fill="url(#w46)"/>
<path d="M1133.6,131.1 L1103.7,294.4 L1104.8,300.9 Z" fill="url(#w47)"/>
<path d="M1133.6,131.1 L1104.5,299.4 L1105.6,306 Z" fill="url(#w48)"/>
<path d="M1133.6,131.1 L1105.3,304.5 L1106.4,311 Z" fill="url(#w49)"/>
<path d="M1133.6,131.1 L1106.1,309.5 L1107.2,316 Z" fill="url(#w50)"/>
<path d="M1133.6,131.1 L1106.9,314.5 L1107.9,321.1 Z" fill="url(#w51)"/>
<path d="M1133.6,131.1 L1107.7,319.5 L1108.7,326.1 Z" fill="url(#w52)"/>
<path d="M1133.6,131.1 L1108.5,324.6 L1109.5,331.1 Z" fill="url(#w53)"/>
<path d="M1133.6,131.1 L1109.3,329.6 L1110.3,336.1 Z" fill="url(#w54)"/>
<path d="M1133.6,131.1 L1110.1,334.6 L1111.1,341.2 Z" fill="url(#w55)"/>
<path d="M1133.6,131.1 L1110.9,339.7 L1111.9,346.2 Z" fill="url(#w56)"/>
<path d="M1133.6,131.1 L1111.7,344.7 L1112.7,351.2 Z" fill="url(#w57)"/>
<path d="M1133.6,131.1 L1112.5,349.7 L1113.3,354.7 Z" fill="url(#w58)"/>
<path d="M1133.6,131.1 L1113.3,354.7 L1117.8,350 Z" fill="url(#w59)"/>
<path d="M1133.6,131.1 L1116.7,351.1 L1121.3,346.3 Z" fill="url(#w60)"/>
<path d="M1133.6,131.1 L1120.2,347.4 L1124.7,342.7 Z" fill="url(#w61)"/>
<path d="M1133.6,131.1 L1123.7,343.8 L1128.2,339 Z" fill="url(#w62)"/>
<path d="M1133.6,131.1 L1127.2,340.1 L1131.7,335.4 Z" fill="url(#w63)"/>
<path d="M1133.6,131.1 L1130.7,336.5 L1135.2,331.7 Z" fill="url(#w64)"/>
<path d="M1133.6,131.1 L1134.1,332.8 L1138.7,328.1 Z" fill="url(#w65)"/>
<path d="M1133.6,131.1 L1137.6,329.2 L1142.2,324.4 Z" fill="url(#w66)"/>
<path d="M1133.6,131.1 L1141.1,325.5 L1145.6,320.8 Z" fill="url(#w67)"/>
<path d="M1133.6,131.1 L1144.6,321.9 L1149.1,317.1 Z" fill="url(#w68)"/>
<path d="M1133.6,131.1 L1148.1,318.2 L1152.6,313.5 Z" fill="url(#w69)"/>
<path d="M1133.6,131.1 L1151.6,314.6 L1156.1,309.8 Z" fill="url(#w70)"/>
<path d="M1133.6,131.1 L1155,310.9 L1159.6,306.2 Z" fill="url(#w71)"/>
<path d="M1133.6,131.1 L1158.5,307.2 L1163,302.5 Z" fill="url(#w72)"/>
<path d="M1133.6,131.1 L1162,303.6 L1166.5,298.8 Z" fill="url(#w73)"/>
<path d="M1133.6,131.1 L1165.5,299.9 L1170,295.2 Z" fill="url(#w74)"/>
<path d="M1133.6,131.1 L1169,296.3 L1173.5,291.5 Z" fill="url(#w75)"/>
<path d="M1133.6,131.1 L1172.4,292.6 L1177,287.9 Z" fill="url(#w76)"/>
<path d="M1133.6,131.1 L1175.9,289 L1180.5,284.2 Z" fill="url(#w77)"/>
<path d="M1133.6,131.1 L1179.4,285.3 L1183.9,280.6 Z" fill="url(#w78)"/>
<path d="M1133.6,131.1 L1182.9,281.7 L1187.4,276.9 Z" fill="url(#w79)"/>
<path d="M1133.6,131.1 L1186.4,278 L1190.9,273.3 Z" fill="url(#w80)"/>
<path d="M1133.6,131.1 L1189.9,274.4 L1194.4,269.6 Z" fill="url(#w81)"/>
<path d="M1133.6,131.1 L1193.3,270.7 L1197.9,266 Z" fill="url(#w82)"/>
<path d="M1133.6,131.1 L1196.8,267.1 L1201.4,262.3 Z" fill="url(#w83)"/>
<path d="M1133.6,131.1 L1200.3,263.4 L1204.8,258.7 Z" fill="url(#w84)"/>
<path d="M1133.6,131.1 L1203.8,259.8 L1208.3,255 Z" fill="url(#w85)"/>
<path d="M1133.6,131.1 L1207.3,256.1 L1211.8,251.4 Z" fill="url(#w86)"/>
<path d="M1133.6,131.1 L1210.8,252.5 L1215.3,247.7 Z" fill="url(#w87)"/>
<path d="M1133.6,131.1 L1214.2,248.8 L1218.8,244.1 Z" fill="url(#w88)"/>
<path d="M1133.6,131.1 L1217.7,245.2 L1222.2,240.4 Z" fill="url(#w89)"/>
<path d="M1133.6,131.1 L1221.2,241.5 L1225.7,236.7 Z" fill="url(#w90)"/>
<path d="M1133.6,131.1 L1224.7,237.8 L1229.2,233.1 Z" fill="url(#w91)"/>
<path d="M1133.6,131.1 L1228.2,234.2 L1232.7,229.4 Z" fill="url(#w92)"/>
<path d="M1133.6,131.1 L1231.6,230.5 L1236.2,225.8 Z" fill="url(#w93)"/>
<path d="M1133.6,131.1 L1235.1,226.9 L1239.7,222.1 Z" fill="url(#w94)"/>
<path d="M1133.6,131.1 L1238.6,223.2 L1243.1,218.5 Z" fill="url(#w95)"/>
<path d="M1133.6,131.1 L1242.1,219.6 L1246.6,214.8 Z" fill="url(#w96)"/>
<path d="M1133.6,131.1 L1245.6,215.9 L1250.1,211.2 Z" fill="url(#w97)"/>
<path d="M1133.6,131.1 L1249.1,212.3 L1253.6,207.5 Z" fill="url(#w98)"/>
<path d="M1133.6,131.1 L1252.5,208.6 L1257.1,203.9 Z" fill="url(#w99)"/>
<path d="M1133.6,131.1 L1256,205 L1260.5,200.2 Z" fill="url(#w100)"/>
<path d="M1133.6,131.1 L1259.5,201.3 L1264,196.6 Z" fill="url(#w101)"/>
<path d="M1133.6,131.1 L1263,197.7 L1267.5,192.9 Z" fill="url(#w102)"/>
<path d="M1133.6,131.1 L1266.5,194 L1271,189.3 Z" fill="url(#w103)"/>
<path d="M1133.6,131.1 L1269.9,190.4 L1274.5,185.6 Z" fill="url(#w104)"/>
<path d="M1133.6,131.1 L1273.4,186.7 L1278,182 Z" fill="url(#w105)"/>
<path d="M1133.6,131.1 L1276.9,183.1 L1281.4,178.3 Z" fill="url(#w106)"/>
<path d="M1133.6,131.1 L1280.4,179.4 L1284.9,174.7 Z" fill="url(#w107)"/>
<path d="M1133.6,131.1 L1283.9,175.7 L1288.4,171 Z" fill="url(#w108)"/>
<path d="M1133.6,131.1 L1287.4,172.1 L1291.9,167.3 Z" fill="url(#w109)"/>
<path d="M1133.6,131.1 L1290.8,168.4 L1295.4,163.7 Z" fill="url(#w110)"/>
<path d="M1133.6,131.1 L1294.3,164.8 L1298.8,160 Z" fill="url(#w111)"/>
<path d="M1133.6,131.1 L1297.8,161.1 L1302.3,156.4 Z" fill="url(#w112)"/>
<path d="M1133.6,131.1 L1301.3,157.5 L1305.8,152.7 Z" fill="url(#w113)"/>
<path d="M1133.6,131.1 L1304.8,153.8 L1309.3,149.1 Z" fill="url(#w114)"/>
<path d="M1133.6,131.1 L1308.3,150.2 L1312.8,145.4 Z" fill="url(#w115)"/>
<path d="M1133.6,131.1 L1311.7,146.5 L1316.3,141.8 Z" fill="url(#w116)"/>
<path d="M1133.6,131.1 L1315.2,142.9 L1319.7,138.1 Z" fill="url(#w117)"/>
<path d="M1133.6,131.1 L1318.7,139.2 L1323.2,134.5 Z" fill="url(#w118)"/>
<path d="M1133.6,131.1 L1322.2,135.6 L1326.7,130.8 Z" fill="url(#w119)"/>
<path d="M1133.6,131.1 L1325.7,131.9 L1330.2,127.2 Z" fill="url(#w120)"/>
<path d="M1133.6,131.1 L1329.1,128.3 L1333.7,123.5 Z" fill="url(#w121)"/>
<path d="M1133.6,131.1 L1332.6,124.6 L1337.2,119.9 Z" fill="url(#w122)"/>
<path d="M1133.6,131.1 L1336.1,121 L1340.6,116.2 Z" fill="url(#w123)"/>
<path d="M1133.6,131.1 L1339.6,117.3 L1344.1,112.6 Z" fill="url(#w124)"/>
<path d="M1133.6,131.1 L1343.1,113.7 L1347.6,108.9 Z" fill="url(#w125)"/>
<path d="M1133.6,131.1 L1346.6,110 L1351.1,105.3 Z" fill="url(#w126)"/>
<path d="M1133.6,131.1 L1350,106.3 L1354.6,101.6 Z" fill="url(#w127)"/>
<path d="M1133.6,131.1 L1353.5,102.7 L1358,97.9 Z" fill="url(#w128)"/>
<path d="M1133.6,131.1 L1357,99 L1361.5,94.3 Z" fill="url(#w129)"/>
<path d="M1133.6,131.1 L1360.5,95.4 L1364,91.7 Z" fill="url(#w130)"/>
<path d="M1133.6,131.1 L1364,91.7 L1357.4,91.1 Z" fill="url(#w131)"/>
<path d="M1133.6,131.1 L1358.9,91.3 L1352.4,90.6 Z" fill="url(#w132)"/>
<path d="M1133.6,131.1 L1353.9,90.8 L1347.4,90.1 Z" fill="url(#w133)"/>
<path d="M1133.6,131.1 L1348.9,90.3 L1342.3,89.7 Z" fill="url(#w134)"/>
<path d="M1133.6,131.1 L1343.9,89.8 L1337.3,89.2 Z" fill="url(#w135)"/>
<path d="M1133.6,131.1 L1338.8,89.3 L1332.3,88.7 Z" fill="url(#w136)"/>
<path d="M1133.6,131.1 L1333.8,88.8 L1327.3,88.2 Z" fill="url(#w137)"/>
<path d="M1133.6,131.1 L1328.8,88.4 L1322.2,87.7 Z" fill="url(#w138)"/>
<path d="M1133.6,131.1 L1323.7,87.9 L1317.2,87.2 Z" fill="url(#w139)"/>
<path d="M1133.6,131.1 L1318.7,87.4 L1312.2,86.8 Z" fill="url(#w140)"/>
<path d="M1133.6,131.1 L1313.7,86.9 L1307.1,86.3 Z" fill="url(#w141)"/>
<path d="M1133.6,131.1 L1308.7,86.4 L1302.1,85.8 Z" fill="url(#w142)"/>
<path d="M1133.6,131.1 L1303.6,85.9 L1297.1,85.3 Z" fill="url(#w143)"/>
<path d="M1133.6,131.1 L1298.6,85.4 L1292.1,84.8 Z" fill="url(#w144)"/>
<path d="M1133.6,131.1 L1293.6,85 L1287,84.3 Z" fill="url(#w145)"/>
<path d="M1133.6,131.1 L1288.5,84.5 L1282,83.9 Z" fill="url(#w146)"/>
<path d="M1133.6,131.1 L1283.5,84 L1277,83.4 Z" fill="url(#w147)"/>
<path d="M1133.6,131.1 L1278.5,83.5 L1272,82.9 Z" fill="url(#w148)"/>
<path d="M1133.6,131.1 L1273.5,83 L1266.9,82.4 Z" fill="url(#w149)"/>
<path d="M1133.6,131.1 L1268.4,82.5 L1261.9,81.9 Z" fill="url(#w150)"/>
<path d="M1133.6,131.1 L1263.4,82.1 L1256.9,81.4 Z" fill="url(#w151)"/>
<path d="M1133.6,131.1 L1258.4,81.6 L1251.8,80.9 Z" fill="url(#w152)"/>
<path d="M1133.6,131.1 L1253.3,81.1 L1246.8,80.5 Z" fill="url(#w153)"/>
<path d="M1133.6,131.1 L1248.3,80.6 L1241.8,80 Z" fill="url(#w154)"/>
<path d="M1133.6,131.1 L1243.3,80.1 L1236.8,79.5 Z" fill="url(#w155)"/>
<path d="M1133.6,131.1 L1238.3,79.6 L1231.7,79 Z" fill="url(#w156)"/>
<path d="M1133.6,131.1 L1233.2,79.2 L1226.7,78.5 Z" fill="url(#w157)"/>
<path d="M1133.6,131.1 L1228.2,78.7 L1221.7,78 Z" fill="url(#w158)"/>
<path d="M1133.6,131.1 L1223.2,78.2 L1216.6,77.6 Z" fill="url(#w159)"/>
<path d="M1133.6,131.1 L1218.2,77.7 L1211.6,77.1 Z" fill="url(#w160)"/>
<path d="M1133.6,131.1 L1213.1,77.2 L1206.6,76.6 Z" fill="url(#w161)"/>
<path d="M1133.6,131.1 L1208.1,76.7 L1201.6,76.1 Z" fill="url(#w162)"/>
<path d="M1133.6,131.1 L1203.1,76.3 L1196.5,75.6 Z" fill="url(#w163)"/>
<path d="M1133.6,131.1 L1198,75.8 L1191.5,75.1 Z" fill="url(#w164)"/>
<path d="M1133.6,131.1 L1193,75.3 L1186.5,74.7 Z" fill="url(#w165)"/>
<path d="M1133.6,131.1 L1188,74.8 L1181.4,74.2 Z" fill="url(#w166)"/>
<path d="M1133.6,131.1 L1183,74.3 L1176.4,73.7 Z" fill="url(#w167)"/>
<path d="M1133.6,131.1 L1177.9,73.8 L1171.4,73.2 Z" fill="url(#w168)"/>
<path d="M1133.6,131.1 L1172.9,73.4 L1166.4,72.7 Z" fill="url(#w169)"/>
<path d="M1133.6,131.1 L1167.9,72.9 L1161.3,72.2 Z" fill="url(#w170)"/>
<path d="M1133.6,131.1 L1162.8,72.4 L1156.3,71.8 Z" fill="url(#w171)"/>
<path d="M1133.6,131.1 L1157.8,71.9 L1151.3,71.3 Z" fill="url(#w172)"/>
<path d="M1133.6,131.1 L1152.8,71.4 L1146.3,70.8 Z" fill="url(#w173)"/>
<path d="M1133.6,131.1 L1147.8,70.9 L1141.2,70.3 Z" fill="url(#w174)"/>
<path d="M1133.6,131.1 L1142.7,70.5 L1136.2,69.8 Z" fill="url(#w175)"/>
<path d="M1133.6,131.1 L1137.7,70 L1131.2,69.3 Z" fill="url(#w176)"/>
<path d="M1133.6,131.1 L1132.7,69.5 L1126.1,68.9 Z" fill="url(#w177)"/>
<path d="M1133.6,131.1 L1127.6,69 L1121.1,68.4 Z" fill="url(#w178)"/>
<path d="M1133.6,131.1 L1122.6,68.5 L1116.1,67.9 Z" fill="url(#w179)"/>
<path d="M1133.6,131.1 L1117.6,68 L1111.1,67.4 Z" fill="url(#w180)"/>
<path d="M1133.6,131.1 L1112.6,67.5 L1106,66.9 Z" fill="url(#w181)"/>
<path d="M1133.6,131.1 L1107.5,67.1 L1101,66.4 Z" fill="url(#w182)"/>
<path d="M1133.6,131.1 L1102.5,66.6 L1096,66 Z" fill="url(#w183)"/>
<path d="M1133.6,131.1 L1097.5,66.1 L1090.9,65.5 Z" fill="url(#w184)"/>
<path d="M1133.6,131.1 L1092.5,65.6 L1085.9,65 Z" fill="url(#w185)"/>
<path d="M1133.6,131.1 L1087.4,65.1 L1080.9,64.5 Z" fill="url(#w186)"/>
<path d="M1133.6,131.1 L1082.4,64.6 L1075.9,64 Z" fill="url(#w187)"/>
<path d="M1133.6,131.1 L1077.4,64.2 L1070.8,63.5 Z" fill="url(#w188)"/>
<path d="M1133.6,131.1 L1072.3,63.7 L1067.3,63.2 Z" fill="url(#w189)"/></g>
<path d="M900,0H1600V520H900Z M1457.4,99.2 L1005.6,47.7 L1100,372.4 Z" fill="#000" fill-opacity="0.4" fill-rule="evenodd"/>
</g></g></g>

<rect x="956.4" y="37.4" width="542.4" height="429.6" fill="none" stroke="#8e8e8e" stroke-width="1.6"/>
<path d="M956.4 467V471.5" stroke="#8e8e8e" stroke-width="1.5"/>
<text x="956.7" y="485.7" font-size="12.4" text-anchor="middle" fill="#ececec" stroke="#ececec" stroke-width=".28">0</text>
<path d="M951.5 467H954.6" stroke="#d4d4d4" stroke-width="1.3"/>
<text x="951.2" y="471.3" font-size="12.4" text-anchor="end" fill="#ececec" stroke="#ececec" stroke-width=".28">0</text>
<path d="M1001.4 467V471.5" stroke="#8e8e8e" stroke-width="1.5"/>
<text x="1001.7" y="485.7" font-size="12.4" text-anchor="middle" fill="#ececec" stroke="#ececec" stroke-width=".28">0,05</text>
<path d="M951.5 431.37H954.6" stroke="#d4d4d4" stroke-width="1.3"/>
<text x="951.2" y="435.67" font-size="12.4" text-anchor="end" fill="#ececec" stroke="#ececec" stroke-width=".28">0,05</text>
<path d="M1046.4 467V471.5" stroke="#8e8e8e" stroke-width="1.5"/>
<text x="1046.7" y="485.7" font-size="12.4" text-anchor="middle" fill="#ececec" stroke="#ececec" stroke-width=".28">0,1</text>
<path d="M951.5 395.74H954.6" stroke="#d4d4d4" stroke-width="1.3"/>
<text x="951.2" y="400.04" font-size="12.4" text-anchor="end" fill="#ececec" stroke="#ececec" stroke-width=".28">0,1</text>
<path d="M1091.4 467V471.5" stroke="#8e8e8e" stroke-width="1.5"/>
<text x="1091.7" y="485.7" font-size="12.4" text-anchor="middle" fill="#ececec" stroke="#ececec" stroke-width=".28">0,15</text>
<path d="M951.5 360.11H954.6" stroke="#d4d4d4" stroke-width="1.3"/>
<text x="951.2" y="364.41" font-size="12.4" text-anchor="end" fill="#ececec" stroke="#ececec" stroke-width=".28">0,15</text>
<path d="M1136.4 467V471.5" stroke="#8e8e8e" stroke-width="1.5"/>
<text x="1136.7" y="485.7" font-size="12.4" text-anchor="middle" fill="#ececec" stroke="#ececec" stroke-width=".28">0,2</text>
<path d="M951.5 324.48H954.6" stroke="#d4d4d4" stroke-width="1.3"/>
<text x="951.2" y="328.78" font-size="12.4" text-anchor="end" fill="#ececec" stroke="#ececec" stroke-width=".28">0,2</text>
<path d="M1181.4 467V471.5" stroke="#8e8e8e" stroke-width="1.5"/>
<text x="1181.7" y="485.7" font-size="12.4" text-anchor="middle" fill="#ececec" stroke="#ececec" stroke-width=".28">0,25</text>
<path d="M951.5 288.85H954.6" stroke="#d4d4d4" stroke-width="1.3"/>
<text x="951.2" y="293.15" font-size="12.4" text-anchor="end" fill="#ececec" stroke="#ececec" stroke-width=".28">0,25</text>
<path d="M1226.4 467V471.5" stroke="#8e8e8e" stroke-width="1.5"/>
<text x="1226.7" y="485.7" font-size="12.4" text-anchor="middle" fill="#ececec" stroke="#ececec" stroke-width=".28">0,3</text>
<path d="M951.5 253.22H954.6" stroke="#d4d4d4" stroke-width="1.3"/>
<text x="951.2" y="257.52" font-size="12.4" text-anchor="end" fill="#ececec" stroke="#ececec" stroke-width=".28">0,3</text>
<path d="M1271.4 467V471.5" stroke="#8e8e8e" stroke-width="1.5"/>
<text x="1271.7" y="485.7" font-size="12.4" text-anchor="middle" fill="#ececec" stroke="#ececec" stroke-width=".28">0,35</text>
<path d="M951.5 217.59H954.6" stroke="#d4d4d4" stroke-width="1.3"/>
<text x="951.2" y="221.89" font-size="12.4" text-anchor="end" fill="#ececec" stroke="#ececec" stroke-width=".28">0,35</text>
<path d="M1316.4 467V471.5" stroke="#8e8e8e" stroke-width="1.5"/>
<text x="1316.7" y="485.7" font-size="12.4" text-anchor="middle" fill="#ececec" stroke="#ececec" stroke-width=".28">0,4</text>
<path d="M951.5 181.96H954.6" stroke="#d4d4d4" stroke-width="1.3"/>
<text x="951.2" y="186.26" font-size="12.4" text-anchor="end" fill="#ececec" stroke="#ececec" stroke-width=".28">0,4</text>
<path d="M1361.4 467V471.5" stroke="#8e8e8e" stroke-width="1.5"/>
<text x="1361.7" y="485.7" font-size="12.4" text-anchor="middle" fill="#ececec" stroke="#ececec" stroke-width=".28">0,45</text>
<path d="M951.5 146.33H954.6" stroke="#d4d4d4" stroke-width="1.3"/>
<text x="951.2" y="150.63" font-size="12.4" text-anchor="end" fill="#ececec" stroke="#ececec" stroke-width=".28">0,45</text>
<path d="M1406.4 467V471.5" stroke="#8e8e8e" stroke-width="1.5"/>
<text x="1406.7" y="485.7" font-size="12.4" text-anchor="middle" fill="#ececec" stroke="#ececec" stroke-width=".28">0,5</text>
<path d="M951.5 110.7H954.6" stroke="#d4d4d4" stroke-width="1.3"/>
<text x="951.2" y="115" font-size="12.4" text-anchor="end" fill="#ececec" stroke="#ececec" stroke-width=".28">0,5</text>
<path d="M1451.4 467V471.5" stroke="#8e8e8e" stroke-width="1.5"/>
<text x="1451.7" y="485.7" font-size="12.4" text-anchor="middle" fill="#ececec" stroke="#ececec" stroke-width=".28">0,55</text>
<path d="M951.5 75.07H954.6" stroke="#d4d4d4" stroke-width="1.3"/>
<text x="951.2" y="79.37" font-size="12.4" text-anchor="end" fill="#ececec" stroke="#ececec" stroke-width=".28">0,55</text>
<text x="1212.4" y="33" font-size="12.6" text-anchor="middle" textLength="71" lengthAdjust="spacingAndGlyphs" fill="#ececec" stroke="#ececec" stroke-width=".28">CIE 1976 u'v'</text>
<clipPath id="insc"><rect x="1335.8" y="308.8" width="158" height="122"/></clipPath>
<g clip-path="url(#insc)" filter="url(#soft)"><rect x="1325" y="298" width="180" height="144" fill="#fff"/><defs><linearGradient id="i0" gradientUnits="userSpaceOnUse" x1="1414.2" y1="369.6" x2="1526.2" y2="369.6"><stop offset="0%" stop-color="#ffffff"/><stop offset="18.2%" stop-color="#ffe7e7"/><stop offset="36.4%" stop-color="#ffd2d2"/><stop offset="59.2%" stop-color="#ffbbbc"/><stop offset="84.2%" stop-color="#ffa7a7"/><stop offset="111.6%" stop-color="#ff9494"/></linearGradient><linearGradient id="i1" gradientUnits="userSpaceOnUse" x1="1414.2" y1="369.6" x2="1525.9" y2="361.8"><stop offset="0%" stop-color="#ffffff"/><stop offset="18.2%" stop-color="#ffe8e7"/><stop offset="36.4%" stop-color="#ffd4d2"/><stop offset="59.2%" stop-color="#ffbebb"/><stop offset="84.2%" stop-color="#ffaaa6"/><stop offset="111.6%" stop-color="#ff9893"/></linearGradient><linearGradient id="i2" gradientUnits="userSpaceOnUse" x1="1414.2" y1="369.6" x2="1525.1" y2="354"><stop offset="0%" stop-color="#ffffff"/><stop offset="18.2%" stop-color="#ffe9e7"/><stop offset="36.4%" stop-color="#ffd6d2"/><stop offset="59.2%" stop-color="#ffc1bb"/><stop offset="84.2%" stop-color="#ffaea6"/><stop offset="111.6%" stop-color="#ff9c92"/></linearGradient><linearGradient id="i3" gradientUnits="userSpaceOnUse" x1="1414.2" y1="369.6" x2="1523.8" y2="346.3"><stop offset="0%" stop-color="#ffffff"/><stop offset="18.2%" stop-color="#ffeae7"/><stop offset="36.4%" stop-color="#ffd8d2"/><stop offset="59.2%" stop-color="#ffc4bb"/><stop offset="84.2%" stop-color="#ffb2a6"/><stop offset="111.6%" stop-color="#ffa192"/></linearGradient><linearGradient id="i4" gradientUnits="userSpaceOnUse" x1="1414.2" y1="369.6" x2="1521.9" y2="338.7"><stop offset="0%" stop-color="#ffffff"/><stop offset="18.2%" stop-color="#ffebe7"/><stop offset="36.4%" stop-color="#ffdad2"/><stop offset="59.2%" stop-color="#ffc8bc"/><stop offset="84.2%" stop-color="#ffb7a6"/><stop offset="111.6%" stop-color="#ffa792"/></linearGradient><linearGradient id="i5" gradientUnits="userSpaceOnUse" x1="1414.2" y1="369.6" x2="1519.4" y2="331.3"><stop offset="0%" stop-color="#ffffff"/><stop offset="18.2%" stop-color="#ffede7"/><stop offset="36.4%" stop-color="#ffddd3"/><stop offset="59.2%" stop-color="#ffccbc"/><stop offset="84.2%" stop-color="#ffbca7"/><stop offset="111.6%" stop-color="#ffac93"/></linearGradient><linearGradient id="i6" gradientUnits="userSpaceOnUse" x1="1414.2" y1="369.6" x2="1516.5" y2="324"><stop offset="0%" stop-color="#ffffff"/><stop offset="18.2%" stop-color="#ffeee8"/><stop offset="36.4%" stop-color="#ffe0d3"/><stop offset="59.2%" stop-color="#ffd0bd"/><stop offset="84.2%" stop-color="#ffc1a8"/><stop offset="111.6%" stop-color="#ffb394"/></linearGradient><linearGradient id="i7" gradientUnits="userSpaceOnUse" x1="1414.2" y1="369.6" x2="1513.1" y2="317"><stop offset="0%" stop-color="#ffffff"/><stop offset="18.2%" stop-color="#fff0e8"/><stop offset="36.4%" stop-color="#ffe3d4"/><stop offset="59.2%" stop-color="#ffd4be"/><stop offset="84.2%" stop-color="#ffc6a9"/><stop offset="111.6%" stop-color="#ffb995"/></linearGradient><linearGradient id="i8" gradientUnits="userSpaceOnUse" x1="1414.2" y1="369.6" x2="1509.2" y2="310.2"><stop offset="0%" stop-color="#ffffff"/><stop offset="18.2%" stop-color="#fff2e9"/><stop offset="36.4%" stop-color="#ffe6d6"/><stop offset="59.2%" stop-color="#ffd9c0"/><stop offset="84.2%" stop-color="#ffccab"/><stop offset="111.6%" stop-color="#ffc097"/></linearGradient><linearGradient id="i9" gradientUnits="userSpaceOnUse" x1="1414.2" y1="369.6" x2="1504.8" y2="303.8"><stop offset="0%" stop-color="#ffffff"/><stop offset="18.2%" stop-color="#fff4ea"/><stop offset="36.4%" stop-color="#ffe9d7"/><stop offset="59.2%" stop-color="#ffdec2"/><stop offset="84.2%" stop-color="#ffd3ad"/><stop offset="111.6%" stop-color="#ffc899"/></linearGradient><linearGradient id="i10" gradientUnits="userSpaceOnUse" x1="1414.2" y1="369.6" x2="1500" y2="297.6"><stop offset="0%" stop-color="#ffffff"/><stop offset="18.2%" stop-color="#fff5eb"/><stop offset="36.4%" stop-color="#ffedd9"/><stop offset="59.2%" stop-color="#ffe3c4"/><stop offset="84.2%" stop-color="#ffdaaf"/><stop offset="111.6%" stop-color="#ffd09b"/></linearGradient><linearGradient id="i11" gradientUnits="userSpaceOnUse" x1="1414.2" y1="369.6" x2="1494.8" y2="291.8"><stop offset="0%" stop-color="#ffffff"/><stop offset="18.2%" stop-color="#fff7ec"/><stop offset="36.4%" stop-color="#fff0da"/><stop offset="59.2%" stop-color="#ffe9c6"/><stop offset="84.2%" stop-color="#ffe1b2"/><stop offset="111.6%" stop-color="#ffd99e"/></linearGradient><linearGradient id="i12" gradientUnits="userSpaceOnUse" x1="1414.2" y1="369.6" x2="1489.1" y2="286.4"><stop offset="0%" stop-color="#ffffff"/><stop offset="18.2%" stop-color="#fff9ed"/><stop offset="36.4%" stop-color="#fff4dc"/><stop offset="59.2%" stop-color="#ffeec9"/><stop offset="84.2%" stop-color="#ffe8b6"/><stop offset="111.6%" stop-color="#ffe2a2"/></linearGradient><linearGradient id="i13" gradientUnits="userSpaceOnUse" x1="1414.2" y1="369.6" x2="1483.2" y2="281.3"><stop offset="0%" stop-color="#ffffff"/><stop offset="18.2%" stop-color="#fffbee"/><stop offset="36.4%" stop-color="#fff8df"/><stop offset="59.2%" stop-color="#fff4cc"/><stop offset="84.2%" stop-color="#fff0b9"/><stop offset="111.6%" stop-color="#ffeca6"/></linearGradient><linearGradient id="i14" gradientUnits="userSpaceOnUse" x1="1414.2" y1="369.6" x2="1476.8" y2="276.7"><stop offset="0%" stop-color="#ffffff"/><stop offset="18.2%" stop-color="#fffef0"/><stop offset="36.4%" stop-color="#fffce1"/><stop offset="59.2%" stop-color="#fffad0"/><stop offset="84.2%" stop-color="#fff9be"/><stop offset="111.6%" stop-color="#fff7ab"/></linearGradient><linearGradient id="i15" gradientUnits="userSpaceOnUse" x1="1414.2" y1="369.6" x2="1470.2" y2="272.6"><stop offset="0%" stop-color="#ffffff"/><stop offset="18.2%" stop-color="#fefff0"/><stop offset="36.4%" stop-color="#feffe2"/><stop offset="59.2%" stop-color="#fdffd2"/><stop offset="84.2%" stop-color="#fcffc1"/><stop offset="111.6%" stop-color="#fcffaf"/></linearGradient><linearGradient id="i16" gradientUnits="userSpaceOnUse" x1="1414.2" y1="369.6" x2="1463.3" y2="268.9"><stop offset="0%" stop-color="#ffffff"/><stop offset="18.2%" stop-color="#fcfff0"/><stop offset="36.4%" stop-color="#faffe2"/><stop offset="59.2%" stop-color="#f7ffd1"/><stop offset="84.2%" stop-color="#f4ffbf"/><stop offset="111.6%" stop-color="#f0ffad"/></linearGradient><linearGradient id="i17" gradientUnits="userSpaceOnUse" x1="1414.2" y1="369.6" x2="1456.2" y2="265.8"><stop offset="0%" stop-color="#ffffff"/><stop offset="18.2%" stop-color="#faffef"/><stop offset="36.4%" stop-color="#f6ffe1"/><stop offset="59.2%" stop-color="#f0ffcf"/><stop offset="84.2%" stop-color="#ebffbe"/><stop offset="111.6%" stop-color="#e6ffab"/></linearGradient><linearGradient id="i18" gradientUnits="userSpaceOnUse" x1="1414.2" y1="369.6" x2="1448.8" y2="263.1"><stop offset="0%" stop-color="#ffffff"/><stop offset="18.2%" stop-color="#f8ffef"/><stop offset="36.4%" stop-color="#f2ffe0"/><stop offset="59.2%" stop-color="#eaffcf"/><stop offset="84.2%" stop-color="#e3ffbd"/><stop offset="111.6%" stop-color="#dbffaa"/></linearGradient><linearGradient id="i19" gradientUnits="userSpaceOnUse" x1="1414.2" y1="369.6" x2="1441.3" y2="260.9"><stop offset="0%" stop-color="#ffffff"/><stop offset="18.2%" stop-color="#f6ffef"/><stop offset="36.4%" stop-color="#eeffe0"/><stop offset="59.2%" stop-color="#e4ffce"/><stop offset="84.2%" stop-color="#dbffbc"/><stop offset="111.6%" stop-color="#d1ffaa"/></linearGradient><linearGradient id="i20" gradientUnits="userSpaceOnUse" x1="1414.2" y1="369.6" x2="1433.6" y2="259.3"><stop offset="0%" stop-color="#ffffff"/><stop offset="18.2%" stop-color="#f4ffef"/><stop offset="36.4%" stop-color="#eaffdf"/><stop offset="59.2%" stop-color="#dfffcd"/><stop offset="84.2%" stop-color="#d3ffbb"/><stop offset="111.6%" stop-color="#c7ffa9"/></linearGradient><linearGradient id="i21" gradientUnits="userSpaceOnUse" x1="1414.2" y1="369.6" x2="1425.9" y2="258.2"><stop offset="0%" stop-color="#ffffff"/><stop offset="18.2%" stop-color="#f2ffee"/><stop offset="36.4%" stop-color="#e7ffdf"/><stop offset="59.2%" stop-color="#d9ffcd"/><stop offset="84.2%" stop-color="#cbffbb"/><stop offset="111.6%" stop-color="#beffa9"/></linearGradient><linearGradient id="i22" gradientUnits="userSpaceOnUse" x1="1414.2" y1="369.6" x2="1418.1" y2="257.7"><stop offset="0%" stop-color="#ffffff"/><stop offset="18.2%" stop-color="#f0ffee"/><stop offset="36.4%" stop-color="#e3ffdf"/><stop offset="59.2%" stop-color="#d4ffcd"/><stop offset="84.2%" stop-color="#c4ffbc"/><stop offset="111.6%" stop-color="#b5ffaa"/></linearGradient><linearGradient id="i23" gradientUnits="userSpaceOnUse" x1="1414.2" y1="369.6" x2="1410.3" y2="257.7"><stop offset="0%" stop-color="#ffffff"/><stop offset="18.2%" stop-color="#efffee"/><stop offset="36.4%" stop-color="#e0ffdf"/><stop offset="59.2%" stop-color="#ceffce"/><stop offset="84.2%" stop-color="#bdffbc"/><stop offset="111.6%" stop-color="#acffab"/></linearGradient><linearGradient id="i24" gradientUnits="userSpaceOnUse" x1="1414.2" y1="369.6" x2="1402.5" y2="258.2"><stop offset="0%" stop-color="#ffffff"/><stop offset="18.2%" stop-color="#edffef"/><stop offset="36.4%" stop-color="#ddffdf"/><stop offset="59.2%" stop-color="#caffce"/><stop offset="84.2%" stop-color="#b7ffbd"/><stop offset="111.6%" stop-color="#a4ffac"/></linearGradient><linearGradient id="i25" gradientUnits="userSpaceOnUse" x1="1414.2" y1="369.6" x2="1394.8" y2="259.3"><stop offset="0%" stop-color="#ffffff"/><stop offset="18.2%" stop-color="#ebffef"/><stop offset="36.4%" stop-color="#d9ffe0"/><stop offset="59.2%" stop-color="#c5ffcf"/><stop offset="84.2%" stop-color="#b0ffbe"/><stop offset="111.6%" stop-color="#9cffad"/></linearGradient><linearGradient id="i26" gradientUnits="userSpaceOnUse" x1="1414.2" y1="369.6" x2="1387.1" y2="260.9"><stop offset="0%" stop-color="#ffffff"/><stop offset="18.2%" stop-color="#eaffef"/><stop offset="36.4%" stop-color="#d7ffe0"/><stop offset="59.2%" stop-color="#c1ffcf"/><stop offset="84.2%" stop-color="#aaffbf"/><stop offset="111.6%" stop-color="#95ffae"/></linearGradient><linearGradient id="i27" gradientUnits="userSpaceOnUse" x1="1414.2" y1="369.6" x2="1379.6" y2="263.1"><stop offset="0%" stop-color="#ffffff"/><stop offset="18.2%" stop-color="#e9ffef"/><stop offset="36.4%" stop-color="#d4ffe1"/><stop offset="59.2%" stop-color="#bcffd1"/><stop offset="84.2%" stop-color="#a5ffc0"/><stop offset="111.6%" stop-color="#8effb0"/></linearGradient><linearGradient id="i28" gradientUnits="userSpaceOnUse" x1="1414.2" y1="369.6" x2="1372.2" y2="265.8"><stop offset="0%" stop-color="#ffffff"/><stop offset="18.2%" stop-color="#e7fff0"/><stop offset="36.4%" stop-color="#d1ffe2"/><stop offset="59.2%" stop-color="#b9ffd2"/><stop offset="84.2%" stop-color="#a0ffc2"/><stop offset="111.6%" stop-color="#87ffb3"/></linearGradient><linearGradient id="i29" gradientUnits="userSpaceOnUse" x1="1414.2" y1="369.6" x2="1365.1" y2="268.9"><stop offset="0%" stop-color="#ffffff"/><stop offset="18.2%" stop-color="#e6fff0"/><stop offset="36.4%" stop-color="#cfffe3"/><stop offset="59.2%" stop-color="#b5ffd3"/><stop offset="84.2%" stop-color="#9bffc4"/><stop offset="111.6%" stop-color="#81ffb5"/></linearGradient><linearGradient id="i30" gradientUnits="userSpaceOnUse" x1="1414.2" y1="369.6" x2="1358.2" y2="272.6"><stop offset="0%" stop-color="#ffffff"/><stop offset="18.2%" stop-color="#e5fff1"/><stop offset="36.4%" stop-color="#cdffe4"/><stop offset="59.2%" stop-color="#b2ffd5"/><stop offset="84.2%" stop-color="#97ffc6"/><stop offset="111.6%" stop-color="#7cffb8"/></linearGradient><linearGradient id="i31" gradientUnits="userSpaceOnUse" x1="1414.2" y1="369.6" x2="1351.6" y2="276.7"><stop offset="0%" stop-color="#ffffff"/><stop offset="18.2%" stop-color="#e4fff1"/><stop offset="36.4%" stop-color="#cbffe5"/><stop offset="59.2%" stop-color="#afffd7"/><stop offset="84.2%" stop-color="#93ffc9"/><stop offset="111.6%" stop-color="#77ffbb"/></linearGradient><linearGradient id="i32" gradientUnits="userSpaceOnUse" x1="1414.2" y1="369.6" x2="1345.2" y2="281.3"><stop offset="0%" stop-color="#ffffff"/><stop offset="18.2%" stop-color="#e3fff2"/><stop offset="36.4%" stop-color="#caffe6"/><stop offset="59.2%" stop-color="#acffd9"/><stop offset="84.2%" stop-color="#8fffcb"/><stop offset="111.6%" stop-color="#72ffbe"/></linearGradient><linearGradient id="i33" gradientUnits="userSpaceOnUse" x1="1414.2" y1="369.6" x2="1339.3" y2="286.4"><stop offset="0%" stop-color="#ffffff"/><stop offset="18.2%" stop-color="#e3fff3"/><stop offset="36.4%" stop-color="#c8ffe7"/><stop offset="59.2%" stop-color="#aaffdb"/><stop offset="84.2%" stop-color="#8cffce"/><stop offset="111.6%" stop-color="#6effc2"/></linearGradient><linearGradient id="i34" gradientUnits="userSpaceOnUse" x1="1414.2" y1="369.6" x2="1333.6" y2="291.8"><stop offset="0%" stop-color="#ffffff"/><stop offset="18.2%" stop-color="#e2fff3"/><stop offset="36.4%" stop-color="#c7ffe9"/><stop offset="59.2%" stop-color="#a8ffdd"/><stop offset="84.2%" stop-color="#89ffd1"/><stop offset="111.6%" stop-color="#6affc5"/></linearGradient><linearGradient id="i35" gradientUnits="userSpaceOnUse" x1="1414.2" y1="369.6" x2="1328.4" y2="297.6"><stop offset="0%" stop-color="#ffffff"/><stop offset="18.2%" stop-color="#e2fff4"/><stop offset="36.4%" stop-color="#c6ffeb"/><stop offset="59.2%" stop-color="#a7ffdf"/><stop offset="84.2%" stop-color="#87ffd4"/><stop offset="111.6%" stop-color="#67ffc9"/></linearGradient><linearGradient id="i36" gradientUnits="userSpaceOnUse" x1="1414.2" y1="369.6" x2="1323.6" y2="303.8"><stop offset="0%" stop-color="#ffffff"/><stop offset="18.2%" stop-color="#e1fff5"/><stop offset="36.4%" stop-color="#c6ffec"/><stop offset="59.2%" stop-color="#a6ffe2"/><stop offset="84.2%" stop-color="#86ffd8"/><stop offset="111.6%" stop-color="#65ffce"/></linearGradient><linearGradient id="i37" gradientUnits="userSpaceOnUse" x1="1414.2" y1="369.6" x2="1319.2" y2="310.2"><stop offset="0%" stop-color="#ffffff"/><stop offset="18.2%" stop-color="#e1fff6"/><stop offset="36.4%" stop-color="#c5ffee"/><stop offset="59.2%" stop-color="#a5ffe5"/><stop offset="84.2%" stop-color="#84ffdb"/><stop offset="111.6%" stop-color="#63ffd2"/></linearGradient><linearGradient id="i38" gradientUnits="userSpaceOnUse" x1="1414.2" y1="369.6" x2="1315.3" y2="317"><stop offset="0%" stop-color="#ffffff"/><stop offset="18.2%" stop-color="#e1fff7"/><stop offset="36.4%" stop-color="#c5fff0"/><stop offset="59.2%" stop-color="#a5ffe8"/><stop offset="84.2%" stop-color="#84ffdf"/><stop offset="111.6%" stop-color="#62ffd7"/></linearGradient><linearGradient id="i39" gradientUnits="userSpaceOnUse" x1="1414.2" y1="369.6" x2="1311.9" y2="324"><stop offset="0%" stop-color="#ffffff"/><stop offset="18.2%" stop-color="#e1fff8"/><stop offset="36.4%" stop-color="#c5fff2"/><stop offset="59.2%" stop-color="#a5ffeb"/><stop offset="84.2%" stop-color="#83ffe3"/><stop offset="111.6%" stop-color="#61ffdc"/></linearGradient><linearGradient id="i40" gradientUnits="userSpaceOnUse" x1="1414.2" y1="369.6" x2="1309" y2="331.3"><stop offset="0%" stop-color="#ffffff"/><stop offset="18.2%" stop-color="#e2fff9"/><stop offset="36.4%" stop-color="#c6fff4"/><stop offset="59.2%" stop-color="#a5ffee"/><stop offset="84.2%" stop-color="#84ffe7"/><stop offset="111.6%" stop-color="#61ffe1"/></linearGradient><linearGradient id="i41" gradientUnits="userSpaceOnUse" x1="1414.2" y1="369.6" x2="1306.5" y2="338.7"><stop offset="0%" stop-color="#ffffff"/><stop offset="18.2%" stop-color="#e2fffa"/><stop offset="36.4%" stop-color="#c6fff6"/><stop offset="59.2%" stop-color="#a6fff1"/><stop offset="84.2%" stop-color="#85ffec"/><stop offset="111.6%" stop-color="#62ffe7"/></linearGradient><linearGradient id="i42" gradientUnits="userSpaceOnUse" x1="1414.2" y1="369.6" x2="1304.6" y2="346.3"><stop offset="0%" stop-color="#ffffff"/><stop offset="18.2%" stop-color="#e2fffb"/><stop offset="36.4%" stop-color="#c7fff8"/><stop offset="59.2%" stop-color="#a7fff4"/><stop offset="84.2%" stop-color="#86fff0"/><stop offset="111.6%" stop-color="#63ffec"/></linearGradient><linearGradient id="i43" gradientUnits="userSpaceOnUse" x1="1414.2" y1="369.6" x2="1303.3" y2="354"><stop offset="0%" stop-color="#ffffff"/><stop offset="18.2%" stop-color="#e3fffd"/><stop offset="36.4%" stop-color="#c9fffa"/><stop offset="59.2%" stop-color="#a9fff8"/><stop offset="84.2%" stop-color="#88fff5"/><stop offset="111.6%" stop-color="#66fff2"/></linearGradient><linearGradient id="i44" gradientUnits="userSpaceOnUse" x1="1414.2" y1="369.6" x2="1302.5" y2="361.8"><stop offset="0%" stop-color="#ffffff"/><stop offset="18.2%" stop-color="#e4fffe"/><stop offset="36.4%" stop-color="#cafffd"/><stop offset="59.2%" stop-color="#abfffb"/><stop offset="84.2%" stop-color="#8afffa"/><stop offset="111.6%" stop-color="#68fff8"/></linearGradient><linearGradient id="i45" gradientUnits="userSpaceOnUse" x1="1414.2" y1="369.6" x2="1302.2" y2="369.6"><stop offset="0%" stop-color="#ffffff"/><stop offset="18.2%" stop-color="#e5ffff"/><stop offset="36.4%" stop-color="#ccffff"/><stop offset="59.2%" stop-color="#aeffff"/><stop offset="84.2%" stop-color="#8effff"/><stop offset="111.6%" stop-color="#6cffff"/></linearGradient><linearGradient id="i46" gradientUnits="userSpaceOnUse" x1="1414.2" y1="369.6" x2="1302.5" y2="377.4"><stop offset="0%" stop-color="#ffffff"/><stop offset="18.2%" stop-color="#e5feff"/><stop offset="36.4%" stop-color="#ccfdff"/><stop offset="59.2%" stop-color="#aefcff"/><stop offset="84.2%" stop-color="#8ffaff"/><stop offset="111.6%" stop-color="#6ef9ff"/></linearGradient><linearGradient id="i47" gradientUnits="userSpaceOnUse" x1="1414.2" y1="369.6" x2="1303.3" y2="385.2"><stop offset="0%" stop-color="#ffffff"/><stop offset="18.2%" stop-color="#e5fdff"/><stop offset="36.4%" stop-color="#ccfbff"/><stop offset="59.2%" stop-color="#aff8ff"/><stop offset="84.2%" stop-color="#90f5ff"/><stop offset="111.6%" stop-color="#70f3ff"/></linearGradient><linearGradient id="i48" gradientUnits="userSpaceOnUse" x1="1414.2" y1="369.6" x2="1304.6" y2="392.9"><stop offset="0%" stop-color="#ffffff"/><stop offset="18.2%" stop-color="#e5fcff"/><stop offset="36.4%" stop-color="#cdf8ff"/><stop offset="59.2%" stop-color="#b0f4ff"/><stop offset="84.2%" stop-color="#92f1ff"/><stop offset="111.6%" stop-color="#73edff"/></linearGradient><linearGradient id="i49" gradientUnits="userSpaceOnUse" x1="1414.2" y1="369.6" x2="1306.5" y2="400.5"><stop offset="0%" stop-color="#ffffff"/><stop offset="18.2%" stop-color="#e6faff"/><stop offset="36.4%" stop-color="#cef6ff"/><stop offset="59.2%" stop-color="#b2f1ff"/><stop offset="84.2%" stop-color="#94ecff"/><stop offset="111.6%" stop-color="#76e7ff"/></linearGradient><linearGradient id="i50" gradientUnits="userSpaceOnUse" x1="1414.2" y1="369.6" x2="1309" y2="407.9"><stop offset="0%" stop-color="#ffffff"/><stop offset="18.2%" stop-color="#e6f9ff"/><stop offset="36.4%" stop-color="#cff4ff"/><stop offset="59.2%" stop-color="#b3eeff"/><stop offset="84.2%" stop-color="#97e7ff"/><stop offset="111.6%" stop-color="#7ae1ff"/></linearGradient><linearGradient id="i51" gradientUnits="userSpaceOnUse" x1="1414.2" y1="369.6" x2="1311.9" y2="415.2"><stop offset="0%" stop-color="#ffffff"/><stop offset="18.2%" stop-color="#e7f8ff"/><stop offset="36.4%" stop-color="#d0f2ff"/><stop offset="59.2%" stop-color="#b6ebff"/><stop offset="84.2%" stop-color="#9ae3ff"/><stop offset="111.6%" stop-color="#7edbff"/></linearGradient><linearGradient id="i52" gradientUnits="userSpaceOnUse" x1="1414.2" y1="369.6" x2="1315.3" y2="422.2"><stop offset="0%" stop-color="#ffffff"/><stop offset="18.2%" stop-color="#e8f7ff"/><stop offset="36.4%" stop-color="#d2f0ff"/><stop offset="59.2%" stop-color="#b8e7ff"/><stop offset="84.2%" stop-color="#9edfff"/><stop offset="111.6%" stop-color="#83d6ff"/></linearGradient><linearGradient id="i53" gradientUnits="userSpaceOnUse" x1="1414.2" y1="369.6" x2="1319.2" y2="429"><stop offset="0%" stop-color="#ffffff"/><stop offset="18.2%" stop-color="#e9f6ff"/><stop offset="36.4%" stop-color="#d4eeff"/><stop offset="59.2%" stop-color="#bbe4ff"/><stop offset="84.2%" stop-color="#a2dbff"/><stop offset="111.6%" stop-color="#88d1ff"/></linearGradient><linearGradient id="i54" gradientUnits="userSpaceOnUse" x1="1414.2" y1="369.6" x2="1323.6" y2="435.4"><stop offset="0%" stop-color="#ffffff"/><stop offset="18.2%" stop-color="#eaf5ff"/><stop offset="36.4%" stop-color="#d5ecff"/><stop offset="59.2%" stop-color="#bee2ff"/><stop offset="84.2%" stop-color="#a6d7ff"/><stop offset="111.6%" stop-color="#8eccff"/></linearGradient><linearGradient id="i55" gradientUnits="userSpaceOnUse" x1="1414.2" y1="369.6" x2="1328.4" y2="441.6"><stop offset="0%" stop-color="#ffffff"/><stop offset="18.2%" stop-color="#ebf4ff"/><stop offset="36.4%" stop-color="#d8eaff"/><stop offset="59.2%" stop-color="#c1dfff"/><stop offset="84.2%" stop-color="#abd3ff"/><stop offset="111.6%" stop-color="#94c7ff"/></linearGradient><linearGradient id="i56" gradientUnits="userSpaceOnUse" x1="1414.2" y1="369.6" x2="1333.6" y2="447.4"><stop offset="0%" stop-color="#ffffff"/><stop offset="18.2%" stop-color="#ecf3ff"/><stop offset="36.4%" stop-color="#dae9ff"/><stop offset="59.2%" stop-color="#c5dcff"/><stop offset="84.2%" stop-color="#afd0ff"/><stop offset="111.6%" stop-color="#9ac3ff"/></linearGradient><linearGradient id="i57" gradientUnits="userSpaceOnUse" x1="1414.2" y1="369.6" x2="1339.3" y2="452.8"><stop offset="0%" stop-color="#ffffff"/><stop offset="18.2%" stop-color="#edf3ff"/><stop offset="36.4%" stop-color="#dce7ff"/><stop offset="59.2%" stop-color="#c9daff"/><stop offset="84.2%" stop-color="#b5ccff"/><stop offset="111.6%" stop-color="#a1bfff"/></linearGradient><linearGradient id="i58" gradientUnits="userSpaceOnUse" x1="1414.2" y1="369.6" x2="1345.2" y2="457.9"><stop offset="0%" stop-color="#ffffff"/><stop offset="18.2%" stop-color="#eef2ff"/><stop offset="36.4%" stop-color="#dfe6ff"/><stop offset="59.2%" stop-color="#cdd7ff"/><stop offset="84.2%" stop-color="#bac9ff"/><stop offset="111.6%" stop-color="#a8bbff"/></linearGradient><linearGradient id="i59" gradientUnits="userSpaceOnUse" x1="1414.2" y1="369.6" x2="1351.6" y2="462.5"><stop offset="0%" stop-color="#ffffff"/><stop offset="18.2%" stop-color="#f0f1ff"/><stop offset="36.4%" stop-color="#e1e4ff"/><stop offset="59.2%" stop-color="#d1d5ff"/><stop offset="84.2%" stop-color="#c0c6ff"/><stop offset="111.6%" stop-color="#afb7ff"/></linearGradient><linearGradient id="i60" gradientUnits="userSpaceOnUse" x1="1414.2" y1="369.6" x2="1358.2" y2="466.6"><stop offset="0%" stop-color="#ffffff"/><stop offset="18.2%" stop-color="#f1f1ff"/><stop offset="36.4%" stop-color="#e4e3ff"/><stop offset="59.2%" stop-color="#d5d3ff"/><stop offset="84.2%" stop-color="#c6c4ff"/><stop offset="111.6%" stop-color="#b7b4ff"/></linearGradient><linearGradient id="i61" gradientUnits="userSpaceOnUse" x1="1414.2" y1="369.6" x2="1365.1" y2="470.3"><stop offset="0%" stop-color="#ffffff"/><stop offset="18.2%" stop-color="#f3f0ff"/><stop offset="36.4%" stop-color="#e7e2ff"/><stop offset="59.2%" stop-color="#dad2ff"/><stop offset="84.2%" stop-color="#ccc1ff"/><stop offset="111.6%" stop-color="#bfb1ff"/></linearGradient><linearGradient id="i62" gradientUnits="userSpaceOnUse" x1="1414.2" y1="369.6" x2="1372.2" y2="473.4"><stop offset="0%" stop-color="#ffffff"/><stop offset="18.2%" stop-color="#f4f0ff"/><stop offset="36.4%" stop-color="#eae1ff"/><stop offset="59.2%" stop-color="#dfd0ff"/><stop offset="84.2%" stop-color="#d3bfff"/><stop offset="111.6%" stop-color="#c7aeff"/></linearGradient><linearGradient id="i63" gradientUnits="userSpaceOnUse" x1="1414.2" y1="369.6" x2="1379.6" y2="476.1"><stop offset="0%" stop-color="#ffffff"/><stop offset="18.2%" stop-color="#f6efff"/><stop offset="36.4%" stop-color="#eee0ff"/><stop offset="59.2%" stop-color="#e4cfff"/><stop offset="84.2%" stop-color="#dabdff"/><stop offset="111.6%" stop-color="#d0abff"/></linearGradient><linearGradient id="i64" gradientUnits="userSpaceOnUse" x1="1414.2" y1="369.6" x2="1387.1" y2="478.3"><stop offset="0%" stop-color="#ffffff"/><stop offset="18.2%" stop-color="#f8efff"/><stop offset="36.4%" stop-color="#f1e0ff"/><stop offset="59.2%" stop-color="#e9ceff"/><stop offset="84.2%" stop-color="#e1bbff"/><stop offset="111.6%" stop-color="#d8a9ff"/></linearGradient><linearGradient id="i65" gradientUnits="userSpaceOnUse" x1="1414.2" y1="369.6" x2="1394.8" y2="479.9"><stop offset="0%" stop-color="#ffffff"/><stop offset="18.2%" stop-color="#f9efff"/><stop offset="36.4%" stop-color="#f4dfff"/><stop offset="59.2%" stop-color="#eecdff"/><stop offset="84.2%" stop-color="#e8baff"/><stop offset="111.6%" stop-color="#e1a7ff"/></linearGradient><linearGradient id="i66" gradientUnits="userSpaceOnUse" x1="1414.2" y1="369.6" x2="1402.5" y2="481"><stop offset="0%" stop-color="#ffffff"/><stop offset="18.2%" stop-color="#fbeeff"/><stop offset="36.4%" stop-color="#f7dfff"/><stop offset="59.2%" stop-color="#f3ccff"/><stop offset="84.2%" stop-color="#efb9ff"/><stop offset="111.6%" stop-color="#eba6ff"/></linearGradient><linearGradient id="i67" gradientUnits="userSpaceOnUse" x1="1414.2" y1="369.6" x2="1410.3" y2="481.5"><stop offset="0%" stop-color="#ffffff"/><stop offset="18.2%" stop-color="#fdeeff"/><stop offset="36.4%" stop-color="#fbdeff"/><stop offset="59.2%" stop-color="#f9cbff"/><stop offset="84.2%" stop-color="#f6b8ff"/><stop offset="111.6%" stop-color="#f4a4ff"/></linearGradient><linearGradient id="i68" gradientUnits="userSpaceOnUse" x1="1414.2" y1="369.6" x2="1418.1" y2="481.5"><stop offset="0%" stop-color="#ffffff"/><stop offset="18.2%" stop-color="#ffeeff"/><stop offset="36.4%" stop-color="#fedeff"/><stop offset="59.2%" stop-color="#fecbff"/><stop offset="84.2%" stop-color="#feb8ff"/><stop offset="111.6%" stop-color="#fda4ff"/></linearGradient><linearGradient id="i69" gradientUnits="userSpaceOnUse" x1="1414.2" y1="369.6" x2="1425.9" y2="481"><stop offset="0%" stop-color="#ffffff"/><stop offset="18.2%" stop-color="#ffedfe"/><stop offset="36.4%" stop-color="#ffdcfc"/><stop offset="59.2%" stop-color="#ffc8fb"/><stop offset="84.2%" stop-color="#ffb3f9"/><stop offset="111.6%" stop-color="#ff9ef7"/></linearGradient><linearGradient id="i70" gradientUnits="userSpaceOnUse" x1="1414.2" y1="369.6" x2="1433.6" y2="479.9"><stop offset="0%" stop-color="#ffffff"/><stop offset="18.2%" stop-color="#ffebfc"/><stop offset="36.4%" stop-color="#ffd9f9"/><stop offset="59.2%" stop-color="#ffc4f5"/><stop offset="84.2%" stop-color="#ffaef2"/><stop offset="111.6%" stop-color="#ff98ee"/></linearGradient><linearGradient id="i71" gradientUnits="userSpaceOnUse" x1="1414.2" y1="369.6" x2="1441.3" y2="478.3"><stop offset="0%" stop-color="#ffffff"/><stop offset="18.2%" stop-color="#ffeafa"/><stop offset="36.4%" stop-color="#ffd6f5"/><stop offset="59.2%" stop-color="#ffc0f0"/><stop offset="84.2%" stop-color="#ffaaeb"/><stop offset="111.6%" stop-color="#ff93e6"/></linearGradient><linearGradient id="i72" gradientUnits="userSpaceOnUse" x1="1414.2" y1="369.6" x2="1448.8" y2="476.1"><stop offset="0%" stop-color="#ffffff"/><stop offset="18.2%" stop-color="#ffe9f8"/><stop offset="36.4%" stop-color="#ffd4f2"/><stop offset="59.2%" stop-color="#ffbdeb"/><stop offset="84.2%" stop-color="#ffa6e5"/><stop offset="111.6%" stop-color="#ff8fde"/></linearGradient><linearGradient id="i73" gradientUnits="userSpaceOnUse" x1="1414.2" y1="369.6" x2="1456.2" y2="473.4"><stop offset="0%" stop-color="#ffffff"/><stop offset="18.2%" stop-color="#ffe7f7"/><stop offset="36.4%" stop-color="#ffd2ef"/><stop offset="59.2%" stop-color="#ffbae7"/><stop offset="84.2%" stop-color="#ffa2df"/><stop offset="111.6%" stop-color="#ff8bd7"/></linearGradient><linearGradient id="i74" gradientUnits="userSpaceOnUse" x1="1414.2" y1="369.6" x2="1463.3" y2="470.3"><stop offset="0%" stop-color="#ffffff"/><stop offset="18.2%" stop-color="#ffe6f5"/><stop offset="36.4%" stop-color="#ffd0ec"/><stop offset="59.2%" stop-color="#ffb7e3"/><stop offset="84.2%" stop-color="#ff9fd9"/><stop offset="111.6%" stop-color="#ff88d0"/></linearGradient><linearGradient id="i75" gradientUnits="userSpaceOnUse" x1="1414.2" y1="369.6" x2="1470.2" y2="466.6"><stop offset="0%" stop-color="#ffffff"/><stop offset="18.2%" stop-color="#ffe5f4"/><stop offset="36.4%" stop-color="#ffcfe9"/><stop offset="59.2%" stop-color="#ffb5de"/><stop offset="84.2%" stop-color="#ff9dd4"/><stop offset="111.6%" stop-color="#ff85ca"/></linearGradient><linearGradient id="i76" gradientUnits="userSpaceOnUse" x1="1414.2" y1="369.6" x2="1476.8" y2="462.5"><stop offset="0%" stop-color="#ffffff"/><stop offset="18.2%" stop-color="#ffe5f2"/><stop offset="36.4%" stop-color="#ffcde7"/><stop offset="59.2%" stop-color="#ffb4da"/><stop offset="84.2%" stop-color="#ff9bcf"/><stop offset="111.6%" stop-color="#ff83c4"/></linearGradient><linearGradient id="i77" gradientUnits="userSpaceOnUse" x1="1414.2" y1="369.6" x2="1483.2" y2="457.9"><stop offset="0%" stop-color="#ffffff"/><stop offset="18.2%" stop-color="#ffe4f1"/><stop offset="36.4%" stop-color="#ffcce4"/><stop offset="59.2%" stop-color="#ffb2d7"/><stop offset="84.2%" stop-color="#ff99ca"/><stop offset="111.6%" stop-color="#ff82be"/></linearGradient><linearGradient id="i78" gradientUnits="userSpaceOnUse" x1="1414.2" y1="369.6" x2="1489.1" y2="452.8"><stop offset="0%" stop-color="#ffffff"/><stop offset="18.2%" stop-color="#ffe3ef"/><stop offset="36.4%" stop-color="#ffcbe2"/><stop offset="59.2%" stop-color="#ffb1d3"/><stop offset="84.2%" stop-color="#ff98c5"/><stop offset="111.6%" stop-color="#ff81b9"/></linearGradient><linearGradient id="i79" gradientUnits="userSpaceOnUse" x1="1414.2" y1="369.6" x2="1494.8" y2="447.4"><stop offset="0%" stop-color="#ffffff"/><stop offset="18.2%" stop-color="#ffe3ee"/><stop offset="36.4%" stop-color="#ffcbe0"/><stop offset="59.2%" stop-color="#ffb0d0"/><stop offset="84.2%" stop-color="#ff97c1"/><stop offset="111.6%" stop-color="#ff80b4"/></linearGradient><linearGradient id="i80" gradientUnits="userSpaceOnUse" x1="1414.2" y1="369.6" x2="1500" y2="441.6"><stop offset="0%" stop-color="#ffffff"/><stop offset="18.2%" stop-color="#ffe3ed"/><stop offset="36.4%" stop-color="#ffcade"/><stop offset="59.2%" stop-color="#ffb0cd"/><stop offset="84.2%" stop-color="#ff97be"/><stop offset="111.6%" stop-color="#ff80af"/></linearGradient><linearGradient id="i81" gradientUnits="userSpaceOnUse" x1="1414.2" y1="369.6" x2="1504.8" y2="435.4"><stop offset="0%" stop-color="#ffffff"/><stop offset="18.2%" stop-color="#ffe2ec"/><stop offset="36.4%" stop-color="#ffcadc"/><stop offset="59.2%" stop-color="#ffb0ca"/><stop offset="84.2%" stop-color="#ff97ba"/><stop offset="111.6%" stop-color="#ff80ab"/></linearGradient><linearGradient id="i82" gradientUnits="userSpaceOnUse" x1="1414.2" y1="369.6" x2="1509.2" y2="429"><stop offset="0%" stop-color="#ffffff"/><stop offset="18.2%" stop-color="#ffe2eb"/><stop offset="36.4%" stop-color="#ffcada"/><stop offset="59.2%" stop-color="#ffb0c8"/><stop offset="84.2%" stop-color="#ff97b7"/><stop offset="111.6%" stop-color="#ff81a7"/></linearGradient><linearGradient id="i83" gradientUnits="userSpaceOnUse" x1="1414.2" y1="369.6" x2="1513.1" y2="422.2"><stop offset="0%" stop-color="#ffffff"/><stop offset="18.2%" stop-color="#ffe2ea"/><stop offset="36.4%" stop-color="#ffcad8"/><stop offset="59.2%" stop-color="#ffb0c5"/><stop offset="84.2%" stop-color="#ff98b4"/><stop offset="111.6%" stop-color="#ff82a4"/></linearGradient><linearGradient id="i84" gradientUnits="userSpaceOnUse" x1="1414.2" y1="369.6" x2="1516.5" y2="415.2"><stop offset="0%" stop-color="#ffffff"/><stop offset="18.2%" stop-color="#ffe3e9"/><stop offset="36.4%" stop-color="#ffcbd7"/><stop offset="59.2%" stop-color="#ffb1c3"/><stop offset="84.2%" stop-color="#ff99b1"/><stop offset="111.6%" stop-color="#ff83a1"/></linearGradient><linearGradient id="i85" gradientUnits="userSpaceOnUse" x1="1414.2" y1="369.6" x2="1519.4" y2="407.9"><stop offset="0%" stop-color="#ffffff"/><stop offset="18.2%" stop-color="#ffe3e9"/><stop offset="36.4%" stop-color="#ffcbd5"/><stop offset="59.2%" stop-color="#ffb2c1"/><stop offset="84.2%" stop-color="#ff9baf"/><stop offset="111.6%" stop-color="#ff859e"/></linearGradient><linearGradient id="i86" gradientUnits="userSpaceOnUse" x1="1414.2" y1="369.6" x2="1521.9" y2="400.5"><stop offset="0%" stop-color="#ffffff"/><stop offset="18.2%" stop-color="#ffe4e8"/><stop offset="36.4%" stop-color="#ffccd4"/><stop offset="59.2%" stop-color="#ffb3c0"/><stop offset="84.2%" stop-color="#ff9cad"/><stop offset="111.6%" stop-color="#ff879b"/></linearGradient><linearGradient id="i87" gradientUnits="userSpaceOnUse" x1="1414.2" y1="369.6" x2="1523.8" y2="392.9"><stop offset="0%" stop-color="#ffffff"/><stop offset="18.2%" stop-color="#ffe4e7"/><stop offset="36.4%" stop-color="#ffcdd3"/><stop offset="59.2%" stop-color="#ffb5be"/><stop offset="84.2%" stop-color="#ff9eab"/><stop offset="111.6%" stop-color="#ff8a99"/></linearGradient><linearGradient id="i88" gradientUnits="userSpaceOnUse" x1="1414.2" y1="369.6" x2="1525.1" y2="385.2"><stop offset="0%" stop-color="#ffffff"/><stop offset="18.2%" stop-color="#ffe5e7"/><stop offset="36.4%" stop-color="#ffced3"/><stop offset="59.2%" stop-color="#ffb7bd"/><stop offset="84.2%" stop-color="#ffa1a9"/><stop offset="111.6%" stop-color="#ff8d97"/></linearGradient><linearGradient id="i89" gradientUnits="userSpaceOnUse" x1="1414.2" y1="369.6" x2="1525.9" y2="377.4"><stop offset="0%" stop-color="#ffffff"/><stop offset="18.2%" stop-color="#ffe6e7"/><stop offset="36.4%" stop-color="#ffd0d2"/><stop offset="59.2%" stop-color="#ffb9bc"/><stop offset="84.2%" stop-color="#ffa4a8"/><stop offset="111.6%" stop-color="#ff9095"/></linearGradient></defs>
<g shape-rendering="crispEdges"><path d="M1414.2,369.6 L1531.7,373.7 L1531.6,362.2 Z" fill="url(#i0)"/>
<path d="M1414.2,369.6 L1531.7,365.5 L1530.8,354 Z" fill="url(#i1)"/>
<path d="M1414.2,369.6 L1531.2,357.3 L1529.4,346 Z" fill="url(#i2)"/>
<path d="M1414.2,369.6 L1530,349.2 L1527.5,338 Z" fill="url(#i3)"/>
<path d="M1414.2,369.6 L1528.3,341.1 L1525,330.2 Z" fill="url(#i4)"/>
<path d="M1414.2,369.6 L1526,333.3 L1522,322.5 Z" fill="url(#i5)"/>
<path d="M1414.2,369.6 L1523.2,325.5 L1518.4,315.1 Z" fill="url(#i6)"/>
<path d="M1414.2,369.6 L1519.9,318 L1514.4,308 Z" fill="url(#i7)"/>
<path d="M1414.2,369.6 L1516,310.8 L1509.8,301.1 Z" fill="url(#i8)"/>
<path d="M1414.2,369.6 L1511.7,303.8 L1504.8,294.6 Z" fill="url(#i9)"/>
<path d="M1414.2,369.6 L1506.9,297.2 L1499.4,288.5 Z" fill="url(#i10)"/>
<path d="M1414.2,369.6 L1501.6,290.9 L1493.5,282.8 Z" fill="url(#i11)"/>
<path d="M1414.2,369.6 L1495.9,285 L1487.2,277.4 Z" fill="url(#i12)"/>
<path d="M1414.2,369.6 L1489.8,279.5 L1480.6,272.6 Z" fill="url(#i13)"/>
<path d="M1414.2,369.6 L1483.3,274.5 L1473.7,268.2 Z" fill="url(#i14)"/>
<path d="M1414.2,369.6 L1476.5,269.9 L1466.5,264.3 Z" fill="url(#i15)"/>
<path d="M1414.2,369.6 L1469.4,265.8 L1459,260.9 Z" fill="url(#i16)"/>
<path d="M1414.2,369.6 L1462,262.2 L1451.3,258 Z" fill="url(#i17)"/>
<path d="M1414.2,369.6 L1454.4,259.1 L1443.4,255.7 Z" fill="url(#i18)"/>
<path d="M1414.2,369.6 L1446.6,256.6 L1435.4,253.9 Z" fill="url(#i19)"/>
<path d="M1414.2,369.6 L1438.7,254.6 L1427.3,252.7 Z" fill="url(#i20)"/>
<path d="M1414.2,369.6 L1430.6,253.1 L1419.1,252.1 Z" fill="url(#i21)"/>
<path d="M1414.2,369.6 L1422.4,252.3 L1410.9,252 Z" fill="url(#i22)"/>
<path d="M1414.2,369.6 L1414.2,252 L1402.7,252.6 Z" fill="url(#i23)"/>
<path d="M1414.2,369.6 L1406,252.3 L1394.6,253.6 Z" fill="url(#i24)"/>
<path d="M1414.2,369.6 L1397.8,253.1 L1386.5,255.3 Z" fill="url(#i25)"/>
<path d="M1414.2,369.6 L1389.7,254.6 L1378.6,257.5 Z" fill="url(#i26)"/>
<path d="M1414.2,369.6 L1381.8,256.6 L1370.9,260.3 Z" fill="url(#i27)"/>
<path d="M1414.2,369.6 L1374,259.1 L1363.4,263.5 Z" fill="url(#i28)"/>
<path d="M1414.2,369.6 L1366.4,262.2 L1356.1,267.3 Z" fill="url(#i29)"/>
<path d="M1414.2,369.6 L1359,265.8 L1349.1,271.6 Z" fill="url(#i30)"/>
<path d="M1414.2,369.6 L1351.9,269.9 L1342.4,276.4 Z" fill="url(#i31)"/>
<path d="M1414.2,369.6 L1345.1,274.5 L1336.1,281.7 Z" fill="url(#i32)"/>
<path d="M1414.2,369.6 L1338.6,279.5 L1330.2,287.3 Z" fill="url(#i33)"/>
<path d="M1414.2,369.6 L1332.5,285 L1324.6,293.4 Z" fill="url(#i34)"/>
<path d="M1414.2,369.6 L1326.8,290.9 L1319.5,299.8 Z" fill="url(#i35)"/>
<path d="M1414.2,369.6 L1321.5,297.2 L1314.9,306.6 Z" fill="url(#i36)"/>
<path d="M1414.2,369.6 L1316.7,303.8 L1310.8,313.7 Z" fill="url(#i37)"/>
<path d="M1414.2,369.6 L1312.4,310.8 L1307.1,321 Z" fill="url(#i38)"/>
<path d="M1414.2,369.6 L1308.5,318 L1304,328.6 Z" fill="url(#i39)"/>
<path d="M1414.2,369.6 L1305.2,325.5 L1301.4,336.4 Z" fill="url(#i40)"/>
<path d="M1414.2,369.6 L1302.4,333.3 L1299.3,344.3 Z" fill="url(#i41)"/>
<path d="M1414.2,369.6 L1300.1,341.1 L1297.9,352.4 Z" fill="url(#i42)"/>
<path d="M1414.2,369.6 L1298.4,349.2 L1296.9,360.6 Z" fill="url(#i43)"/>
<path d="M1414.2,369.6 L1297.2,357.3 L1296.6,368.8 Z" fill="url(#i44)"/>
<path d="M1414.2,369.6 L1296.7,365.5 L1296.8,377 Z" fill="url(#i45)"/>
<path d="M1414.2,369.6 L1296.7,373.7 L1297.6,385.2 Z" fill="url(#i46)"/>
<path d="M1414.2,369.6 L1297.2,381.9 L1299,393.2 Z" fill="url(#i47)"/>
<path d="M1414.2,369.6 L1298.4,390 L1300.9,401.2 Z" fill="url(#i48)"/>
<path d="M1414.2,369.6 L1300.1,398.1 L1303.4,409 Z" fill="url(#i49)"/>
<path d="M1414.2,369.6 L1302.4,405.9 L1306.4,416.7 Z" fill="url(#i50)"/>
<path d="M1414.2,369.6 L1305.2,413.7 L1310,424.1 Z" fill="url(#i51)"/>
<path d="M1414.2,369.6 L1308.5,421.2 L1314,431.2 Z" fill="url(#i52)"/>
<path d="M1414.2,369.6 L1312.4,428.4 L1318.6,438.1 Z" fill="url(#i53)"/>
<path d="M1414.2,369.6 L1316.7,435.4 L1323.6,444.6 Z" fill="url(#i54)"/>
<path d="M1414.2,369.6 L1321.5,442 L1329,450.7 Z" fill="url(#i55)"/>
<path d="M1414.2,369.6 L1326.8,448.3 L1334.9,456.4 Z" fill="url(#i56)"/>
<path d="M1414.2,369.6 L1332.5,454.2 L1341.2,461.8 Z" fill="url(#i57)"/>
<path d="M1414.2,369.6 L1338.6,459.7 L1347.8,466.6 Z" fill="url(#i58)"/>
<path d="M1414.2,369.6 L1345.1,464.7 L1354.7,471 Z" fill="url(#i59)"/>
<path d="M1414.2,369.6 L1351.9,469.3 L1361.9,474.9 Z" fill="url(#i60)"/>
<path d="M1414.2,369.6 L1359,473.4 L1369.4,478.3 Z" fill="url(#i61)"/>
<path d="M1414.2,369.6 L1366.4,477 L1377.1,481.2 Z" fill="url(#i62)"/>
<path d="M1414.2,369.6 L1374,480.1 L1385,483.5 Z" fill="url(#i63)"/>
<path d="M1414.2,369.6 L1381.8,482.6 L1393,485.3 Z" fill="url(#i64)"/>
<path d="M1414.2,369.6 L1389.7,484.6 L1401.1,486.5 Z" fill="url(#i65)"/>
<path d="M1414.2,369.6 L1397.8,486.1 L1409.3,487.1 Z" fill="url(#i66)"/>
<path d="M1414.2,369.6 L1406,486.9 L1417.5,487.2 Z" fill="url(#i67)"/>
<path d="M1414.2,369.6 L1414.2,487.2 L1425.7,486.6 Z" fill="url(#i68)"/>
<path d="M1414.2,369.6 L1422.4,486.9 L1433.8,485.6 Z" fill="url(#i69)"/>
<path d="M1414.2,369.6 L1430.6,486.1 L1441.9,483.9 Z" fill="url(#i70)"/>
<path d="M1414.2,369.6 L1438.7,484.6 L1449.8,481.7 Z" fill="url(#i71)"/>
<path d="M1414.2,369.6 L1446.6,482.6 L1457.5,478.9 Z" fill="url(#i72)"/>
<path d="M1414.2,369.6 L1454.4,480.1 L1465,475.7 Z" fill="url(#i73)"/>
<path d="M1414.2,369.6 L1462,477 L1472.3,471.9 Z" fill="url(#i74)"/>
<path d="M1414.2,369.6 L1469.4,473.4 L1479.3,467.6 Z" fill="url(#i75)"/>
<path d="M1414.2,369.6 L1476.5,469.3 L1486,462.8 Z" fill="url(#i76)"/>
<path d="M1414.2,369.6 L1483.3,464.7 L1492.3,457.5 Z" fill="url(#i77)"/>
<path d="M1414.2,369.6 L1489.8,459.7 L1498.2,451.9 Z" fill="url(#i78)"/>
<path d="M1414.2,369.6 L1495.9,454.2 L1503.8,445.8 Z" fill="url(#i79)"/>
<path d="M1414.2,369.6 L1501.6,448.3 L1508.9,439.4 Z" fill="url(#i80)"/>
<path d="M1414.2,369.6 L1506.9,442 L1513.5,432.6 Z" fill="url(#i81)"/>
<path d="M1414.2,369.6 L1511.7,435.4 L1517.6,425.5 Z" fill="url(#i82)"/>
<path d="M1414.2,369.6 L1516,428.4 L1521.3,418.2 Z" fill="url(#i83)"/>
<path d="M1414.2,369.6 L1519.9,421.2 L1524.4,410.6 Z" fill="url(#i84)"/>
<path d="M1414.2,369.6 L1523.2,413.7 L1527,402.8 Z" fill="url(#i85)"/>
<path d="M1414.2,369.6 L1526,405.9 L1529.1,394.9 Z" fill="url(#i86)"/>
<path d="M1414.2,369.6 L1528.3,398.1 L1530.5,386.8 Z" fill="url(#i87)"/>
<path d="M1414.2,369.6 L1530,390 L1531.5,378.6 Z" fill="url(#i88)"/>
<path d="M1414.2,369.6 L1531.2,381.9 L1531.8,370.4 Z" fill="url(#i89)"/></g></g>
<rect x="1335.8" y="308.8" width="158" height="122" fill="none" stroke="#7c7c7c" stroke-width="1.3"/>
<rect x="1408.2" y="363.8" width="11.4" height="11.4" fill="none" stroke="#000" stroke-width="1.4"/>
<circle cx="1410.9" cy="365.7" r="3.2" fill="#fff" stroke="#000" stroke-width="1.2"/>
<text x="1236.6" y="456.2" font-size="20.8" textLength="246.6" lengthAdjust="spacingAndGlyphs" fill="#ffffff" stroke="#ffffff" stroke-width=".28">RGB Triplet: 235, 235, 235</text>
<rect x="999.7" y="40.8" width="11.6" height="11.6" fill="none" stroke="#fff" stroke-width="1.5" opacity=".95"/>
<rect x="1014.7" y="50.6" width="11.6" height="11.6" fill="none" stroke="#fff" stroke-width="1.5" opacity=".95"/>
<rect x="1033.4" y="63" width="11.6" height="11.6" fill="none" stroke="#fff" stroke-width="1.5" opacity=".95"/>
<rect x="1056.4" y="78.1" width="11.6" height="11.6" fill="none" stroke="#fff" stroke-width="1.5" opacity=".95"/>
<rect x="1085.6" y="97.3" width="11.6" height="11.6" fill="none" stroke="#fff" stroke-width="1.5" opacity=".95"/>
<rect x="1138.3" y="55.5" width="11.6" height="11.6" fill="none" stroke="#fff" stroke-width="1.5" opacity=".95"/>
<rect x="1136.8" y="67.5" width="11.6" height="11.6" fill="none" stroke="#fff" stroke-width="1.5" opacity=".95"/>
<rect x="1135" y="78.1" width="11.6" height="11.6" fill="none" stroke="#fff" stroke-width="1.5" opacity=".95"/>
<rect x="1133.1" y="92.4" width="11.6" height="11.6" fill="none" stroke="#fff" stroke-width="1.5" opacity=".95"/>
<rect x="1131.6" y="107.8" width="11.6" height="11.6" fill="none" stroke="#fff" stroke-width="1.5" opacity=".95"/>
<rect x="1027.5" y="135.5" width="11.6" height="11.6" fill="none" stroke="#fff" stroke-width="1.5" opacity=".95"/>
<rect x="1046.2" y="134.5" width="11.6" height="11.6" fill="none" stroke="#fff" stroke-width="1.5" opacity=".95"/>
<rect x="1065.4" y="132.2" width="11.6" height="11.6" fill="none" stroke="#fff" stroke-width="1.5" opacity=".95"/>
<rect x="1086.2" y="129.7" width="11.6" height="11.6" fill="none" stroke="#fff" stroke-width="1.5" opacity=".95"/>
<rect x="1106.2" y="127.6" width="11.6" height="11.6" fill="none" stroke="#fff" stroke-width="1.5" opacity=".95"/>
<rect x="1181.9" y="119.8" width="11.6" height="11.6" fill="none" stroke="#fff" stroke-width="1.5" opacity=".95"/>
<rect x="1243.3" y="112.7" width="11.6" height="11.6" fill="none" stroke="#fff" stroke-width="1.5" opacity=".95"/>
<rect x="1303.8" y="106.8" width="11.6" height="11.6" fill="none" stroke="#fff" stroke-width="1.5" opacity=".95"/>
<rect x="1377.2" y="98.6" width="11.6" height="11.6" fill="none" stroke="#fff" stroke-width="1.5" opacity=".95"/>
<rect x="1452.1" y="90.4" width="11.6" height="11.6" fill="none" stroke="#fff" stroke-width="1.5" opacity=".95"/>
<rect x="1147.9" y="137.7" width="11.6" height="11.6" fill="none" stroke="#fff" stroke-width="1.5" opacity=".95"/>
<rect x="1174.1" y="155.4" width="11.6" height="11.6" fill="none" stroke="#fff" stroke-width="1.5" opacity=".95"/>
<rect x="1204" y="174.7" width="11.6" height="11.6" fill="none" stroke="#fff" stroke-width="1.5" opacity=".95"/>
<rect x="1237.9" y="197" width="11.6" height="11.6" fill="none" stroke="#fff" stroke-width="1.5" opacity=".95"/>
<rect x="1280.7" y="225.9" width="11.6" height="11.6" fill="none" stroke="#fff" stroke-width="1.5" opacity=".95"/>
<rect x="1124.5" y="153.6" width="11.6" height="11.6" fill="none" stroke="#fff" stroke-width="1.5" opacity=".95"/>
<rect x="1120.1" y="189" width="11.6" height="11.6" fill="none" stroke="#fff" stroke-width="1.5" opacity=".95"/>
<rect x="1112.8" y="232.6" width="11.6" height="11.6" fill="none" stroke="#fff" stroke-width="1.5" opacity=".95"/>
<rect x="1105.3" y="290.7" width="11.6" height="11.6" fill="none" stroke="#fff" stroke-width="1.5" opacity=".95"/>
<rect x="1093.2" y="369.4" width="11.6" height="11.6" fill="none" stroke="#fff" stroke-width="1.5" opacity=".95"/>
<circle cx="1034.7" cy="51.2" r="3.5" fill="#3f7f1f" stroke="#151515" stroke-width="1.3"/>
<circle cx="1036.8" cy="57.3" r="3.5" fill="#6f8f5f" stroke="#151515" stroke-width="1.3"/>
<circle cx="1039" cy="67.6" r="3.5" fill="#7f8f77" stroke="#151515" stroke-width="1.3"/>
<circle cx="1062.5" cy="85.7" r="3.5" fill="#838b7f" stroke="#151515" stroke-width="1.3"/>
<circle cx="1091.2" cy="102.2" r="3.5" fill="#838783" stroke="#151515" stroke-width="1.3"/>
<circle cx="1143.4" cy="62.8" r="3.5" fill="#7f7f1f" stroke="#151515" stroke-width="1.3"/>
<circle cx="1141.6" cy="72.1" r="3.5" fill="#8f8f4f" stroke="#151515" stroke-width="1.3"/>
<circle cx="1140.8" cy="83.9" r="3.5" fill="#8f8f5f" stroke="#151515" stroke-width="1.3"/>
<circle cx="1138.4" cy="97.6" r="3.5" fill="#8b8b77" stroke="#151515" stroke-width="1.3"/>
<circle cx="1136.3" cy="112.6" r="3.5" fill="#87877f" stroke="#151515" stroke-width="1.3"/>
<circle cx="1057.4" cy="136.8" r="3.5" fill="#1f8797" stroke="#151515" stroke-width="1.3"/>
<circle cx="1069.1" cy="136.8" r="3.5" fill="#838b8b" stroke="#151515" stroke-width="1.3"/>
<circle cx="1091.2" cy="133.5" r="3.5" fill="#838787" stroke="#151515" stroke-width="1.3"/>
<circle cx="1110.8" cy="132.2" r="3.5" fill="#858787" stroke="#151515" stroke-width="1.3"/>
<circle cx="1185.9" cy="124.1" r="3.5" fill="#878383" stroke="#151515" stroke-width="1.3"/>
<circle cx="1244.6" cy="118.3" r="3.5" fill="#877f7f" stroke="#151515" stroke-width="1.3"/>
<circle cx="1302.5" cy="112.4" r="3.5" fill="#877b7b" stroke="#151515" stroke-width="1.3"/>
<circle cx="1374.1" cy="105.9" r="3.5" fill="#8b6b6b" stroke="#151515" stroke-width="1.3"/>
<circle cx="1417.4" cy="92.9" r="3.5" fill="#7f0f0f" stroke="#151515" stroke-width="1.3"/>
<circle cx="1152.5" cy="142.6" r="3.5" fill="#878387" stroke="#151515" stroke-width="1.3"/>
<circle cx="1179.9" cy="157.6" r="3.5" fill="#877f87" stroke="#151515" stroke-width="1.3"/>
<circle cx="1208.8" cy="178.2" r="3.5" fill="#877b87" stroke="#151515" stroke-width="1.3"/>
<circle cx="1243.3" cy="201.7" r="3.5" fill="#877787" stroke="#151515" stroke-width="1.3"/>
<circle cx="1273.3" cy="221.1" r="3.5" fill="#7f1f9f" stroke="#151515" stroke-width="1.3"/>
<circle cx="1129.1" cy="156.8" r="3.5" fill="#838387" stroke="#151515" stroke-width="1.3"/>
<circle cx="1124.6" cy="193.5" r="3.5" fill="#7f7f8b" stroke="#151515" stroke-width="1.3"/>
<circle cx="1117.5" cy="238.4" r="3.5" fill="#7b7b8f" stroke="#151515" stroke-width="1.3"/>
<circle cx="1104.9" cy="300.8" r="3.5" fill="#77779b" stroke="#151515" stroke-width="1.3"/>
<circle cx="1119.6" cy="370" r="3.5" fill="#1f1f8f" stroke="#151515" stroke-width="1.3"/>
<rect x="1127.8" y="125.5" width="11.6" height="11.6" fill="none" stroke="#111" stroke-width="1.6"/>
<circle cx="1132.5" cy="130.9" r="3.5" fill="#fff" stroke="#151515" stroke-width="1.3"/>
</g>
</svg>

<div id="deform" class="abs">dE Formula:</div>
<div id="desel" class="abs"><span>2000</span><i></i></div>

<div id="reading" class="abs">
  <h2>Current Reading</h2>
  <p style="top:554.6px">x: 0,3118</p>
  <p style="top:589.4px">y: 0,3304</p>
  <p style="top:623.2px">fL: 683,174</p>
  <p style="top:658.6px;transform:scaleX(1.028);transform-origin:0 0">cd/m²: 2340,732</p>
</div>

<table id="data">
  <tr class="hd"><th style="width:170.6px"></th><th><span style="margin-left:30.4px">100</span></th></tr>
  <tr class="d"><td class="k"><span>x: CIE31</span></td><td class="v"><span>0,3118</span></td></tr>
  <tr class="l"><td class="k"><span>y: CIE31</span></td><td class="v"><span>0,3304</span></td></tr>
  <tr class="d"><td class="k"><span>Y</span></td><td class="v"><span>2340,7321</span></td></tr>
  <tr class="l"><td class="k"><span>Target x:CIE31</span></td><td class="v"><span>0,3127</span></td></tr>
  <tr class="d"><td class="k"><span>Target y:CIE31</span></td><td class="v"><span>0,3290</span></td></tr>
  <tr class="l"><td class="k"><span>Target Y</span></td><td class="v"><span>2340,7321</span></td></tr>
</table>

<div id="toolbar" class="abs">
  <div id="lbtn" class="tb">
    <svg width="47" height="24" viewBox="0 0 47 24" style="position:absolute;left:-1px;top:0"><circle cx="23" cy="7.6" r="6.6" fill="#6c6c6c"/><path d="M19.2 9.8L23 5.4L26.8 9.8Z" fill="#1a1a1a"/></svg>
    <div class="sw"></div>
  </div>
  <div id="sel" class="tb"><div class="sw"></div><b>100</b></div>
  <div id="nav">
<div class="tb gbtn" style="left:1263.6px;top:0;width:50px;height:20px;border-radius:4px 0 0 0;background:linear-gradient(#a2a2a2,#8c8c8c)"><svg width="50" height="20" viewBox="0 0 50 20"><circle cx="25" cy="8.8" r="7" fill="#7d7d7d"/><path d="M21 11.2L25 6.4L29 11.2Z" fill="#1c1c1c"/></svg></div>
<div class="tb gbtn" style="left:1263.6px;top:20px;width:50px;height:46px;background:linear-gradient(#8e8e8e,#6c6c6c)"><svg width="50" height="46" viewBox="0 0 50 46"><defs><linearGradient id="sqg" x1="0" y1="0" x2="0" y2="1"><stop offset="0" stop-color="#a6a6a6"/><stop offset="1" stop-color="#7c7c7c"/></linearGradient></defs><rect x="8.2" y="6" width="31" height="30" rx="3.5" fill="url(#sqg)" stroke="#0c0c0c" stroke-width="2.2"/><rect x="17" y="14.2" width="14.8" height="14.2" fill="#050505"/></svg></div>
<div class="tb gbtn" style="left:1314.4px;top:0;width:47.8px;height:31.4px;"><svg width="47.8" height="31" viewBox="0 0 47.8 31"><defs><linearGradient id="cg0" x1="0" y1="0" x2="0" y2="1"><stop offset="0" stop-color="#7e7e7e"/><stop offset="1" stop-color="#a8a8a8"/></linearGradient></defs><circle cx="23.6" cy="15.2" r="10.6" fill="url(#cg0)"/><rect x="19.3" y="10.9" width="8.6" height="8.6" fill="#363636"/></svg></div>
<div class="tb gbtn" style="left:1362.2px;top:0;width:47.1px;height:31.4px;"><svg width="47.1" height="31" viewBox="0 0 47.1 31"><defs><linearGradient id="cg1" x1="0" y1="0" x2="0" y2="1"><stop offset="0" stop-color="#7e7e7e"/><stop offset="1" stop-color="#a8a8a8"/></linearGradient></defs><circle cx="23.25" cy="15.2" r="10.6" fill="url(#cg1)"/><path d="M19.65 9.6L29.25 15.2L19.65 20.8Z" fill="#363636"/></svg></div>
<div class="tb gbtn" style="left:1409.3px;top:0;width:46.8px;height:31.4px;"><svg width="46.8" height="31" viewBox="0 0 46.8 31"><defs><linearGradient id="cg2" x1="0" y1="0" x2="0" y2="1"><stop offset="0" stop-color="#7e7e7e"/><stop offset="1" stop-color="#a8a8a8"/></linearGradient></defs><circle cx="23.1" cy="15.2" r="10.6" fill="url(#cg2)"/><path d="M19.7 9.2H17.5V21.2H19.7 M26.5 9.2H28.7V21.2H26.5" fill="none" stroke="#363636" stroke-width="1.9"/><path d="M20.5 15.2H25.9" stroke="#363636" stroke-width="1.8" stroke-dasharray="1.8 1.6"/></svg></div>
<div class="tb gbtn" style="left:1456.1px;top:0;width:47.7px;height:31.4px;"><svg width="47.7" height="31" viewBox="0 0 47.7 31"><defs><linearGradient id="cg3" x1="0" y1="0" x2="0" y2="1"><stop offset="0" stop-color="#7e7e7e"/><stop offset="1" stop-color="#a8a8a8"/></linearGradient></defs><circle cx="23.55" cy="15.2" r="10.6" fill="url(#cg3)"/><path d="M23.55 15.2c-1.8 -3.4 -6.4 -3.4 -6.4 0s4.6 3.4 6.4 0s6.4 -3.4 6.4 0s-4.6 3.4 -6.4 0" fill="none" stroke="#363636" stroke-width="1.9"/></svg></div>
<div class="tb gbtn" style="left:1503.8px;top:0;width:47px;height:31.4px;background:linear-gradient(#3e3e3e,#363636);border-color:#444 #333 #333 #444"><svg width="47" height="31" viewBox="0 0 47 31"><circle cx="23.2" cy="15.2" r="10.4" fill="#2e2e2e"/><path d="M18.4 14.2a5 5.4 0 0 1 8.8 -2.6" fill="none" stroke="#1e1e1e" stroke-width="2.6"/><path d="M28 16.2a5 5.4 0 0 1 -8.8 2.6" fill="none" stroke="#1e1e1e" stroke-width="2.6"/><path d="M25.4 12.4l4.4 0.4l-0.6 -4.6z M21 18l-4.4 -0.4l0.6 4.6z" fill="#1e1e1e"/></svg></div>
<div class="tb gbtn" style="left:1550.8px;top:0;width:47.2px;height:31.4px;"><svg width="47.2" height="31" viewBox="0 0 47.2 31"><defs><linearGradient id="cg5" x1="0" y1="0" x2="0" y2="1"><stop offset="0" stop-color="#7e7e7e"/><stop offset="1" stop-color="#a8a8a8"/></linearGradient></defs><circle cx="23.3" cy="15.2" r="10.6" fill="url(#cg5)"/></svg></div>
<div class="tb gbtn" style="left:1314.4px;top:33px;width:141.7px;height:33px;background:linear-gradient(#a4a4a4,#828282)"><svg width="141.7" height="33" viewBox="0 0 141.7 33"><defs><linearGradient id="cgb" x1="0" y1="0" x2="0" y2="1"><stop offset="0" stop-color="#808080"/><stop offset="1" stop-color="#a8a8a8"/></linearGradient></defs><circle cx="32.6" cy="15.4" r="10.4" fill="url(#cgb)"/><path d="M36.6 11.2L33 15.4L36.6 19.6M32.6 11.2L29 15.4L32.6 19.6" fill="none" stroke="#444" stroke-width="1.7"/></svg><span style="left:58.8px;top:3.4px;transform:scaleX(1.02)">Back</span></div>
<div class="tb gbtn" style="left:1456.1px;top:33px;width:141.9px;height:33px;background:linear-gradient(#a4a4a4,#828282)"><svg width="141.9" height="33" viewBox="0 0 141.9 33"><defs><linearGradient id="cgn" x1="0" y1="0" x2="0" y2="1"><stop offset="0" stop-color="#808080"/><stop offset="1" stop-color="#a8a8a8"/></linearGradient></defs><circle cx="113.6" cy="15.4" r="10.4" fill="url(#cgn)"/><path d="M109.6 11.2L113.2 15.4L109.6 19.6M113.6 11.2L117.2 15.4L113.6 19.6" fill="none" stroke="#444" stroke-width="1.7"/></svg><span style="left:27.8px;top:3.4px;transform:scaleX(1.12)">Next</span></div>
</div>
</div>
</body>
</html>
